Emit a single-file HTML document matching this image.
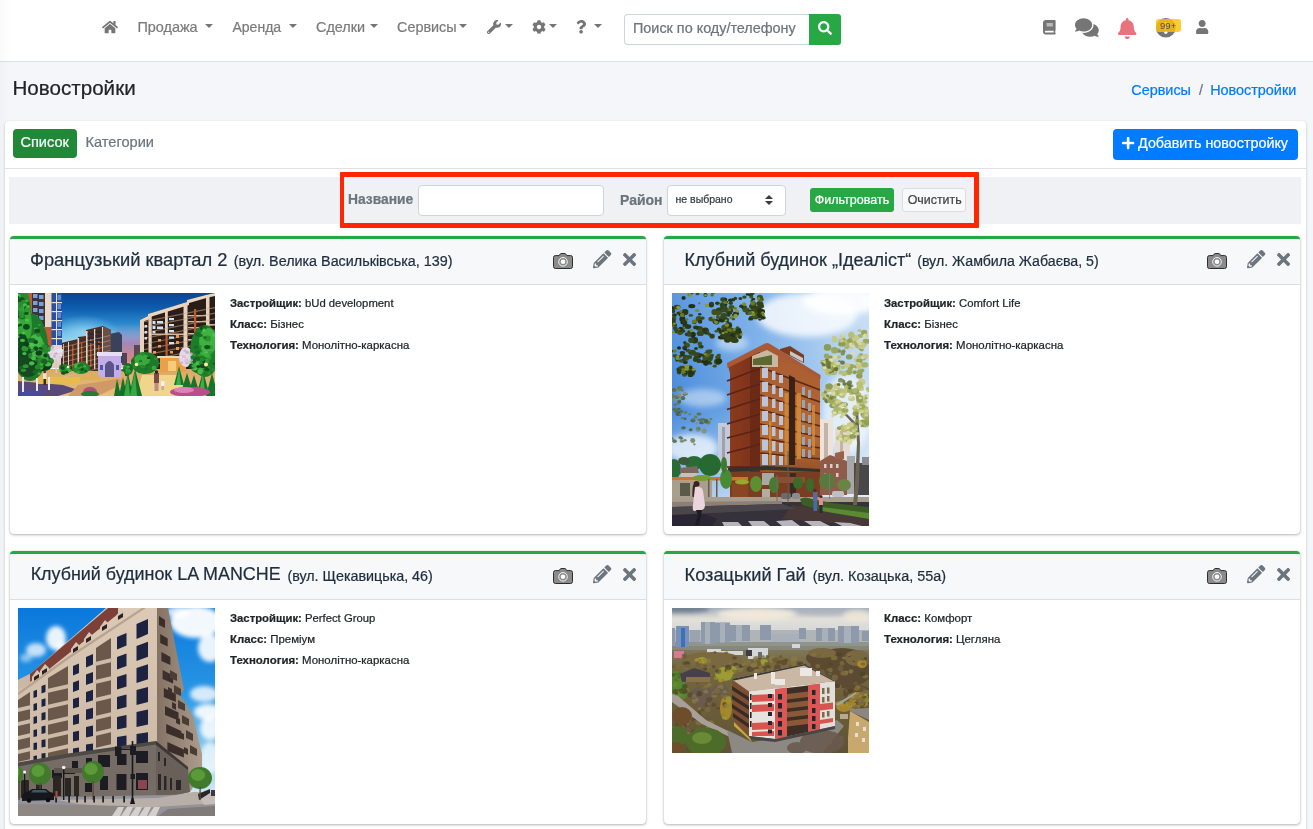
<!DOCTYPE html>
<html lang="ru">
<head>
<meta charset="utf-8">
<title>Новостройки</title>
<style>
*{box-sizing:border-box;margin:0;padding:0}
html,body{width:1313px;height:829px;overflow:hidden}
body{background:#f4f6f9;font-family:"Liberation Sans",Arial,Helvetica,sans-serif;font-size:14.4px;color:#212529;position:relative}
.abs{position:absolute}
.t{position:absolute;white-space:nowrap;line-height:1;-webkit-text-stroke:0.22px currentColor}
svg{display:block;position:absolute;overflow:visible}
/* navbar */
#nav{left:0;top:0;width:1313px;height:62px;background:#fff;border-bottom:1px solid #dee2e6}
.nl{color:#7b7b7b;font-size:14.4px}
.caret{position:absolute;width:0;height:0;border-left:4px solid transparent;border-right:4px solid transparent;border-top:4px solid #757575}
#search{left:624px;top:14px;width:186px;height:31px;border:1px solid #ced4da;border-right:0;border-radius:4px 0 0 4px;background:#fff}
#sbtn{left:809px;top:14px;width:32px;height:31px;background:#28a745;border-radius:0 3px 3px 0}
/* content */
#outer{left:5px;top:121px;width:1301px;height:720px;background:#fff;border-radius:4px;box-shadow:0 0 1px rgba(0,0,0,.125),0 1px 3px rgba(0,0,0,.2)}
#tabline{left:5px;top:168px;width:1301px;height:1px;background:#dfe1e4}
#fbar{left:9px;top:177px;width:1292px;height:47px;background:#eff1f4}
.card{position:absolute;background:#fff;border-radius:4px;border-top:3px solid #28a745;box-shadow:0 0 1px rgba(0,0,0,.25),0 1px 3px rgba(0,0,0,.28)}
.ch{position:absolute;left:0;top:0;width:100%;height:46px;background:#f7f8fa;border-bottom:1px solid #dcdee1;border-radius:2px 2px 0 0}
.ct{color:#1f2d3d;font-size:18.3px}
.ct small{font-size:14.35px}
.bt{font-size:11.3px;color:#212529}
.bt b{font-weight:bold}
.bt2{font-size:11.43px}
</style>
</head>
<body>
<div id="wrap" style="position:absolute;left:0;top:0;width:1313px;height:829px;overflow:hidden;will-change:transform;opacity:.9999">
<!-- NAVBAR -->
<div id="nav" class="abs"></div>
<div id="lsh" class="abs" style="left:0;top:0;width:13px;height:829px;background:linear-gradient(to right,rgba(0,0,0,.02),rgba(0,0,0,0))"></div>
<div class="t nl" style="left:137.5px;top:20px">Продажа</div><i class="caret" style="left:205px;top:24px"></i>
<div class="t nl" style="left:232.5px;top:20.3px;font-size:14px">Аренда</div><i class="caret" style="left:289px;top:24px"></i>
<div class="t nl" style="left:316px;top:20px">Сделки</div><i class="caret" style="left:370px;top:24px"></i>
<div class="t nl" style="left:397px;top:20px">Сервисы</div><i class="caret" style="left:459px;top:24px"></i>
<i class="caret" style="left:505px;top:24px"></i>
<i class="caret" style="left:549px;top:24px"></i>
<i class="caret" style="left:594px;top:24px"></i>
<div id="search" class="abs"></div>
<div class="t" style="left:633px;top:21px;font-size:14.4px;color:#6c757d">Поиск по коду/телефону</div>
<div id="sbtn" class="abs"></div>

<!-- HEADER -->
<div class="t" style="left:12.5px;top:78px;font-size:20.6px;color:#212529">Новостройки</div>
<div class="t" style="left:1131.3px;top:83px;font-size:14.4px;color:#007bff">Сервисы</div>
<div class="t" style="left:1199px;top:83px;font-size:14.4px;color:#6c757d">/</div>
<div class="t" style="left:1210.2px;top:83px;font-size:14.4px;color:#007bff">Новостройки</div>

<!-- OUTER CARD -->
<div id="outer" class="abs"></div>
<div class="abs" style="left:13px;top:129px;width:64px;height:29px;background:#218838;border-radius:4px"></div>
<div class="t" style="left:20.4px;top:135px;font-size:14.6px;color:#fff">Список</div>
<div class="t" style="left:85.5px;top:135px;font-size:14.6px;color:#6c757d">Категории</div>
<div class="abs" style="left:1113px;top:129px;width:185px;height:31px;background:#007bff;border-radius:4px"></div>
<div class="t" style="left:1138px;top:136px;font-size:14.35px;color:#fff">Добавить новостройку</div>
<div id="tabline" class="abs"></div>

<!-- FILTER BAR -->
<div id="fbar" class="abs"></div>
<div class="t" style="left:348px;top:193px;font-size:13.8px;font-weight:bold;color:#6c757d">Название</div>
<div class="abs" style="left:418px;top:185px;width:186px;height:31px;background:#fff;border:1px solid #ced4da;border-radius:4px"></div>
<div class="t" style="left:620px;top:192.5px;font-size:14px;font-weight:bold;color:#6c757d">Район</div>
<div class="abs" style="left:667px;top:185px;width:119px;height:31px;background:#fff;border:1px solid #ced4da;border-radius:4px"></div>
<div class="t" style="left:675.5px;top:194px;font-size:10.5px;color:#343a40">не выбрано</div>
<div class="abs" style="left:810px;top:188px;width:84px;height:24px;background:#28a745;border-radius:3px"></div>
<div class="t" style="left:814.8px;top:194px;font-size:12.5px;color:#fff">Фильтровать</div>
<div class="abs" style="left:902px;top:188px;width:64px;height:24px;background:#f8f9fa;border:1px solid #ddd;border-radius:3px"></div>
<div class="t" style="left:907.7px;top:194px;font-size:12.4px;color:#444">Очистить</div>
<div class="abs" style="left:340px;top:172px;width:639px;height:56.4px;border:5px solid #ff2600;border-left-width:4.6px;border-radius:1px"></div>

<!-- CARDS -->
<div class="card" style="left:10px;top:236px;width:636px;height:298px"><div class="ch"></div></div>
<div class="card" style="left:664px;top:236px;width:636px;height:298px"><div class="ch"></div></div>
<div class="card" style="left:10px;top:551px;width:636px;height:273px"><div class="ch"></div></div>
<div class="card" style="left:664px;top:551px;width:636px;height:273px"><div class="ch"></div></div>

<div class="t ct" style="left:30px;top:250.60px;font-size:18.32px">Французький квартал 2</div>
<div class="t ct" style="left:233.8px;top:253.96px;font-size:14.35px">(вул. Велика Васильківська, 139)</div>
<div class="t ct" style="left:684.6px;top:250.84px;font-size:18.03px">Клубний будинок „Ідеаліст“</div>
<div class="t ct" style="left:917.2px;top:254.10px;font-size:14.18px">(вул. Жамбила Жабаєва, 5)</div>
<div class="t ct" style="left:30.7px;top:565.94px;font-size:17.91px">Клубний будинок LA MANCHE</div>
<div class="t ct" style="left:287.4px;top:568.99px;font-size:14.31px">(вул. Щекавицька, 46)</div>
<div class="t ct" style="left:684.6px;top:565.73px;font-size:18.16px">Козацький Гай</div>
<div class="t ct" style="left:812.7px;top:568.93px;font-size:14.38px">(вул. Козацька, 55а)</div>

<div class="t bt" style="left:230px;top:297.5px"><b>Застройщик:</b> bUd development</div>
<div class="t bt bt2" style="left:230px;top:318.5px"><b>Класс:</b> Бізнес</div>
<div class="t bt bt2" style="left:230px;top:339.5px"><b>Технология:</b> Монолітно-каркасна</div>

<div class="t bt" style="left:884px;top:297.5px"><b>Застройщик:</b> Comfort Life</div>
<div class="t bt bt2" style="left:884px;top:318.5px"><b>Класс:</b> Бізнес</div>
<div class="t bt bt2" style="left:884px;top:339.5px"><b>Технология:</b> Монолітно-каркасна</div>

<div class="t bt" style="left:230px;top:612.5px"><b>Застройщик:</b> Perfect Group</div>
<div class="t bt bt2" style="left:230px;top:633.5px"><b>Класс:</b> Преміум</div>
<div class="t bt bt2" style="left:230px;top:654.5px"><b>Технология:</b> Монолітно-каркасна</div>

<div class="t bt bt2" style="left:884px;top:612.5px"><b>Класс:</b> Комфорт</div>
<div class="t bt bt2" style="left:884px;top:633.5px"><b>Технология:</b> Цегляна</div>

<!-- ICONS -->
<svg viewBox="0 0 576 512" style="left:102px;top:19.6px;width:16px;height:14.2px" preserveAspectRatio="none"><path d="M280.37 148.26L96 300.11V464a16 16 0 0 0 16 16l112.06-.29a16 16 0 0 0 15.92-16V368a16 16 0 0 1 16-16h64a16 16 0 0 1 16 16v95.64a16 16 0 0 0 16 16.05L464 480a16 16 0 0 0 16-16V300L295.67 148.26a12.19 12.19 0 0 0-15.3 0zM571.6 251.47L488 182.56V44.05a12 12 0 0 0-12-12h-56a12 12 0 0 0-12 12v72.61L318.47 43a48 48 0 0 0-61 0L4.34 251.47a12 12 0 0 0-1.6 16.9l25.5 31A12 12 0 0 0 45.15 301l235.22-193.74a12.19 12.19 0 0 1 15.3 0L530.9 301a12 12 0 0 0 16.9-1.6l25.5-31a12 12 0 0 0-1.7-16.93z" fill="#757575"/></svg>
<svg viewBox="0 0 512 512" style="left:487px;top:20px;width:14px;height:14px" preserveAspectRatio="none"><path d="M507.73 109.1c-2.24-9.03-13.54-12.09-20.12-5.51l-74.36 74.36-67.88-11.31-11.31-67.88 74.36-74.36c6.62-6.62 3.43-17.9-5.66-20.16-47.38-11.74-99.55.91-136.580 37.930-39.640 39.640-50.550 97.100-34.050 147.200L18.740 402.760c-24.990 24.990-24.990 65.510 0 90.500 24.990 24.990 65.510 24.990 90.500 0l213.210-213.210c50.120 16.710 107.470 5.680 147.370-34.220 37.070-37.070 49.700-89.320 37.910-136.730zM64 472c-13.250 0-24-10.750-24-24 0-13.260 10.750-24 24-24s24 10.740 24 24c0 13.250-10.750 24-24 24z" fill="#757575"/></svg>
<svg viewBox="0 0 512 512" style="left:531.5px;top:19.8px;width:14px;height:14px" preserveAspectRatio="none"><path d="M487.4 315.7l-42.6-24.6c4.3-23.2 4.3-47 0-70.200l42.600-24.600c4.900-2.800 7.100-8.600 5.500-14-11.100-35.600-30-67.800-54.700-94.600-3.800-4.100-10-5.100-14.800-2.300L380.800 110c-17.900-15.400-38.500-27.300-60.800-35.100V25.800c0-5.600-3.900-10.500-9.400-11.700-36.700-8.200-74.300-7.800-109.200 0-5.500 1.200-9.400 6.100-9.400 11.700V75c-22.200 7.900-42.800 19.800-60.800 35.100L88.700 85.500c-4.900-2.800-11-1.900-14.800 2.300-24.700 26.700-43.600 58.900-54.700 94.600-1.700 5.400.6 11.200 5.500 14L67.300 221c-4.300 23.200-4.300 47 0 70.200l-42.600 24.600c-4.900 2.800-7.100 8.600-5.500 14 11.100 35.600 30 67.800 54.700 94.600 3.800 4.100 10 5.100 14.800 2.300l42.600-24.600c17.900 15.400 38.500 27.300 60.800 35.100v49.200c0 5.600 3.900 10.500 9.400 11.700 36.700 8.200 74.300 7.800 109.200 0 5.500-1.200 9.400-6.100 9.400-11.700v-49.200c22.200-7.900 42.800-19.800 60.800-35.100l42.600 24.600c4.900 2.800 11 1.900 14.800-2.300 24.700-26.700 43.600-58.900 54.700-94.600 1.500-5.500-.7-11.300-5.600-14.100zM256 336c-44.100 0-80-35.900-80-80s35.900-80 80-80 80 35.900 80 80-35.900 80-80 80z" fill="#757575"/></svg>
<svg viewBox="0 0 384 512" style="left:576.4px;top:20px;width:10.2px;height:13.6px" preserveAspectRatio="none"><path d="M202.021 0C122.202 0 70.503 32.703 29.914 91.026c-7.363 10.58-5.093 25.086 5.178 32.874l43.138 32.709c10.373 7.865 25.132 6.026 33.253-4.148 25.049-31.381 43.63-49.449 82.757-49.449 30.764 0 68.816 19.799 68.816 49.631 0 22.552-18.617 34.134-48.993 51.164-35.423 19.86-82.299 44.576-82.299 106.405V320c0 13.255 10.745 24 24 24h72.471c13.255 0 24-10.745 24-24v-5.773c0-42.86 125.268-44.645 125.268-160.627C377.504 66.256 286.902 0 202.021 0zM192 373.459c-38.196 0-69.271 31.075-69.271 69.271 0 38.195 31.075 69.27 69.271 69.270s69.271-31.075 69.271-69.271-31.075-69.270-69.271-69.270z" fill="#757575"/></svg>
<svg viewBox="0 0 512 512" style="left:817.5px;top:21px;width:14px;height:14px" preserveAspectRatio="none"><path d="M505 442.7L405.3 343c-4.5-4.5-10.6-7-17-7H372c27.6-35.3 44-79.7 44-128C416 93.1 322.9 0 208 0S0 93.1 0 208s93.1 208 208 208c48.3 0 92.7-16.4 128-44v16.3c0 6.4 2.5 12.5 7 17l99.7 99.7c9.4 9.4 24.6 9.4 33.9 0l28.3-28.3c9.4-9.4 9.4-24.6.1-34zM208 336c-70.7 0-128-57.2-128-128 0-70.7 57.2-128 128-128 70.7 0 128 57.2 128 128 0 70.7-57.2 128-128 128z" fill="#fff"/></svg>
<svg viewBox="0 0 448 512" style="left:1043.3px;top:19.5px;width:12.6px;height:14.4px" preserveAspectRatio="none"><path d="M448 360V24c0-13.3-10.7-24-24-24H96C43 0 0 43 0 96v320c0 53 43 96 96 96h328c13.3 0 24-10.7 24-24v-16c0-7.5-3.5-14.3-8.9-18.7-4.2-15.4-4.2-59.3 0-74.7 5.4-4.3 8.9-11.1 8.9-18.6zM128 134c0-3.3 2.7-6 6-6h212c3.3 0 6 2.7 6 6v20c0 3.3-2.7 6-6 6H134c-3.3 0-6-2.7-6-6v-20zm0 64c0-3.3 2.7-6 6-6h212c3.3 0 6 2.7 6 6v20c0 3.3-2.7 6-6 6H134c-3.3 0-6-2.7-6-6v-20zm253.4 250H96c-17.7 0-32-14.3-32-32 0-17.6 14.4-32 32-32h285.4c-1.9 17.1-1.9 46.9 0 64z" fill="#757575"/></svg>
<svg viewBox="0 0 576 512" style="left:1075px;top:17.4px;width:23.8px;height:21.2px" preserveAspectRatio="none"><path d="M416 192c0-88.4-93.1-160-208-160S0 103.6 0 192c0 34.3 14.1 65.900 38 92-13.400 30.200-35.500 54.200-35.800 54.500-2.200 2.300-2.800 5.700-1.500 8.700S4.800 352 8 352c36.600 0 66.900-12.300 88.700-25 32.200 15.700 70.300 25 111.300 25 114.900 0 208-71.600 208-160zm122 220c23.900-26 38-57.700 38-92 0-66.900-53.500-124.200-129.300-148.100.9 6.600 1.300 13.300 1.300 20.100 0 105.900-107.700 192-240 192-10.800 0-21.300-.8-31.700-1.900C207.800 439.600 281.800 480 368 480c41 0 79.100-9.200 111.300-25 21.800 12.700 52.100 25 88.700 25 3.200 0 6.100-1.900 7.300-4.800 1.300-2.900.7-6.300-1.500-8.700-.3-.3-22.400-24.200-35.800-54.500z" fill="#757575"/></svg>
<svg viewBox="0 0 448 512" style="left:1118px;top:17.5px;width:18.4px;height:21px" preserveAspectRatio="none"><path d="M224 512c35.32 0 63.97-28.65 63.97-64H160.03c0 35.35 28.65 64 63.97 64zm215.39-149.71c-19.32-20.76-55.47-51.99-55.47-154.29 0-77.7-54.48-139.9-127.94-155.16V32c0-17.67-14.32-32-31.98-32s-31.98 14.33-31.98 32v20.84C118.56 68.1 64.08 130.3 64.08 208c0 102.3-36.15 133.53-55.47 154.29-6 6.45-8.66 14.16-8.61 21.71.11 16.4 12.98 32 32.1 32h383.8c19.12 0 32-15.6 32.1-32 .05-7.55-2.61-15.27-8.61-21.71z" fill="#e8737f"/></svg>
<svg viewBox="0 0 20 20" style="left:1156px;top:18px;width:19.6px;height:19.6px"><circle cx="10" cy="10" r="10" fill="#757575"/><rect x="8.6" y="4" width="2.8" height="7.5" rx="1" fill="#fff"/><circle cx="10" cy="14.6" r="1.7" fill="#fff"/></svg>
<div class="abs" style="left:1155.5px;top:19px;width:25.5px;height:13px;background:rgba(255,193,7,.82);border-radius:3px"></div>
<div class="t" style="left:1160px;top:21px;font-size:9.6px;-webkit-text-stroke:0;color:#55503a">99+</div>
<svg viewBox="0 0 448 512" style="left:1195.7px;top:19.7px;width:12.3px;height:14.1px" preserveAspectRatio="none"><path d="M224 256c70.7 0 128-57.3 128-128S294.7 0 224 0 96 57.3 96 128s57.3 128 128 128zm89.6 32h-16.7c-22.2 10.2-46.9 16-72.9 16s-50.6-5.8-72.9-16h-16.7C60.2 288 0 348.2 0 422.4V464c0 26.5 21.5 48 48 48h352c26.5 0 48-21.5 48-48v-41.6c0-74.2-60.2-134.4-134.4-134.4z" fill="#757575"/></svg>
<svg viewBox="0 0 448 512" style="left:1121.8px;top:136px;width:12.25px;height:14px" preserveAspectRatio="none"><path d="M416 208H272V64c0-17.67-14.33-32-32-32h-32c-17.67 0-32 14.33-32 32v144H32c-17.67 0-32 14.33-32 32v32c0 17.67 14.33 32 32 32h144v144c0 17.67 14.33 32 32 32h32c17.67 0 32-14.33 32-32V304h144c17.67 0 32-14.33 32-32v-32c0-17.67-14.33-32-32-32z" fill="#fff"/></svg>
<svg viewBox="0 0 4 5" style="left:764.7px;top:195px;width:8px;height:10px"><path d="M2 0L0 2h4zm0 5L0 3h4z" fill="#343a40"/></svg>
<svg viewBox="0 0 20 16" style="left:553px;top:253px;width:20px;height:16px"><path d="M6.2 2.6 L7.3 0.9 Q7.6 0.5 8.1 0.5 H11.9 Q12.4 0.5 12.7 0.9 L13.8 2.6 H17.6 Q19.5 2.6 19.5 4.5 V13.6 Q19.5 15.5 17.6 15.5 H2.4 Q0.5 15.5 0.5 13.6 V4.5 Q0.5 2.6 2.4 2.6 Z" fill="#8b8b8b" stroke="#2e2e2e" stroke-width="1"/><circle cx="10" cy="8.8" r="4.3" fill="#8b8b8b" stroke="#fff" stroke-width="0.9"/><circle cx="10" cy="8.8" r="2.3" fill="#fff"/></svg>
<svg viewBox="0 0 512 512" style="left:592.7px;top:249.9px;width:18.3px;height:18.3px" preserveAspectRatio="none"><path d="M497.9 142.1l-46.1 46.1c-4.7 4.7-12.3 4.7-17 0l-111-111c-4.7-4.7-4.7-12.3 0-17l46.1-46.1c18.7-18.7 49.1-18.7 67.900 0l60.100 60.100c18.800 18.700 18.800 49.100 0 67.900zM284.200 99.800L21.600 362.400.4 483.900c-2.900 16.400 11.400 30.600 27.800 27.800l121.500-21.300 262.600-262.600c4.700-4.700 4.700-12.300 0-17l-111-111c-4.800-4.700-12.400-4.700-17.100 0zM124.100 339.900c-5.500-5.500-5.500-14.300 0-19.800l154-154c5.500-5.500 14.300-5.500 19.800 0s5.500 14.300 0 19.800l-154 154c-5.500 5.500-14.300 5.500-19.800 0zM88 424h48v36.300l-64.500 11.300-31.100-31.100L51.700 376H88v48z" fill="#6c757d"/></svg>
<svg viewBox="0 0 352 512" style="left:623px;top:249.8px;width:13.1px;height:19px" preserveAspectRatio="none"><path d="M242.72 256l100.07-100.07c12.28-12.28 12.28-32.19 0-44.48l-22.24-22.24c-12.28-12.28-32.19-12.28-44.48 0L176 189.28 75.93 89.21c-12.28-12.28-32.19-12.28-44.48 0L9.21 111.45c-12.28 12.28-12.28 32.19 0 44.48L109.28 256 9.21 356.07c-12.28 12.28-12.28 32.19 0 44.48l22.24 22.24c12.28 12.28 32.2 12.28 44.48 0L176 322.72l100.07 100.07c12.28 12.28 32.2 12.28 44.48 0l22.24-22.24c12.28-12.28 12.28-32.19 0-44.48L242.72 256z" fill="#6c757d"/></svg>
<svg viewBox="0 0 20 16" style="left:1207px;top:253px;width:20px;height:16px"><path d="M6.2 2.6 L7.3 0.9 Q7.6 0.5 8.1 0.5 H11.9 Q12.4 0.5 12.7 0.9 L13.8 2.6 H17.6 Q19.5 2.6 19.5 4.5 V13.6 Q19.5 15.5 17.6 15.5 H2.4 Q0.5 15.5 0.5 13.6 V4.5 Q0.5 2.6 2.4 2.6 Z" fill="#8b8b8b" stroke="#2e2e2e" stroke-width="1"/><circle cx="10" cy="8.8" r="4.3" fill="#8b8b8b" stroke="#fff" stroke-width="0.9"/><circle cx="10" cy="8.8" r="2.3" fill="#fff"/></svg>
<svg viewBox="0 0 512 512" style="left:1246.7px;top:249.9px;width:18.3px;height:18.3px" preserveAspectRatio="none"><path d="M497.9 142.1l-46.1 46.1c-4.7 4.7-12.3 4.7-17 0l-111-111c-4.7-4.7-4.7-12.3 0-17l46.1-46.1c18.7-18.7 49.1-18.7 67.900 0l60.100 60.100c18.800 18.700 18.800 49.100 0 67.900zM284.200 99.800L21.600 362.400.4 483.900c-2.900 16.400 11.400 30.600 27.800 27.800l121.500-21.300 262.600-262.600c4.700-4.700 4.700-12.300 0-17l-111-111c-4.800-4.700-12.400-4.700-17.100 0zM124.100 339.900c-5.500-5.500-5.500-14.300 0-19.800l154-154c5.500-5.500 14.300-5.500 19.800 0s5.500 14.300 0 19.800l-154 154c-5.500 5.500-14.300 5.500-19.800 0zM88 424h48v36.300l-64.500 11.300-31.100-31.100L51.700 376H88v48z" fill="#6c757d"/></svg>
<svg viewBox="0 0 352 512" style="left:1277px;top:249.8px;width:13.1px;height:19px" preserveAspectRatio="none"><path d="M242.72 256l100.07-100.07c12.28-12.28 12.28-32.19 0-44.48l-22.24-22.24c-12.28-12.28-32.19-12.28-44.48 0L176 189.28 75.93 89.21c-12.28-12.28-32.19-12.28-44.48 0L9.21 111.45c-12.28 12.28-12.28 32.19 0 44.48L109.28 256 9.21 356.07c-12.28 12.28-12.28 32.19 0 44.48l22.24 22.24c12.28 12.28 32.2 12.28 44.48 0L176 322.72l100.07 100.07c12.28 12.28 32.2 12.28 44.48 0l22.24-22.24c12.28-12.28 12.28-32.19 0-44.48L242.72 256z" fill="#6c757d"/></svg>
<svg viewBox="0 0 20 16" style="left:553px;top:568px;width:20px;height:16px"><path d="M6.2 2.6 L7.3 0.9 Q7.6 0.5 8.1 0.5 H11.9 Q12.4 0.5 12.7 0.9 L13.8 2.6 H17.6 Q19.5 2.6 19.5 4.5 V13.6 Q19.5 15.5 17.6 15.5 H2.4 Q0.5 15.5 0.5 13.6 V4.5 Q0.5 2.6 2.4 2.6 Z" fill="#8b8b8b" stroke="#2e2e2e" stroke-width="1"/><circle cx="10" cy="8.8" r="4.3" fill="#8b8b8b" stroke="#fff" stroke-width="0.9"/><circle cx="10" cy="8.8" r="2.3" fill="#fff"/></svg>
<svg viewBox="0 0 512 512" style="left:592.7px;top:564.9px;width:18.3px;height:18.3px" preserveAspectRatio="none"><path d="M497.9 142.1l-46.1 46.1c-4.7 4.7-12.3 4.7-17 0l-111-111c-4.7-4.7-4.7-12.3 0-17l46.1-46.1c18.7-18.7 49.1-18.7 67.900 0l60.100 60.100c18.800 18.700 18.800 49.100 0 67.900zM284.200 99.800L21.600 362.400.4 483.900c-2.900 16.400 11.400 30.600 27.800 27.800l121.500-21.300 262.600-262.600c4.700-4.700 4.700-12.300 0-17l-111-111c-4.800-4.700-12.400-4.700-17.100 0zM124.100 339.900c-5.500-5.500-5.500-14.300 0-19.800l154-154c5.500-5.500 14.300-5.500 19.800 0s5.500 14.300 0 19.800l-154 154c-5.500 5.500-14.300 5.500-19.800 0zM88 424h48v36.300l-64.500 11.300-31.100-31.100L51.700 376H88v48z" fill="#6c757d"/></svg>
<svg viewBox="0 0 352 512" style="left:623px;top:564.8px;width:13.1px;height:19px" preserveAspectRatio="none"><path d="M242.72 256l100.07-100.07c12.28-12.28 12.28-32.19 0-44.48l-22.24-22.24c-12.28-12.28-32.19-12.28-44.48 0L176 189.28 75.93 89.21c-12.28-12.28-32.19-12.28-44.48 0L9.21 111.45c-12.28 12.28-12.28 32.19 0 44.48L109.28 256 9.21 356.07c-12.28 12.28-12.28 32.19 0 44.48l22.24 22.24c12.28 12.28 32.2 12.28 44.48 0L176 322.72l100.07 100.07c12.28 12.28 32.2 12.28 44.48 0l22.24-22.24c12.28-12.28 12.28-32.19 0-44.48L242.72 256z" fill="#6c757d"/></svg>
<svg viewBox="0 0 20 16" style="left:1207px;top:568px;width:20px;height:16px"><path d="M6.2 2.6 L7.3 0.9 Q7.6 0.5 8.1 0.5 H11.9 Q12.4 0.5 12.7 0.9 L13.8 2.6 H17.6 Q19.5 2.6 19.5 4.5 V13.6 Q19.5 15.5 17.6 15.5 H2.4 Q0.5 15.5 0.5 13.6 V4.5 Q0.5 2.6 2.4 2.6 Z" fill="#8b8b8b" stroke="#2e2e2e" stroke-width="1"/><circle cx="10" cy="8.8" r="4.3" fill="#8b8b8b" stroke="#fff" stroke-width="0.9"/><circle cx="10" cy="8.8" r="2.3" fill="#fff"/></svg>
<svg viewBox="0 0 512 512" style="left:1246.7px;top:564.9px;width:18.3px;height:18.3px" preserveAspectRatio="none"><path d="M497.9 142.1l-46.1 46.1c-4.7 4.7-12.3 4.7-17 0l-111-111c-4.7-4.7-4.7-12.3 0-17l46.1-46.1c18.7-18.7 49.1-18.7 67.900 0l60.100 60.100c18.800 18.700 18.800 49.100 0 67.900zM284.200 99.800L21.600 362.400.4 483.900c-2.900 16.400 11.400 30.600 27.800 27.800l121.500-21.300 262.600-262.600c4.700-4.700 4.700-12.300 0-17l-111-111c-4.800-4.700-12.400-4.700-17.100 0zM124.100 339.900c-5.500-5.500-5.500-14.300 0-19.800l154-154c5.500-5.500 14.300-5.500 19.800 0s5.500 14.300 0 19.800l-154 154c-5.500 5.500-14.300 5.500-19.800 0zM88 424h48v36.300l-64.500 11.300-31.100-31.100L51.700 376H88v48z" fill="#6c757d"/></svg>
<svg viewBox="0 0 352 512" style="left:1277px;top:564.8px;width:13.1px;height:19px" preserveAspectRatio="none"><path d="M242.72 256l100.07-100.07c12.28-12.28 12.28-32.19 0-44.48l-22.24-22.24c-12.28-12.28-32.19-12.28-44.48 0L176 189.28 75.93 89.21c-12.28-12.28-32.19-12.28-44.48 0L9.21 111.45c-12.28 12.28-12.28 32.19 0 44.48L109.28 256 9.21 356.07c-12.28 12.28-12.28 32.19 0 44.48l22.24 22.24c12.28 12.28 32.2 12.28 44.48 0L176 322.72l100.07 100.07c12.28 12.28 32.2 12.28 44.48 0l22.24-22.24c12.28-12.28 12.28-32.19 0-44.48L242.72 256z" fill="#6c757d"/></svg>
<!-- PHOTOS -->
<svg id="p1" viewBox="0 0 197 103" style="left:18px;top:293px;width:197px;height:103px;overflow:hidden">
<defs>
<linearGradient id="p1sky" x1="0" y1="0" x2="0" y2="1"><stop offset="0" stop-color="#0a4496"/><stop offset=".2" stop-color="#0e5cac"/><stop offset=".42" stop-color="#2a8cd0"/><stop offset=".58" stop-color="#74c0ea"/><stop offset=".7" stop-color="#cfe2ee"/><stop offset="1" stop-color="#e8c8b8"/></linearGradient><radialGradient id="p1glow" cx="0.5" cy="0.5" r="0.5"><stop offset="0" stop-color="#9ad8f4" stop-opacity=".85"/><stop offset="1" stop-color="#9ad8f4" stop-opacity="0"/></radialGradient>
<linearGradient id="p1sk2" x1="0" y1="0" x2="0" y2="1"><stop offset="0" stop-color="#7a86c0" stop-opacity="0"/><stop offset=".5" stop-color="#a088b8"/><stop offset="1" stop-color="#e8857a"/></linearGradient>
<linearGradient id="p1gr" x1="0" y1="0" x2="0" y2="1"><stop offset="0" stop-color="#d9a868"/><stop offset="1" stop-color="#e8c07a"/></linearGradient>
<filter id="p1b" x="-5%" y="-5%" width="110%" height="110%"><feGaussianBlur stdDeviation="0.55"/></filter>
<filter id="p1b2" x="-10%" y="-10%" width="120%" height="120%"><feGaussianBlur stdDeviation="1.2"/></filter>
<clipPath id="p1c"><rect width="197" height="103"/></clipPath>
</defs>
<g clip-path="url(#p1c)">
<rect width="197" height="75" fill="url(#p1sky)"/><ellipse cx="66" cy="40" rx="36" ry="18" fill="url(#p1glow)"/>
<rect x="98" y="30" width="30" height="40" fill="url(#p1sk2)" filter="url(#p1b2)"/>
<g filter="url(#p1b)">
<!-- ground -->
<rect x="0" y="76" width="197" height="27" fill="url(#p1gr)"/>
<!-- far dark buildings -->
<polygon points="91,41 101,39 104,42 104,70 91,70" fill="#39435a"/>
<rect x="104" y="60" width="5" height="12" fill="#4a4452"/>
<rect x="116" y="52" width="6" height="18" fill="#5a4650"/>
<!-- mid building -->
<polygon points="43,50 60,46 60,44 68,43 68,37 85,33 93,37 93,78 43,78" fill="#4a2e22"/>
<g fill="#e4d4c4"><rect x="59.500" y="45" width="1.600" height="30"/><rect x="50" y="49" width="1" height="27"/><rect x="68" y="38" width="1.600" height="38"/><rect x="76" y="36" width="1.300" height="40"/><rect x="84" y="34" width="1.500" height="42"/><rect x="45" y="51" width=".8" height="25"/></g>
<g fill="#b8562c"><rect x="54" y="52" width="1.500" height="22"/><rect x="72" y="44" width="1.500" height="30"/><rect x="80" y="48" width="1.500" height="26"/><rect x="63" y="50" width="1.300" height="24"/></g>
<polygon points="85,33 93,37 93,72 85,72" fill="#6a5048"/><polygon points="44,54.0 92,42.0 92,42.9 44,54.9" fill="#d8c4b0" opacity=".45"/><polygon points="44,59.0 92,47.0 92,47.9 44,59.9" fill="#d8c4b0" opacity=".45"/><polygon points="44,64.0 92,52.0 92,52.9 44,64.9" fill="#d8c4b0" opacity=".45"/><polygon points="44,69.0 92,57.0 92,57.9 44,69.9" fill="#d8c4b0" opacity=".45"/><polygon points="44,74.0 92,62.0 92,62.9 44,74.9" fill="#d8c4b0" opacity=".45"/><polygon points="44,79.0 92,67.0 92,67.9 44,79.9" fill="#d8c4b0" opacity=".45"/><polygon points="44,84.0 92,72.0 92,72.9 44,84.9" fill="#d8c4b0" opacity=".45"/>
<g fill="#2a2a3c"><rect x="69.800" y="40" width="5.800" height="2"/><rect x="69.800" y="44" width="5.800" height="2"/><rect x="69.800" y="48" width="5.800" height="2"/><rect x="77.500" y="38" width="6" height="2"/><rect x="77.500" y="42" width="6" height="2"/><rect x="77.500" y="46" width="6" height="2"/><rect x="77.500" y="50" width="6" height="2"/></g>
<!-- left tower -->
<rect x="8" y="0" width="36" height="56" fill="#d8cfc8"/>
<rect x="8" y="0" width="6" height="22" fill="#c65a30"/>
<rect x="14" y="0" width="13" height="34" fill="#3a3040"/>
<g fill="#7aa0d8"><rect x="15" y="1" width="4.500" height="4"/><rect x="21" y="2" width="4.500" height="4"/><rect x="15" y="8" width="4.500" height="4"/><rect x="21" y="9" width="4.500" height="4"/><rect x="15" y="15" width="4.500" height="4"/><rect x="21" y="16" width="4.500" height="4"/><rect x="15" y="22" width="4.500" height="4"/><rect x="21" y="23" width="4.500" height="4"/></g>
<rect x="27" y="0" width="6.500" height="34" fill="#ead8c6"/>
<rect x="27" y="34" width="7" height="20" fill="#c25a30"/>
<rect x="33.500" y="0" width="10.500" height="52" fill="#2c4f9c"/>
<g fill="#e8e0da"><rect x="33.500" y="9" width="10.500" height="1.200"/><rect x="33.500" y="18" width="10.500" height="1.200"/><rect x="33.500" y="27" width="10.500" height="1.200"/><rect x="33.500" y="36" width="10.500" height="1.200"/><rect x="33.500" y="45" width="10.500" height="1.200"/><rect x="38" y="0" width="1" height="52"/></g>
<g fill="#5a8ad8"><rect x="39.500" y="2" width="3.500" height="5"/><rect x="39.500" y="11" width="3.500" height="5"/><rect x="39.500" y="20" width="3.500" height="5"/><rect x="39.500" y="29" width="3.500" height="5"/><rect x="39.500" y="38" width="3.500" height="5"/></g>
<!-- right building -->
<polygon points="122,27 130,23 130,21 169,9 169,7 188,2 197,0 197,76 122,76" fill="#2c1c18"/>
<polygon points="122,27 130,23 130,21 169,9 169,7 188,2 197,0 197,3 190,4.500 171,10 171,12 132,24 132,26 124,29" fill="#ecd6c0"/>
<g fill="#e8d2bc"><rect x="122" y="27" width="4" height="36"/><rect x="130.500" y="23" width="3.200" height="40"/><rect x="147" y="17" width="2.800" height="24"/><rect x="165.500" y="10" width="4" height="50"/><rect x="188" y="3" width="3.500" height="32"/></g>
<g fill="#d8b89c"><rect x="133" y="40.500" width="33" height="1.600"/><rect x="170" y="22" width="18" height="1.300"/><rect x="170" y="28" width="18" height="1.300"/><rect x="170" y="34" width="20" height="1.300"/><rect x="170" y="40" width="14" height="1.300"/><rect x="170" y="46" width="10" height="1.300"/><rect x="191" y="31" width="6" height="1.500"/></g>
<polygon points="126,28.0 197,14.0 197,15.2 126,29.2" fill="#c8a88c" opacity=".55"/><polygon points="126,33.6 197,19.6 197,20.8 126,34.8" fill="#c8a88c" opacity=".55"/><polygon points="126,39.2 197,25.2 197,26.4 126,40.4" fill="#c8a88c" opacity=".55"/><polygon points="126,44.8 197,30.8 197,32.0 126,46.0" fill="#c8a88c" opacity=".55"/><polygon points="126,50.4 197,36.4 197,37.6 126,51.6" fill="#c8a88c" opacity=".55"/><polygon points="126,56.0 197,42.0 197,43.2 126,57.2" fill="#c8a88c" opacity=".55"/><polygon points="126,61.6 197,47.6 197,48.8 126,62.8" fill="#c8a88c" opacity=".55"/><polygon points="126,67.2 197,53.2 197,54.4 126,68.4" fill="#c8a88c" opacity=".55"/><polygon points="126,72.8 197,58.8 197,60.0 126,74.0" fill="#c8a88c" opacity=".55"/><g fill="#b85a30"><rect x="147.500" y="42" width="2.200" height="22"/><rect x="176" y="16" width="2.200" height="32"/></g>
<g fill="#cfe4f4"><rect x="134.500" y="28" width="3" height="3"/><rect x="139" y="28" width="6" height="2.500"/><rect x="134.500" y="33" width="3" height="3"/><rect x="139" y="33.500" width="6" height="2.500"/><rect x="134.500" y="38" width="3" height="2.400"/><rect x="151" y="25" width="5" height="2.200"/><rect x="151" y="31" width="5" height="2.200"/><rect x="151" y="37" width="5" height="2.200"/><rect x="151" y="43.500" width="5" height="2.200"/><rect x="151" y="49" width="5" height="2.200"/><rect x="126.500" y="32" width="2.500" height="2.500"/><rect x="126.500" y="38" width="2.500" height="2.500"/><rect x="126.500" y="44" width="2.500" height="2.500"/></g>
<g fill="#e89a50"><rect x="158" y="42" width="3" height="3"/><rect x="158" y="48" width="3" height="3"/><rect x="158" y="54" width="3" height="3"/><rect x="140" y="46" width="3" height="2.500"/><rect x="140" y="52" width="3" height="2.500"/><rect x="135" y="58" width="3" height="2.500"/><rect x="152" y="58" width="3" height="2.500"/></g>
<rect x="139" y="63" width="30" height="2" fill="#ecd6c0"/>
<rect x="142" y="65" width="26" height="14" fill="#e8a048"/>
<rect x="150" y="68" width="8" height="10" fill="#f6cc78"/>
<!-- arch -->
<rect x="80" y="60" width="23" height="24" fill="#c4aeea"/>
<rect x="79" y="59" width="25" height="4" fill="#e8def4"/>
<path d="M87 84 V72 Q91.500 64 96 72 V84 Z" fill="#5a5484"/>
<rect x="82" y="72" width="3" height="5" fill="#4a5aa8"/><rect x="98" y="72" width="3" height="5" fill="#4a5aa8"/>
<!-- bottom-left shadows -->
<polygon points="0,88 45,92 60,97 40,103 0,103" fill="#5a4a78"/>
<polygon points="0,96 30,98 20,103 0,103" fill="#4848a0"/>
<rect x="20" y="84" width="42" height="7" fill="#e6bc50"/>
<rect x="62" y="82" width="20" height="5" fill="#ddb058"/>
<polygon points="60,92 100,86 110,88 80,103 50,103" fill="#d09a68"/>
<!-- path right -->
<polygon points="124,82 160,82 170,103 118,103" fill="#f0d68a"/>
</g>
<!-- trees -->
<g filter="url(#p1b)">
<ellipse cx="12" cy="54" rx="18" ry="34" fill="#1f7a2a"/><ellipse cx="3" cy="20" rx="10" ry="26" fill="#248a2e"/>
<ellipse cx="6" cy="32" rx="8" ry="20" fill="#35a838"/>
<ellipse cx="24" cy="64" rx="12" ry="14" fill="#1c6a28"/>
<ellipse cx="10" cy="70" rx="12" ry="14" fill="#124a20"/>
<ellipse cx="18" cy="50" rx="7" ry="9" fill="#45b848"/><ellipse cx="4" cy="52" rx="6" ry="12" fill="#0f4a1c"/><ellipse cx="9" cy="14" rx="3" ry="7" fill="#176a26"/><ellipse cx="26" cy="72" rx="8" ry="6" fill="#0e3c18"/>
<ellipse cx="38" cy="60" rx="7" ry="8" fill="#e4d4e2"/>
<rect x="37.500" y="66" width="1.500" height="14" fill="#d8c8c0"/>
<ellipse cx="47" cy="76" rx="5" ry="5" fill="#1f7a2a"/>
<ellipse cx="63" cy="75" rx="9" ry="6" fill="#22802c"/>
<ellipse cx="60" cy="73" rx="4" ry="3" fill="#48b040"/>
<ellipse cx="127" cy="70" rx="14" ry="11" fill="#1e7a2a"/>
<ellipse cx="124" cy="67" rx="8" ry="6" fill="#3aa83c"/>
<ellipse cx="110" cy="76" rx="5" ry="6" fill="#1a6a28"/>
<ellipse cx="168" cy="64" rx="7" ry="10" fill="#e6d8e6"/>
<ellipse cx="187" cy="58" rx="15" ry="26" fill="#1f7e2a"/>
<ellipse cx="190" cy="48" rx="9" ry="13" fill="#3fb040"/>
<ellipse cx="180" cy="72" rx="8" ry="8" fill="#176426"/>
<g opacity=".9"><ellipse cx="6.9" cy="47.6" rx="3.3" ry="2.8" fill="#114c1c"/><ellipse cx="-0.8" cy="35.2" rx="2.4" ry="1.7" fill="#28902e"/><ellipse cx="14.1" cy="66.2" rx="2.5" ry="2.3" fill="#0e3e18"/><ellipse cx="1.5" cy="31.7" rx="2.5" ry="1.5" fill="#0e3e18"/><ellipse cx="21.0" cy="80.4" rx="1.6" ry="1.0" fill="#52c44e"/><ellipse cx="-4.5" cy="23.5" rx="3.3" ry="3.0" fill="#0e3e18"/><ellipse cx="-3.4" cy="33.2" rx="2.4" ry="2.3" fill="#3cb440"/><ellipse cx="23.7" cy="59.0" rx="2.0" ry="1.6" fill="#0e3e18"/><ellipse cx="28.4" cy="57.3" rx="3.2" ry="2.3" fill="#28902e"/><ellipse cx="19.6" cy="67.4" rx="2.2" ry="2.0" fill="#2fa036"/><ellipse cx="21.9" cy="59.4" rx="3.2" ry="3.1" fill="#28902e"/><ellipse cx="31.1" cy="70.4" rx="2.8" ry="2.0" fill="#28902e"/><ellipse cx="26.5" cy="65.5" rx="3.5" ry="2.6" fill="#2fa036"/><ellipse cx="6.4" cy="60.6" rx="2.1" ry="1.6" fill="#52c44e"/><ellipse cx="24.8" cy="60.9" rx="1.6" ry="1.3" fill="#0e3e18"/><ellipse cx="32.0" cy="55.2" rx="2.5" ry="1.8" fill="#2fa036"/><ellipse cx="21.7" cy="68.7" rx="3.4" ry="2.4" fill="#114c1c"/><ellipse cx="4.0" cy="24.1" rx="3.2" ry="2.4" fill="#1a6a26"/><ellipse cx="20.3" cy="42.1" rx="2.4" ry="1.8" fill="#28902e"/><ellipse cx="22.5" cy="60.2" rx="3.4" ry="2.8" fill="#52c44e"/><ellipse cx="-2.1" cy="4.8" rx="3.4" ry="3.3" fill="#114c1c"/><ellipse cx="21.9" cy="71.2" rx="3.1" ry="2.2" fill="#28902e"/><ellipse cx="-2.3" cy="7.3" rx="1.6" ry="1.2" fill="#0e3e18"/><ellipse cx="0.7" cy="7.1" rx="2.9" ry="2.3" fill="#0e3e18"/><ellipse cx="32.4" cy="68.0" rx="3.4" ry="2.9" fill="#1a6a26"/><ellipse cx="-1.3" cy="12.5" rx="2.2" ry="2.0" fill="#1a6a26"/><ellipse cx="23.1" cy="75.5" rx="1.7" ry="1.0" fill="#52c44e"/><ellipse cx="22.4" cy="59.7" rx="2.5" ry="2.3" fill="#0e3e18"/><ellipse cx="5.4" cy="77.3" rx="2.8" ry="1.8" fill="#2fa036"/><ellipse cx="10.0" cy="13.8" rx="1.9" ry="1.8" fill="#52c44e"/><ellipse cx="24.8" cy="67.3" rx="1.9" ry="1.5" fill="#28902e"/><ellipse cx="12.7" cy="48.3" rx="3.4" ry="3.2" fill="#1a6a26"/><ellipse cx="26.4" cy="70.3" rx="3.1" ry="2.0" fill="#0e3e18"/><ellipse cx="21.8" cy="67.9" rx="2.1" ry="2.0" fill="#52c44e"/><ellipse cx="-0.3" cy="32.7" rx="2.3" ry="1.4" fill="#114c1c"/><ellipse cx="3.3" cy="21.4" rx="3.4" ry="3.4" fill="#28902e"/><ellipse cx="-5.3" cy="11.4" rx="2.9" ry="2.6" fill="#2fa036"/><ellipse cx="23.9" cy="51.2" rx="2.6" ry="2.4" fill="#3cb440"/><ellipse cx="27.7" cy="63.2" rx="2.0" ry="1.9" fill="#2fa036"/><ellipse cx="19.1" cy="63.6" rx="3.3" ry="2.7" fill="#114c1c"/><ellipse cx="6.1" cy="55.3" rx="2.5" ry="2.2" fill="#3cb440"/><ellipse cx="21.5" cy="63.3" rx="3.3" ry="2.4" fill="#2fa036"/><ellipse cx="9.5" cy="16.9" rx="3.1" ry="2.3" fill="#2fa036"/><ellipse cx="23.5" cy="74.9" rx="1.7" ry="1.6" fill="#3cb440"/><ellipse cx="12.7" cy="51.5" rx="2.8" ry="2.1" fill="#52c44e"/><ellipse cx="3.1" cy="38.9" rx="2.5" ry="2.0" fill="#2fa036"/><ellipse cx="21.3" cy="32.0" rx="1.6" ry="1.0" fill="#2fa036"/><ellipse cx="15.0" cy="46.6" rx="2.5" ry="1.7" fill="#1a6a26"/><ellipse cx="3.9" cy="74.7" rx="2.7" ry="1.9" fill="#1a6a26"/><ellipse cx="0.1" cy="23.7" rx="1.5" ry="1.1" fill="#0e3e18"/><ellipse cx="8.8" cy="51.3" rx="2.4" ry="2.2" fill="#0e3e18"/><ellipse cx="1.8" cy="16.2" rx="3.3" ry="2.5" fill="#2fa036"/><ellipse cx="3.3" cy="6.6" rx="3.4" ry="2.7" fill="#114c1c"/><ellipse cx="13.7" cy="70.3" rx="2.7" ry="2.1" fill="#52c44e"/><ellipse cx="4.0" cy="22.9" rx="2.2" ry="2.0" fill="#28902e"/><ellipse cx="8.4" cy="33.8" rx="3.4" ry="2.9" fill="#0e3e18"/><ellipse cx="26.4" cy="53.8" rx="3.0" ry="2.4" fill="#28902e"/><ellipse cx="22.4" cy="55.3" rx="2.0" ry="1.2" fill="#114c1c"/><ellipse cx="-0.7" cy="43.8" rx="2.3" ry="1.4" fill="#52c44e"/><ellipse cx="17.7" cy="55.7" rx="2.5" ry="2.4" fill="#0e3e18"/><ellipse cx="23.0" cy="67.7" rx="3.5" ry="2.8" fill="#28902e"/><ellipse cx="24.6" cy="73.7" rx="1.7" ry="1.1" fill="#28902e"/><ellipse cx="5.6" cy="12.5" rx="1.7" ry="1.4" fill="#3cb440"/><ellipse cx="-2.8" cy="6.1" rx="2.3" ry="1.9" fill="#1a6a26"/><ellipse cx="-5.3" cy="11.8" rx="2.3" ry="2.2" fill="#3cb440"/><ellipse cx="7.9" cy="0.4" rx="2.3" ry="2.1" fill="#28902e"/><ellipse cx="32.1" cy="59.0" rx="1.8" ry="1.7" fill="#114c1c"/><ellipse cx="18.3" cy="73.3" rx="2.5" ry="2.0" fill="#0e3e18"/><ellipse cx="-4.1" cy="8.5" rx="1.8" ry="1.2" fill="#52c44e"/><ellipse cx="13.4" cy="62.8" rx="3.2" ry="3.1" fill="#28902e"/><ellipse cx="-0.9" cy="0.5" rx="2.7" ry="2.2" fill="#28902e"/><ellipse cx="6.8" cy="11.5" rx="2.0" ry="1.5" fill="#52c44e"/><ellipse cx="4.5" cy="47.4" rx="2.5" ry="1.6" fill="#52c44e"/><ellipse cx="15.6" cy="65.3" rx="2.4" ry="2.3" fill="#52c44e"/><ellipse cx="16.9" cy="60.8" rx="2.9" ry="2.9" fill="#52c44e"/><ellipse cx="25.7" cy="62.1" rx="3.3" ry="2.9" fill="#3cb440"/><ellipse cx="28.7" cy="66.6" rx="2.0" ry="1.8" fill="#3cb440"/><ellipse cx="17.5" cy="78.8" rx="3.2" ry="2.1" fill="#1a6a26"/><ellipse cx="7.7" cy="73.2" rx="3.0" ry="1.9" fill="#2fa036"/><ellipse cx="5.4" cy="8.8" rx="2.2" ry="2.0" fill="#28902e"/><ellipse cx="8.2" cy="20.6" rx="2.4" ry="1.5" fill="#114c1c"/><ellipse cx="14.7" cy="57.5" rx="2.3" ry="1.7" fill="#28902e"/><ellipse cx="8.3" cy="27.3" rx="2.4" ry="2.3" fill="#28902e"/><ellipse cx="-2.0" cy="49.4" rx="2.9" ry="2.6" fill="#1a6a26"/><ellipse cx="-0.8" cy="3.2" rx="3.4" ry="2.4" fill="#52c44e"/><ellipse cx="-0.1" cy="4.5" rx="1.7" ry="1.4" fill="#114c1c"/><ellipse cx="9.2" cy="28.2" rx="2.6" ry="2.3" fill="#3cb440"/><ellipse cx="20.8" cy="60.0" rx="3.3" ry="2.6" fill="#0e3e18"/><ellipse cx="17.8" cy="49.0" rx="2.2" ry="1.9" fill="#0e3e18"/><ellipse cx="-3.8" cy="13.5" rx="2.4" ry="2.2" fill="#1a6a26"/><ellipse cx="32.5" cy="68.6" rx="3.0" ry="2.5" fill="#28902e"/><ellipse cx="0.1" cy="29.6" rx="2.3" ry="1.5" fill="#52c44e"/><ellipse cx="-1.5" cy="19.6" rx="3.0" ry="2.9" fill="#1a6a26"/><ellipse cx="-4.7" cy="26.9" rx="1.6" ry="1.5" fill="#114c1c"/><ellipse cx="19.6" cy="74.0" rx="2.9" ry="2.6" fill="#28902e"/><ellipse cx="31.0" cy="71.0" rx="2.6" ry="2.4" fill="#0e3e18"/><ellipse cx="29.9" cy="71.3" rx="3.2" ry="2.2" fill="#52c44e"/><ellipse cx="26.2" cy="68.8" rx="3.2" ry="3.0" fill="#1a6a26"/><ellipse cx="18.2" cy="36.1" rx="2.3" ry="1.7" fill="#52c44e"/><ellipse cx="29.1" cy="60.0" rx="2.5" ry="2.2" fill="#28902e"/><ellipse cx="8.8" cy="8.0" rx="1.6" ry="1.4" fill="#3cb440"/><ellipse cx="23.5" cy="71.4" rx="2.0" ry="1.6" fill="#3cb440"/><ellipse cx="5.5" cy="40.1" rx="1.9" ry="1.5" fill="#52c44e"/><ellipse cx="27.5" cy="62.6" rx="2.1" ry="2.0" fill="#0e3e18"/><ellipse cx="7.0" cy="55.9" rx="3.3" ry="2.5" fill="#2fa036"/><ellipse cx="0.0" cy="53.2" rx="1.5" ry="1.1" fill="#1a6a26"/><ellipse cx="1.9" cy="11.7" rx="3.2" ry="2.9" fill="#28902e"/><ellipse cx="8.9" cy="27.1" rx="2.2" ry="1.5" fill="#52c44e"/><ellipse cx="19.2" cy="37.8" rx="3.0" ry="2.2" fill="#114c1c"/><ellipse cx="-1.1" cy="70.0" rx="2.9" ry="2.3" fill="#114c1c"/><ellipse cx="178.2" cy="54.2" rx="2.6" ry="1.6" fill="#1a6a26"/><ellipse cx="180.2" cy="66.9" rx="1.8" ry="1.6" fill="#2fa036"/><ellipse cx="183.1" cy="67.6" rx="2.1" ry="1.5" fill="#28902e"/><ellipse cx="189.4" cy="46.0" rx="2.1" ry="1.7" fill="#28902e"/><ellipse cx="188.5" cy="68.0" rx="2.2" ry="1.9" fill="#3cb440"/><ellipse cx="191.4" cy="64.5" rx="2.3" ry="2.2" fill="#2fa036"/><ellipse cx="175.2" cy="73.6" rx="2.7" ry="1.9" fill="#2fa036"/><ellipse cx="185.2" cy="60.5" rx="3.1" ry="2.2" fill="#3cb440"/><ellipse cx="176.8" cy="72.5" rx="2.6" ry="2.5" fill="#1a6a26"/><ellipse cx="189.7" cy="45.4" rx="3.2" ry="2.9" fill="#28902e"/><ellipse cx="174.0" cy="72.4" rx="1.6" ry="1.3" fill="#1a6a26"/><ellipse cx="179.2" cy="73.7" rx="2.2" ry="1.9" fill="#2fa036"/><ellipse cx="196.1" cy="70.6" rx="1.5" ry="0.9" fill="#114c1c"/><ellipse cx="190.7" cy="74.6" rx="2.1" ry="1.5" fill="#28902e"/><ellipse cx="186.7" cy="68.2" rx="1.6" ry="1.4" fill="#1a6a26"/><ellipse cx="183.7" cy="74.3" rx="2.9" ry="2.4" fill="#2fa036"/><ellipse cx="173.1" cy="70.4" rx="2.2" ry="2.1" fill="#52c44e"/><ellipse cx="183.1" cy="66.9" rx="3.1" ry="2.8" fill="#1a6a26"/><ellipse cx="180.9" cy="79.0" rx="2.3" ry="2.2" fill="#1a6a26"/><ellipse cx="181.6" cy="71.5" rx="1.8" ry="1.7" fill="#2fa036"/><ellipse cx="187.6" cy="37.5" rx="1.7" ry="1.4" fill="#3cb440"/><ellipse cx="196.4" cy="41.9" rx="2.3" ry="1.9" fill="#52c44e"/><ellipse cx="183.5" cy="72.0" rx="2.8" ry="2.1" fill="#2fa036"/><ellipse cx="181.8" cy="73.5" rx="2.6" ry="2.3" fill="#3cb440"/><ellipse cx="191.9" cy="54.3" rx="3.2" ry="2.2" fill="#2fa036"/><ellipse cx="189.0" cy="76.4" rx="2.2" ry="1.6" fill="#114c1c"/><ellipse cx="176.2" cy="62.0" rx="1.6" ry="1.3" fill="#2fa036"/><ellipse cx="191.1" cy="80.4" rx="1.6" ry="1.3" fill="#28902e"/><ellipse cx="179.3" cy="41.0" rx="3.0" ry="2.3" fill="#1a6a26"/><ellipse cx="180.8" cy="67.7" rx="3.1" ry="2.9" fill="#28902e"/><ellipse cx="187.9" cy="59.5" rx="2.0" ry="1.3" fill="#52c44e"/><ellipse cx="182.5" cy="78.5" rx="3.1" ry="2.7" fill="#52c44e"/><ellipse cx="180.4" cy="70.0" rx="2.4" ry="1.8" fill="#3cb440"/><ellipse cx="182.3" cy="72.1" rx="1.6" ry="1.2" fill="#3cb440"/><ellipse cx="185.1" cy="34.9" rx="3.2" ry="2.5" fill="#114c1c"/><ellipse cx="177.6" cy="74.6" rx="2.6" ry="2.0" fill="#28902e"/><ellipse cx="174.0" cy="73.2" rx="1.6" ry="1.1" fill="#2fa036"/><ellipse cx="192.3" cy="59.7" rx="2.4" ry="2.0" fill="#2fa036"/><ellipse cx="189.2" cy="68.7" rx="2.3" ry="1.7" fill="#2fa036"/><ellipse cx="186.8" cy="44.6" rx="1.7" ry="1.6" fill="#1a6a26"/><ellipse cx="182.8" cy="73.5" rx="2.8" ry="2.0" fill="#52c44e"/><ellipse cx="187.4" cy="71.0" rx="2.1" ry="1.6" fill="#3cb440"/><ellipse cx="172.1" cy="73.3" rx="1.9" ry="1.3" fill="#1a6a26"/><ellipse cx="176.6" cy="75.4" rx="2.9" ry="2.0" fill="#52c44e"/><ellipse cx="198.1" cy="59.8" rx="1.8" ry="1.2" fill="#2fa036"/><ellipse cx="200.9" cy="58.3" rx="2.8" ry="2.8" fill="#1a6a26"/><ellipse cx="181.5" cy="71.8" rx="1.8" ry="1.3" fill="#2fa036"/><ellipse cx="183.2" cy="66.7" rx="2.9" ry="2.1" fill="#28902e"/><ellipse cx="182.3" cy="42.4" rx="2.7" ry="1.7" fill="#1a6a26"/><ellipse cx="187.8" cy="73.9" rx="1.8" ry="1.2" fill="#114c1c"/><ellipse cx="186.5" cy="35.1" rx="2.2" ry="1.8" fill="#1a6a26"/><ellipse cx="181.7" cy="72.2" rx="2.3" ry="2.2" fill="#2fa036"/><ellipse cx="173.6" cy="73.3" rx="3.1" ry="2.5" fill="#114c1c"/><ellipse cx="176.7" cy="71.6" rx="1.8" ry="1.2" fill="#52c44e"/><ellipse cx="180.0" cy="66.1" rx="2.3" ry="1.8" fill="#1a6a26"/><ellipse cx="182.4" cy="53.6" rx="1.6" ry="1.5" fill="#28902e"/><ellipse cx="185.7" cy="69.4" rx="1.6" ry="1.3" fill="#114c1c"/><ellipse cx="179.6" cy="59.0" rx="2.7" ry="1.7" fill="#1a6a26"/><ellipse cx="180.1" cy="71.0" rx="3.0" ry="2.4" fill="#52c44e"/><ellipse cx="183.0" cy="70.4" rx="2.2" ry="1.6" fill="#28902e"/><ellipse cx="180.3" cy="73.5" rx="2.0" ry="1.5" fill="#114c1c"/><ellipse cx="185.0" cy="73.1" rx="2.2" ry="1.8" fill="#2fa036"/><ellipse cx="186.1" cy="37.2" rx="1.7" ry="1.6" fill="#52c44e"/><ellipse cx="199.9" cy="49.2" rx="2.7" ry="1.9" fill="#28902e"/><ellipse cx="175.8" cy="73.0" rx="2.5" ry="1.7" fill="#3cb440"/><ellipse cx="195.2" cy="76.7" rx="1.8" ry="1.6" fill="#28902e"/><ellipse cx="189.0" cy="62.6" rx="2.8" ry="2.0" fill="#3cb440"/><ellipse cx="189.2" cy="54.1" rx="3.1" ry="2.1" fill="#114c1c"/><ellipse cx="181.5" cy="62.3" rx="1.5" ry="1.0" fill="#2fa036"/><ellipse cx="184.6" cy="72.9" rx="3.1" ry="2.0" fill="#114c1c"/><ellipse cx="68.5" cy="75.1" rx="1.4" ry="1.0" fill="#28902e"/><ellipse cx="42.5" cy="74.7" rx="1.3" ry="1.1" fill="#1a6a26"/><ellipse cx="42.5" cy="75.1" rx="1.8" ry="1.4" fill="#28902e"/><ellipse cx="43.6" cy="77.3" rx="2.4" ry="2.1" fill="#3cb440"/><ellipse cx="51.2" cy="74.1" rx="1.5" ry="1.1" fill="#3cb440"/><ellipse cx="67.8" cy="77.8" rx="1.3" ry="1.2" fill="#114c1c"/><ellipse cx="122.4" cy="68.2" rx="1.4" ry="1.4" fill="#28902e"/><ellipse cx="42.7" cy="75.3" rx="1.3" ry="1.1" fill="#114c1c"/><ellipse cx="49.3" cy="79.1" rx="1.7" ry="1.4" fill="#114c1c"/><ellipse cx="43.5" cy="73.7" rx="2.3" ry="2.2" fill="#1a6a26"/><ellipse cx="45.9" cy="80.8" rx="1.6" ry="1.3" fill="#2fa036"/><ellipse cx="62.4" cy="72.1" rx="2.1" ry="1.6" fill="#1a6a26"/><ellipse cx="43.7" cy="77.0" rx="1.9" ry="1.9" fill="#3cb440"/><ellipse cx="111.1" cy="76.0" rx="1.8" ry="1.7" fill="#114c1c"/><ellipse cx="51.3" cy="77.7" rx="1.7" ry="1.3" fill="#2fa036"/><ellipse cx="68.9" cy="76.2" rx="1.4" ry="1.2" fill="#28902e"/><ellipse cx="50.0" cy="76.2" rx="1.7" ry="1.3" fill="#28902e"/><ellipse cx="122.7" cy="68.1" rx="1.5" ry="0.9" fill="#1a6a26"/><ellipse cx="129.4" cy="72.2" rx="1.6" ry="1.1" fill="#1a6a26"/><ellipse cx="114.9" cy="67.7" rx="1.9" ry="1.8" fill="#1a6a26"/><ellipse cx="56.1" cy="76.5" rx="1.4" ry="0.9" fill="#28902e"/><ellipse cx="66.7" cy="73.3" rx="1.5" ry="1.2" fill="#3cb440"/><ellipse cx="116.5" cy="73.8" rx="1.7" ry="1.6" fill="#28902e"/><ellipse cx="59.7" cy="75.3" rx="1.5" ry="1.2" fill="#28902e"/><ellipse cx="45.6" cy="76.6" rx="2.6" ry="1.6" fill="#2fa036"/><ellipse cx="47.4" cy="76.2" rx="1.9" ry="1.6" fill="#28902e"/><ellipse cx="130.5" cy="64.9" rx="1.8" ry="1.2" fill="#114c1c"/><ellipse cx="47.9" cy="79.0" rx="1.3" ry="0.8" fill="#114c1c"/><ellipse cx="60.7" cy="74.3" rx="1.5" ry="1.4" fill="#28902e"/><ellipse cx="108.9" cy="81.8" rx="2.1" ry="1.5" fill="#114c1c"/><ellipse cx="44.9" cy="79.2" rx="2.0" ry="1.7" fill="#1a6a26"/><ellipse cx="45.2" cy="80.3" rx="2.0" ry="1.4" fill="#114c1c"/><ellipse cx="124.8" cy="60.9" rx="2.1" ry="2.0" fill="#28902e"/><ellipse cx="64.2" cy="76.5" rx="1.8" ry="1.4" fill="#114c1c"/><ellipse cx="59.9" cy="79.0" rx="1.7" ry="1.2" fill="#3cb440"/><ellipse cx="127.7" cy="76.0" rx="1.5" ry="1.1" fill="#1a6a26"/><ellipse cx="51.6" cy="77.6" rx="2.2" ry="1.5" fill="#3cb440"/><ellipse cx="111.0" cy="78.2" rx="1.9" ry="1.3" fill="#3cb440"/><ellipse cx="45.4" cy="74.7" rx="2.3" ry="1.9" fill="#28902e"/><ellipse cx="106.8" cy="73.3" rx="1.8" ry="1.1" fill="#2fa036"/><ellipse cx="106.2" cy="76.3" rx="1.6" ry="1.4" fill="#28902e"/><ellipse cx="58.1" cy="77.3" rx="1.9" ry="1.9" fill="#28902e"/><ellipse cx="110.1" cy="74.0" rx="1.8" ry="1.5" fill="#3cb440"/><ellipse cx="124.1" cy="73.1" rx="1.6" ry="1.1" fill="#114c1c"/><ellipse cx="109.3" cy="76.9" rx="1.7" ry="1.4" fill="#3cb440"/><ellipse cx="43.4" cy="73.9" rx="1.6" ry="1.6" fill="#1a6a26"/><ellipse cx="49.9" cy="74.5" rx="2.0" ry="1.5" fill="#1a6a26"/><ellipse cx="44.7" cy="75.0" rx="2.2" ry="2.0" fill="#114c1c"/><ellipse cx="124.7" cy="73.6" rx="2.5" ry="1.7" fill="#28902e"/><ellipse cx="105.3" cy="77.2" rx="2.0" ry="1.3" fill="#1a6a26"/><ellipse cx="118.5" cy="64.8" rx="1.4" ry="0.9" fill="#3cb440"/><ellipse cx="137.7" cy="65.7" rx="1.9" ry="1.4" fill="#28902e"/><ellipse cx="109.5" cy="79.3" rx="2.5" ry="1.7" fill="#2fa036"/><ellipse cx="118.5" cy="71.0" rx="1.6" ry="1.1" fill="#3cb440"/><ellipse cx="60.8" cy="72.8" rx="1.6" ry="1.4" fill="#1a6a26"/><ellipse cx="135.9" cy="74.9" rx="2.3" ry="2.2" fill="#3cb440"/><ellipse cx="49.8" cy="75.5" rx="2.3" ry="1.4" fill="#3cb440"/><ellipse cx="109.6" cy="80.2" rx="1.7" ry="1.5" fill="#28902e"/><ellipse cx="113.2" cy="75.5" rx="1.6" ry="1.3" fill="#1a6a26"/><ellipse cx="110.5" cy="76.9" rx="1.8" ry="1.2" fill="#2fa036"/><ellipse cx="31.7" cy="59.8" rx="2.0" ry="1.4" fill="#e8d8e8"/><ellipse cx="168.8" cy="67.4" rx="2.2" ry="1.7" fill="#f0e4f0"/><ellipse cx="170.8" cy="69.4" rx="1.8" ry="1.3" fill="#d8c4d8"/><ellipse cx="33.7" cy="55.0" rx="1.2" ry="1.0" fill="#f0e4f0"/><ellipse cx="166.7" cy="57.5" rx="1.8" ry="1.3" fill="#c8b0c8"/><ellipse cx="42.9" cy="62.6" rx="1.5" ry="0.9" fill="#f0e4f0"/><ellipse cx="170.0" cy="59.3" rx="1.1" ry="0.8" fill="#d8c4d8"/><ellipse cx="173.1" cy="61.0" rx="1.8" ry="1.4" fill="#c8b0c8"/><ellipse cx="36.2" cy="63.0" rx="1.5" ry="1.1" fill="#f0e4f0"/><ellipse cx="33.2" cy="58.4" rx="1.3" ry="1.0" fill="#f0e4f0"/><ellipse cx="168.7" cy="70.0" rx="1.6" ry="1.4" fill="#c8b0c8"/><ellipse cx="33.8" cy="59.3" rx="1.4" ry="0.9" fill="#f0e4f0"/><ellipse cx="165.9" cy="64.0" rx="2.1" ry="1.6" fill="#d8c4d8"/><ellipse cx="36.3" cy="65.1" rx="1.3" ry="0.8" fill="#e8d8e8"/><ellipse cx="173.3" cy="67.3" rx="1.9" ry="1.1" fill="#c8b0c8"/><ellipse cx="37.6" cy="60.1" rx="1.9" ry="1.8" fill="#c8b0c8"/><ellipse cx="36.0" cy="63.4" rx="2.0" ry="1.4" fill="#c8b0c8"/><ellipse cx="169.2" cy="59.3" rx="1.7" ry="1.7" fill="#c8b0c8"/><ellipse cx="42.1" cy="64.1" rx="1.3" ry="1.2" fill="#d8c4d8"/><ellipse cx="36.7" cy="58.4" rx="1.8" ry="1.4" fill="#f0e4f0"/><ellipse cx="165.2" cy="56.3" rx="1.5" ry="1.2" fill="#e8d8e8"/><ellipse cx="164.5" cy="66.1" rx="2.1" ry="1.5" fill="#e8d8e8"/><ellipse cx="169.3" cy="56.4" rx="1.2" ry="1.1" fill="#f0e4f0"/><ellipse cx="172.3" cy="62.3" rx="1.2" ry="1.0" fill="#e8d8e8"/><ellipse cx="39.4" cy="60.0" rx="1.5" ry="1.0" fill="#c8b0c8"/><ellipse cx="34.5" cy="54.1" rx="1.5" ry="1.5" fill="#c8b0c8"/><ellipse cx="163.8" cy="69.7" rx="1.4" ry="1.1" fill="#c8b0c8"/><ellipse cx="167.6" cy="68.2" rx="1.3" ry="1.2" fill="#d8c4d8"/><ellipse cx="34.5" cy="55.0" rx="1.1" ry="0.9" fill="#c8b0c8"/><ellipse cx="163.1" cy="63.9" rx="1.7" ry="1.3" fill="#c8b0c8"/><ellipse cx="40.5" cy="58.3" rx="2.1" ry="2.1" fill="#f0e4f0"/><ellipse cx="34.3" cy="63.3" rx="1.1" ry="1.0" fill="#f0e4f0"/><ellipse cx="165.8" cy="63.0" rx="1.5" ry="1.0" fill="#d8c4d8"/><ellipse cx="162.9" cy="64.1" rx="1.6" ry="1.1" fill="#f0e4f0"/><ellipse cx="34.8" cy="57.6" rx="1.7" ry="1.6" fill="#d8c4d8"/><ellipse cx="168.9" cy="67.9" rx="1.5" ry="1.4" fill="#d8c4d8"/><ellipse cx="168.8" cy="72.5" rx="1.4" ry="1.3" fill="#e8d8e8"/><ellipse cx="34.2" cy="58.3" rx="1.6" ry="1.5" fill="#e8d8e8"/><ellipse cx="43.2" cy="57.4" rx="2.0" ry="1.8" fill="#f0e4f0"/><ellipse cx="168.7" cy="67.4" rx="2.2" ry="2.1" fill="#d8c4d8"/></g>
<!-- conifers -->
<g fill="#12702a"><polygon points="101,103 105,84 109,103"/><polygon points="105,103 110,80 115,103"/><polygon points="111,103 117,76 124,103"/><polygon points="96,103 99,86 103,103"/></g>
<g fill="#38a844"><polygon points="112,103 117,78 119,103"/><polygon points="106,103 110,82 112,103"/></g>
<g fill="#14752c"><polygon points="156,92 161,73 166,92"/><polygon points="164,96 169,80 174,96"/><polygon points="171,98 176,82 181,98"/><polygon points="179,100 185,78 191,100"/><polygon points="188,103 194,80 200,103"/></g>
<g fill="#3cae48"><polygon points="158,92 161,75 163,92"/><polygon points="181,100 185,80 187,100"/></g>
<!-- flowers -->
<ellipse cx="172" cy="99" rx="20" ry="5" fill="#b8508c"/>
<ellipse cx="166" cy="97" rx="10" ry="3" fill="#e080b8"/>
<ellipse cx="72" cy="99" rx="7" ry="5" fill="#a8507c"/>
<ellipse cx="72" cy="101" rx="9" ry="3" fill="#2a7a30"/>
<!-- fountains -->
<g fill="#e8ecfa"><rect x="4" y="84" width="2" height="15"/><rect x="18" y="85" width="2" height="13"/><rect x="30" y="84" width="2" height="13"/></g>
<!-- people -->
<rect x="25" y="80" width="3.500" height="6" fill="#f0e0d8"/><rect x="25.500" y="86" width="2.500" height="6" fill="#3a2a28"/><circle cx="26.700" cy="79" r="1.300" fill="#5a3020"/>
<rect x="136" y="80" width="5" height="10" fill="#7a4a48"/><rect x="136.500" y="90" width="4" height="8" fill="#c08a88"/><circle cx="138.500" cy="79" r="1.700" fill="#2a1a18"/>
<rect x="143" y="88" width="3.500" height="5" fill="#f4f0ec"/><rect x="143.500" y="93" width="2.500" height="4" fill="#c8a8a0"/><circle cx="144.700" cy="87" r="1.300" fill="#e8d0b0"/>
<circle cx="118.500" cy="71.500" r="1.800" fill="#fff0a0"/><circle cx="188" cy="71.500" r="2" fill="#fff0a0"/><circle cx="50" cy="74" r="1.300" fill="#fff0a0"/>
</g>
</g>
</svg>

<svg id="p2" viewBox="0 0 197 233" style="left:672px;top:293px;width:197px;height:233px;overflow:hidden">
<defs>
<linearGradient id="p2sky" x1="0" y1="0" x2="1" y2="0"><stop offset="0" stop-color="#4a8cdc"/><stop offset=".45" stop-color="#78aee8"/><stop offset="1" stop-color="#c4dcf4"/></linearGradient>
<linearGradient id="p2sk2" x1="0" y1="0" x2="0" y2="1"><stop offset="0" stop-color="#fff" stop-opacity=".1"/><stop offset=".55" stop-color="#fff" stop-opacity="0"/><stop offset="1" stop-color="#fff" stop-opacity=".55"/></linearGradient>
<linearGradient id="p2bl" x1="0" y1="0" x2="1" y2="0"><stop offset="0" stop-color="#8c3c20"/><stop offset="1" stop-color="#722e18"/></linearGradient>
<linearGradient id="p2br" x1="0" y1="0" x2="0" y2="1"><stop offset="0" stop-color="#a85a30"/><stop offset=".6" stop-color="#b46a32"/><stop offset="1" stop-color="#7c4224"/></linearGradient>
<filter id="p2b" x="-5%" y="-5%" width="110%" height="110%"><feGaussianBlur stdDeviation="0.6"/></filter>
<filter id="p2b2" x="-20%" y="-20%" width="140%" height="140%"><feGaussianBlur stdDeviation="3"/></filter>
<filter id="p2b3" x="-20%" y="-20%" width="140%" height="140%"><feGaussianBlur stdDeviation="1.4"/></filter>
<clipPath id="p2c"><rect width="197" height="233"/></clipPath>
</defs>
<g clip-path="url(#p2c)">
<rect width="197" height="210" fill="url(#p2sky)"/>
<rect width="197" height="210" fill="url(#p2sk2)"/>
<!-- clouds -->
<g filter="url(#p2b2)" fill="#fff">
<ellipse cx="135" cy="22" rx="50" ry="22" opacity=".8"/>
<ellipse cx="170" cy="8" rx="40" ry="14" opacity=".9"/>
<ellipse cx="60" cy="50" rx="16" ry="8" opacity=".45"/>
<ellipse cx="30" cy="105" rx="24" ry="9" opacity=".45"/>
<ellipse cx="20" cy="155" rx="26" ry="14" opacity=".7"/>
<ellipse cx="175" cy="120" rx="25" ry="40" opacity=".6"/>
</g>
<g filter="url(#p2b)">
<!-- white towers behind -->
<rect x="46" y="130" width="13" height="50" fill="#c4cad8"/>
<rect x="50" y="134" width="3" height="44" fill="#9aa2b4"/>
<rect x="147" y="126" width="14" height="44" fill="#ece4dc"/>
<rect x="163" y="135" width="15" height="36" fill="#e4dcd4"/>
<g fill="#c4b4a8"><rect x="152" y="130" width="4" height="38"/><rect x="168" y="138" width="3" height="30"/></g>
<!-- right brick houses -->
<polygon points="148,168 158,162 175,168 175,202 148,202" fill="#8e5a48"/>
<polygon points="163,160 172,158 172,166 163,166" fill="#9a6048"/>
<g fill="#d8d0c8"><rect x="152" y="171" width="2.500" height="4"/><rect x="158" y="171" width="2.500" height="4"/><rect x="164" y="171" width="2.500" height="4"/><rect x="152" y="180" width="2.500" height="4"/><rect x="164" y="180" width="2.500" height="4"/></g>
<rect x="175" y="163" width="8" height="38" fill="#a8a8ac"/>
<rect x="182" y="170" width="15" height="32" fill="#4a4648"/>
<rect x="190" y="164" width="7" height="8" fill="#8a8a90"/>
<!-- main building left face -->
<polygon points="55.500,71 95,50.500 95,206 58,206 58,80" fill="url(#p2bl)"/>
<!-- right face -->
<polygon points="88,56 95,50.500 148,83 148,206 88,206" fill="url(#p2br)"/>
<polygon points="78,64 88,58 88,206 78,206" fill="#6a2c18"/>
<!-- penthouse -->
<polygon points="108,56 118,53 132,62 132,70 108,58" fill="#7a3c24"/>
<polygon points="118,58 131,65 131,69 118,62" fill="#c8c8cc"/>
<!-- top terrace -->
<polygon points="80,63 95,57 106,63 106,74 80,74" fill="#c8b8a0"/>
<polygon points="81,66 100,62 100,72 81,72" fill="#5a6a30"/>
<!-- roof band -->
<path d="M55 70 L93 50.500 Q95.500 49.500 98 51 L148.500 82 V86 L96 55 L55.500 75 Z" fill="#a85a38"/>
<!-- floor bands (left face) -->
<g stroke="#5a2412" stroke-width="1.600" fill="none">
<path d="M55 88 L78 79 L88 76"/><path d="M55 102 L78 94 L88 91"/><path d="M55 116.500 L78 109 L88 106"/><path d="M55 131 L78 124 L88 121"/><path d="M55 145 L78 139 L88 136"/><path d="M55 160 L78 154 L88 151"/><path d="M55 174 L78 174"/>
</g>
<!-- floor bands right face -->
<g stroke="#5a2a18" stroke-width="1.500" fill="none">
<path d="M88 74 L148 97"/><path d="M88 88 L148 109"/><path d="M88 102 L148 121"/><path d="M88 116.500 L148 133"/><path d="M88 131 L148 144"/><path d="M88 145 L148 155"/><path d="M88 160 L148 166"/>
</g>
<!-- windows right face -->
<g fill="#bcc6d8">
<rect x="90" y="75" width="6" height="10"/><rect x="90" y="89" width="6" height="10"/><rect x="90" y="103.500" width="6" height="10"/><rect x="90" y="118" width="6" height="10"/><rect x="90" y="132" width="6" height="10"/><rect x="90" y="146.500" width="6" height="11"/><rect x="90" y="161" width="6" height="11"/>
<rect x="100" y="78" width="3.500" height="9"/><rect x="100" y="92" width="3.500" height="9"/><rect x="100" y="106" width="3.500" height="9"/><rect x="100" y="120" width="3.500" height="9"/><rect x="100" y="134" width="3.500" height="9"/><rect x="100" y="148" width="3.500" height="10"/><rect x="100" y="162" width="3.500" height="10"/>
<rect x="107" y="82" width="4" height="8"/><rect x="107" y="95" width="4" height="9"/><rect x="107" y="109" width="4" height="9"/><rect x="107" y="123" width="4" height="9"/><rect x="107" y="137" width="4" height="9"/><rect x="107" y="150" width="4" height="9"/><rect x="107" y="163" width="4" height="9"/>
</g>
<g fill="#9aa4b8">
<rect x="130" y="94" width="3" height="8"/><rect x="130" y="107" width="3" height="8"/><rect x="130" y="120" width="3" height="8"/><rect x="130" y="132" width="3" height="8"/><rect x="130" y="144" width="3" height="8"/><rect x="130" y="156" width="3" height="8"/>
<rect x="136" y="97" width="3" height="8"/><rect x="136" y="110" width="3" height="8"/><rect x="136" y="122" width="3" height="8"/><rect x="136" y="134" width="3" height="8"/><rect x="136" y="146" width="3" height="8"/><rect x="136" y="157" width="3" height="8"/>
</g>
<!-- dark recessed strip -->
<polygon points="117,82 123,85 123,172 117,172" fill="#3a2418"/>
<!-- lit panels -->
<g fill="#d48c38"><rect x="112.500" y="100" width="4" height="72" opacity=".8"/><rect x="124.500" y="100" width="4.500" height="66" opacity=".9"/><rect x="140" y="112" width="3" height="50" opacity=".8"/><rect x="97" y="128" width="2.500" height="44" opacity=".8"/></g>
<!-- canopy -->
<polygon points="56,175 95,173 148,176 148,179 95,177 56,179" fill="#33302e"/>
<!-- ground floor -->
<polygon points="58,179 148,179 148,206 58,206" fill="#7a3c20"/>
<rect x="60" y="190" width="16" height="16" fill="#8a4420"/>
<rect x="90" y="180" width="12" height="12" fill="#a8a8a4"/>
<rect x="90" y="196" width="8" height="10" fill="#b4aca0"/>
<rect x="118" y="180" width="6" height="24" fill="#3a2a24"/>
<rect x="103" y="184" width="30" height="6" fill="#8a5030"/>
<!-- left scenery -->
<ellipse cx="2" cy="176" rx="7" ry="10" fill="#2a6a34"/>
<ellipse cx="22" cy="170" rx="9" ry="7" fill="#2c6c38"/>
<ellipse cx="38" cy="172" rx="11" ry="11" fill="#286a30"/>
<ellipse cx="12" cy="168" rx="6" ry="4" fill="#3a5a38"/>
<polygon points="8,175 25,173 27,180 8,181" fill="#7a6860"/>
<rect x="9" y="180" width="16" height="8" fill="#c8c0b4"/>
<rect x="0" y="188" width="40" height="17" fill="#a8a08c"/>
<rect x="8" y="190" width="10" height="13" fill="#5a5a48"/>
<rect x="0" y="184" width="76" height="3.500" fill="#c8782c"/>
<ellipse cx="30" cy="185" rx="10" ry="3" fill="#7a9a30"/>
<ellipse cx="70" cy="189" rx="7" ry="2.500" fill="#9aa830"/>
<rect x="36" y="186" width="1.500" height="18" fill="#6a5a40"/><rect x="44" y="186" width="1.500" height="18" fill="#6a5a40"/>
<ellipse cx="54" cy="186" rx="6" ry="10" fill="#4a8a34"/>
<ellipse cx="52" cy="172" rx="3" ry="8" fill="#3a7a30"/>
<ellipse cx="84" cy="191" rx="6" ry="8" fill="#5a9030"/>
<ellipse cx="102" cy="192" rx="5" ry="8" fill="#4a7a30"/>
<ellipse cx="126" cy="190" rx="5" ry="6" fill="#3a6a2c"/>
<ellipse cx="138" cy="192" rx="4" ry="7" fill="#3a6a2c"/>
<ellipse cx="155" cy="188" rx="8" ry="8" fill="#5a7a3c"/>
<ellipse cx="172" cy="192" rx="7" ry="6" fill="#6a8444"/>
<!-- sidewalk & street -->
<rect x="0" y="204" width="197" height="6" fill="#a89c8c"/>
<polygon points="0,209 197,209 197,233 0,233" fill="#34303a"/>
<polygon points="0,209 110,208 110,211 0,214" fill="#8a8078"/>
<polygon points="0,217 20,216 45,226 40,233 0,233" fill="#2a2834"/>
<polygon points="120,212 197,220 197,233 110,226" fill="#4a3838"/>
<polygon points="0,214 110,211 125,216 0,222" fill="#4a444c"/>
<!-- crosswalk -->
<g fill="#b8b4bc"><polygon points="50,229 66,229 70,233 52,233"/><polygon points="76,228 92,228 98,233 80,233"/><polygon points="104,228 120,227 128,233 110,233"/><polygon points="132,228 148,228 158,233 140,233"/><polygon points="162,229 178,230 190,233 170,233"/></g>
<!-- cars -->
<rect x="109" y="200" width="10" height="6" rx="2" fill="#6a6a70"/><rect x="120" y="200" width="8" height="6" rx="2" fill="#8a8a90"/><rect x="160" y="198" width="12" height="6" rx="2" fill="#c0c0c4"/>
<!-- hedge -->
<path d="M128 206 Q133 203 140 206 L160 210 L197 214 V224 L160 220 L130 212 Z" fill="#3c5c28"/>
<polygon points="150,214 197,220 197,226 150,218" fill="#5a8a30"/>
<!-- lamp posts -->
<rect x="115.500" y="158" width="1" height="52" fill="#5a5a5a"/><rect x="104.500" y="182" width="1" height="26" fill="#6a6a6a"/><rect x="157" y="180" width="0.800" height="26" fill="#7a7a7a"/>
<!-- right tree trunk -->
<path d="M186 116 L188 150 L187 190 L185 212 L181 212 L183 190 L185 150 L183 116 Z" fill="#6a6450"/>
<path d="M184 130 L172 118 L170 119 L184 134 Z" fill="#6a6450"/>
<!-- people -->
<ellipse cx="24.500" cy="191" rx="3" ry="3" fill="#3a2428"/>
<path d="M21 192 Q20 200 20.500 204 L23 204 L24 193 Z" fill="#3a2428"/>
<path d="M23 194 Q30 193 31 198 L33 212 Q33 216 30 217 L22 218 Q20 217 21 212 Z" fill="#ecd4dc"/>
<path d="M24 217 L30 217 L27 232 L23 232 L26 222 Z" fill="#1c1a20"/>
<rect x="141" y="199" width="4.500" height="9" fill="#5a6a9a"/><rect x="141.500" y="208" width="3.500" height="10" fill="#4a6aa8"/><circle cx="143" cy="197.500" r="1.700" fill="#4a3028"/>
<rect x="147" y="205" width="4" height="7" fill="#e88a9a"/><rect x="147.500" y="212" width="3" height="8" fill="#2a2a30"/><circle cx="149" cy="203.500" r="1.500" fill="#3a2820"/>
</g>
<!-- dark tree top-left -->
<g filter="url(#p2b)">
<g opacity=".96"><ellipse cx="11.4" cy="26.8" rx="1.7" ry="1.1" fill="#1e2a0c"/><ellipse cx="61.3" cy="26.0" rx="1.7" ry="1.3" fill="#3e4e16"/><ellipse cx="25.9" cy="62.6" rx="3.3" ry="3.2" fill="#26340e"/><ellipse cx="62.1" cy="22.0" rx="2.4" ry="1.5" fill="#2e3c12"/><ellipse cx="37.4" cy="41.2" rx="1.8" ry="1.5" fill="#34451a"/><ellipse cx="56.9" cy="42.4" rx="2.0" ry="1.6" fill="#26340e"/><ellipse cx="52.6" cy="6.6" rx="2.6" ry="2.0" fill="#1e2a0c"/><ellipse cx="-2.4" cy="33.3" rx="2.3" ry="2.1" fill="#2e3c12"/><ellipse cx="24.6" cy="61.5" rx="2.6" ry="2.3" fill="#34451a"/><ellipse cx="33.3" cy="64.5" rx="2.6" ry="2.4" fill="#2e3c12"/><ellipse cx="56.6" cy="32.3" rx="3.5" ry="3.2" fill="#26340e"/><ellipse cx="55.1" cy="17.0" rx="2.3" ry="1.9" fill="#34451a"/><ellipse cx="53.1" cy="22.0" rx="1.8" ry="1.4" fill="#34451a"/><ellipse cx="88.7" cy="13.4" rx="2.9" ry="2.1" fill="#3e4e16"/><ellipse cx="88.0" cy="19.7" rx="3.5" ry="2.3" fill="#34451a"/><ellipse cx="58.8" cy="10.2" rx="2.2" ry="1.7" fill="#2e3c12"/><ellipse cx="19.3" cy="79.6" rx="2.7" ry="2.5" fill="#2e3c12"/><ellipse cx="58.9" cy="45.8" rx="2.3" ry="2.3" fill="#3e4e16"/><ellipse cx="49.4" cy="38.7" rx="2.9" ry="2.3" fill="#26340e"/><ellipse cx="55.1" cy="27.9" rx="1.9" ry="1.4" fill="#1e2a0c"/><ellipse cx="49.9" cy="26.6" rx="3.3" ry="2.9" fill="#1e2a0c"/><ellipse cx="-0.8" cy="15.8" rx="3.5" ry="2.7" fill="#1e2a0c"/><ellipse cx="79.1" cy="24.6" rx="2.4" ry="1.5" fill="#2e3c12"/><ellipse cx="10.4" cy="59.6" rx="2.8" ry="1.7" fill="#26340e"/><ellipse cx="13.4" cy="32.9" rx="2.8" ry="2.7" fill="#26340e"/><ellipse cx="44.1" cy="28.5" rx="3.5" ry="2.6" fill="#1e2a0c"/><ellipse cx="82.6" cy="15.1" rx="3.6" ry="2.8" fill="#3e4e16"/><ellipse cx="82.8" cy="17.5" rx="3.1" ry="2.9" fill="#3e4e16"/><ellipse cx="27.4" cy="35.4" rx="3.5" ry="2.3" fill="#34451a"/><ellipse cx="67.5" cy="39.3" rx="2.2" ry="1.9" fill="#26340e"/><ellipse cx="23.7" cy="65.0" rx="2.3" ry="1.9" fill="#2e3c12"/><ellipse cx="57.7" cy="44.5" rx="3.2" ry="3.0" fill="#2e3c12"/><ellipse cx="83.7" cy="19.1" rx="2.6" ry="2.4" fill="#34451a"/><ellipse cx="33.5" cy="2.0" rx="2.0" ry="2.0" fill="#1e2a0c"/><ellipse cx="16.8" cy="74.0" rx="2.3" ry="1.5" fill="#34451a"/><ellipse cx="71.5" cy="14.8" rx="2.0" ry="2.0" fill="#1e2a0c"/><ellipse cx="57.2" cy="19.3" rx="2.9" ry="2.7" fill="#26340e"/><ellipse cx="87.9" cy="4.8" rx="3.1" ry="3.0" fill="#3e4e16"/><ellipse cx="85.3" cy="18.6" rx="3.2" ry="2.5" fill="#3e4e16"/><ellipse cx="68.4" cy="5.5" rx="1.9" ry="1.6" fill="#2e3c12"/><ellipse cx="15.2" cy="76.2" rx="3.3" ry="2.8" fill="#3e4e16"/><ellipse cx="9.7" cy="39.8" rx="1.6" ry="1.3" fill="#26340e"/><ellipse cx="16.1" cy="41.3" rx="3.3" ry="2.0" fill="#2e3c12"/><ellipse cx="13.6" cy="64.1" rx="2.8" ry="2.3" fill="#34451a"/><ellipse cx="62.3" cy="40.5" rx="3.4" ry="3.1" fill="#1e2a0c"/><ellipse cx="51.6" cy="44.7" rx="2.6" ry="1.7" fill="#1e2a0c"/><ellipse cx="66.6" cy="42.5" rx="2.0" ry="1.8" fill="#26340e"/><ellipse cx="49.0" cy="44.5" rx="3.1" ry="1.9" fill="#1e2a0c"/><ellipse cx="53.2" cy="41.2" rx="3.2" ry="2.0" fill="#1e2a0c"/><ellipse cx="13.3" cy="69.3" rx="2.6" ry="1.6" fill="#1e2a0c"/><ellipse cx="52.4" cy="13.0" rx="2.6" ry="1.8" fill="#1e2a0c"/><ellipse cx="26.9" cy="67.9" rx="2.6" ry="2.2" fill="#2e3c12"/><ellipse cx="46.9" cy="62.0" rx="2.0" ry="1.3" fill="#3e4e16"/><ellipse cx="59.5" cy="13.9" rx="2.9" ry="1.9" fill="#3e4e16"/><ellipse cx="38.6" cy="57.7" rx="1.9" ry="1.3" fill="#34451a"/><ellipse cx="52.8" cy="34.7" rx="3.5" ry="3.3" fill="#3e4e16"/><ellipse cx="65.5" cy="35.2" rx="1.9" ry="1.9" fill="#3e4e16"/><ellipse cx="81.9" cy="24.2" rx="2.2" ry="1.4" fill="#34451a"/><ellipse cx="51.9" cy="43.3" rx="2.4" ry="2.0" fill="#1e2a0c"/><ellipse cx="63.3" cy="41.5" rx="3.4" ry="3.4" fill="#2e3c12"/><ellipse cx="80.8" cy="12.9" rx="3.4" ry="2.4" fill="#2e3c12"/><ellipse cx="51.0" cy="24.3" rx="3.0" ry="2.3" fill="#34451a"/><ellipse cx="66.6" cy="39.8" rx="3.0" ry="2.1" fill="#26340e"/><ellipse cx="33.3" cy="37.7" rx="3.5" ry="3.2" fill="#26340e"/><ellipse cx="61.2" cy="6.7" rx="2.1" ry="1.7" fill="#26340e"/><ellipse cx="11.8" cy="29.6" rx="3.4" ry="2.2" fill="#1e2a0c"/><ellipse cx="57.6" cy="36.4" rx="3.5" ry="2.2" fill="#34451a"/><ellipse cx="29.0" cy="53.7" rx="2.7" ry="1.9" fill="#2e3c12"/><ellipse cx="57.6" cy="39.2" rx="3.2" ry="2.0" fill="#34451a"/><ellipse cx="25.5" cy="0.9" rx="2.0" ry="1.4" fill="#3e4e16"/><ellipse cx="20.4" cy="80.8" rx="2.5" ry="2.0" fill="#3e4e16"/><ellipse cx="88.9" cy="21.4" rx="2.0" ry="1.5" fill="#2e3c12"/><ellipse cx="26.4" cy="40.7" rx="1.7" ry="1.0" fill="#2e3c12"/><ellipse cx="33.2" cy="66.9" rx="2.9" ry="2.8" fill="#3e4e16"/><ellipse cx="27.2" cy="61.6" rx="1.7" ry="1.1" fill="#2e3c12"/><ellipse cx="19.4" cy="78.1" rx="2.3" ry="1.6" fill="#1e2a0c"/><ellipse cx="45.4" cy="10.2" rx="2.3" ry="1.7" fill="#26340e"/><ellipse cx="53.2" cy="11.2" rx="2.0" ry="1.8" fill="#1e2a0c"/><ellipse cx="69.4" cy="13.3" rx="2.4" ry="1.8" fill="#26340e"/><ellipse cx="33.9" cy="70.1" rx="2.8" ry="2.6" fill="#1e2a0c"/><ellipse cx="27.0" cy="26.1" rx="3.4" ry="3.0" fill="#3e4e16"/><ellipse cx="18.5" cy="81.4" rx="2.9" ry="2.7" fill="#26340e"/><ellipse cx="54.0" cy="38.3" rx="3.2" ry="3.1" fill="#2e3c12"/><ellipse cx="51.8" cy="39.7" rx="1.6" ry="1.5" fill="#1e2a0c"/><ellipse cx="19.2" cy="59.4" rx="2.9" ry="2.2" fill="#26340e"/><ellipse cx="7.3" cy="76.6" rx="2.9" ry="2.3" fill="#2e3c12"/><ellipse cx="19.8" cy="13.1" rx="3.5" ry="2.2" fill="#1e2a0c"/><ellipse cx="67.9" cy="44.1" rx="2.1" ry="2.0" fill="#26340e"/><ellipse cx="14.9" cy="52.2" rx="3.1" ry="2.5" fill="#3e4e16"/><ellipse cx="91.6" cy="24.7" rx="2.2" ry="1.8" fill="#26340e"/><ellipse cx="22.1" cy="60.3" rx="2.1" ry="1.8" fill="#34451a"/><ellipse cx="46.9" cy="36.3" rx="2.1" ry="1.9" fill="#26340e"/><ellipse cx="12.4" cy="81.5" rx="2.5" ry="2.3" fill="#3e4e16"/><ellipse cx="63.1" cy="47.6" rx="3.5" ry="2.5" fill="#26340e"/><ellipse cx="80.0" cy="0.2" rx="2.5" ry="1.9" fill="#34451a"/><ellipse cx="20.8" cy="59.8" rx="3.1" ry="3.0" fill="#34451a"/><ellipse cx="22.3" cy="29.3" rx="2.2" ry="1.9" fill="#26340e"/><ellipse cx="-0.8" cy="58.2" rx="2.4" ry="1.4" fill="#2e3c12"/><ellipse cx="11.6" cy="75.1" rx="3.1" ry="2.3" fill="#3e4e16"/><ellipse cx="9.8" cy="36.3" rx="2.2" ry="2.1" fill="#34451a"/><ellipse cx="79.9" cy="8.2" rx="1.6" ry="1.1" fill="#34451a"/><ellipse cx="51.2" cy="16.9" rx="2.8" ry="2.7" fill="#34451a"/><ellipse cx="40.2" cy="62.2" rx="1.7" ry="1.5" fill="#34451a"/><ellipse cx="40.1" cy="43.2" rx="2.6" ry="2.4" fill="#2e3c12"/><ellipse cx="90.1" cy="18.4" rx="2.9" ry="2.3" fill="#1e2a0c"/><ellipse cx="89.6" cy="12.9" rx="2.5" ry="2.1" fill="#2e3c12"/><ellipse cx="23.6" cy="66.8" rx="2.7" ry="2.1" fill="#2e3c12"/><ellipse cx="5.1" cy="37.9" rx="3.1" ry="2.3" fill="#34451a"/><ellipse cx="11.8" cy="67.2" rx="2.4" ry="2.0" fill="#2e3c12"/><ellipse cx="76.0" cy="20.1" rx="2.6" ry="2.0" fill="#2e3c12"/><ellipse cx="12.0" cy="29.8" rx="1.9" ry="1.3" fill="#2e3c12"/><ellipse cx="35.4" cy="39.5" rx="2.1" ry="1.9" fill="#34451a"/><ellipse cx="27.8" cy="50.7" rx="2.4" ry="2.2" fill="#3e4e16"/><ellipse cx="8.5" cy="63.3" rx="1.7" ry="1.4" fill="#34451a"/><ellipse cx="10.5" cy="38.1" rx="2.9" ry="1.8" fill="#2e3c12"/><ellipse cx="5.2" cy="64.9" rx="2.5" ry="2.3" fill="#34451a"/><ellipse cx="42.5" cy="19.0" rx="3.1" ry="3.1" fill="#3e4e16"/><ellipse cx="19.6" cy="78.0" rx="3.5" ry="3.3" fill="#1e2a0c"/><ellipse cx="14.0" cy="79.7" rx="1.9" ry="1.9" fill="#1e2a0c"/><ellipse cx="89.0" cy="6.6" rx="2.9" ry="1.8" fill="#3e4e16"/><ellipse cx="39.3" cy="12.0" rx="2.7" ry="2.4" fill="#26340e"/><ellipse cx="46.0" cy="64.3" rx="2.7" ry="2.3" fill="#3e4e16"/><ellipse cx="80.7" cy="13.5" rx="3.5" ry="2.6" fill="#2e3c12"/><ellipse cx="16.2" cy="57.6" rx="2.7" ry="1.9" fill="#3e4e16"/><ellipse cx="0.8" cy="18.1" rx="2.6" ry="2.1" fill="#2e3c12"/><ellipse cx="54.0" cy="8.9" rx="2.2" ry="1.5" fill="#26340e"/><ellipse cx="87.8" cy="23.4" rx="2.4" ry="1.7" fill="#34451a"/><ellipse cx="18.9" cy="0.0" rx="2.3" ry="1.6" fill="#3e4e16"/><ellipse cx="35.4" cy="59.6" rx="2.0" ry="1.5" fill="#2e3c12"/><ellipse cx="17.0" cy="64.1" rx="3.1" ry="2.0" fill="#34451a"/><ellipse cx="45.9" cy="24.1" rx="2.0" ry="2.0" fill="#3e4e16"/><ellipse cx="39.6" cy="10.2" rx="2.4" ry="1.5" fill="#2e3c12"/><ellipse cx="54.0" cy="25.4" rx="1.7" ry="1.3" fill="#3e4e16"/><ellipse cx="5.0" cy="14.1" rx="3.5" ry="2.3" fill="#34451a"/><ellipse cx="60.0" cy="40.9" rx="2.9" ry="2.7" fill="#3e4e16"/><ellipse cx="3.2" cy="31.9" rx="1.8" ry="1.3" fill="#26340e"/><ellipse cx="50.6" cy="6.4" rx="2.4" ry="2.2" fill="#34451a"/><ellipse cx="90.4" cy="24.6" rx="2.0" ry="1.9" fill="#1e2a0c"/><ellipse cx="9.1" cy="68.0" rx="2.5" ry="1.8" fill="#3e4e16"/><ellipse cx="85.6" cy="22.3" rx="1.7" ry="1.2" fill="#26340e"/><ellipse cx="81.2" cy="6.2" rx="2.1" ry="1.3" fill="#1e2a0c"/><ellipse cx="10.4" cy="26.0" rx="3.0" ry="2.9" fill="#1e2a0c"/><ellipse cx="81.5" cy="10.8" rx="2.6" ry="2.5" fill="#3e4e16"/><ellipse cx="86.1" cy="16.4" rx="3.2" ry="3.1" fill="#2e3c12"/><ellipse cx="67.0" cy="36.7" rx="2.2" ry="1.9" fill="#2e3c12"/><ellipse cx="9.9" cy="21.7" rx="3.2" ry="2.0" fill="#1e2a0c"/><ellipse cx="10.4" cy="61.3" rx="2.4" ry="1.9" fill="#26340e"/><ellipse cx="55.5" cy="47.3" rx="3.4" ry="2.4" fill="#26340e"/><ellipse cx="74.0" cy="16.9" rx="3.6" ry="2.4" fill="#3e4e16"/><ellipse cx="20.9" cy="41.5" rx="2.9" ry="2.8" fill="#1e2a0c"/><ellipse cx="72.4" cy="4.1" rx="2.2" ry="1.6" fill="#34451a"/><ellipse cx="38.0" cy="70.3" rx="2.1" ry="1.5" fill="#2e3c12"/><ellipse cx="53.3" cy="25.9" rx="2.1" ry="1.7" fill="#2e3c12"/><ellipse cx="12.6" cy="54.7" rx="2.5" ry="1.6" fill="#26340e"/><ellipse cx="17.2" cy="76.4" rx="2.5" ry="1.5" fill="#34451a"/><ellipse cx="36.3" cy="68.0" rx="2.8" ry="1.9" fill="#1e2a0c"/><ellipse cx="54.5" cy="17.4" rx="2.5" ry="2.3" fill="#34451a"/><ellipse cx="47.4" cy="19.1" rx="2.8" ry="1.7" fill="#2e3c12"/><ellipse cx="8.6" cy="35.6" rx="2.1" ry="1.9" fill="#1e2a0c"/><ellipse cx="22.4" cy="47.2" rx="2.4" ry="1.6" fill="#34451a"/><ellipse cx="38.0" cy="66.8" rx="2.6" ry="1.6" fill="#3e4e16"/><ellipse cx="75.6" cy="1.4" rx="1.9" ry="1.2" fill="#1e2a0c"/><ellipse cx="28.3" cy="40.4" rx="3.6" ry="2.7" fill="#34451a"/><ellipse cx="18.8" cy="22.4" rx="2.3" ry="1.4" fill="#3e4e16"/><ellipse cx="2.5" cy="22.1" rx="2.4" ry="1.9" fill="#26340e"/><ellipse cx="17.5" cy="41.8" rx="2.4" ry="1.9" fill="#34451a"/><ellipse cx="44.4" cy="38.3" rx="1.9" ry="1.2" fill="#3e4e16"/><ellipse cx="62.8" cy="21.0" rx="1.9" ry="1.4" fill="#34451a"/><ellipse cx="61.2" cy="43.4" rx="2.4" ry="1.7" fill="#2e3c12"/><ellipse cx="50.0" cy="10.4" rx="1.7" ry="1.1" fill="#3e4e16"/><ellipse cx="47.0" cy="17.0" rx="2.9" ry="2.4" fill="#2e3c12"/><ellipse cx="59.3" cy="18.0" rx="2.0" ry="1.2" fill="#2e3c12"/><ellipse cx="63.3" cy="45.0" rx="1.9" ry="1.2" fill="#2e3c12"/><ellipse cx="64.5" cy="37.9" rx="2.9" ry="1.9" fill="#34451a"/><ellipse cx="39.6" cy="26.0" rx="3.2" ry="2.3" fill="#3e4e16"/><ellipse cx="3.0" cy="62.7" rx="2.5" ry="1.7" fill="#3e4e16"/><ellipse cx="11.6" cy="4.9" rx="2.1" ry="1.9" fill="#1e2a0c"/><ellipse cx="18.2" cy="74.1" rx="2.4" ry="1.6" fill="#26340e"/><ellipse cx="78.7" cy="26.0" rx="2.6" ry="1.6" fill="#26340e"/><ellipse cx="60.8" cy="41.9" rx="3.2" ry="2.0" fill="#1e2a0c"/><ellipse cx="66.4" cy="39.0" rx="3.2" ry="3.0" fill="#26340e"/><ellipse cx="50.6" cy="16.8" rx="2.0" ry="1.4" fill="#3e4e16"/><ellipse cx="30.7" cy="25.1" rx="2.0" ry="1.7" fill="#34451a"/><ellipse cx="42.7" cy="73.2" rx="2.1" ry="1.4" fill="#3e4e16"/><ellipse cx="66.8" cy="41.1" rx="2.8" ry="2.2" fill="#1e2a0c"/><ellipse cx="3.2" cy="35.1" rx="2.4" ry="2.1" fill="#34451a"/><ellipse cx="87.9" cy="26.6" rx="1.8" ry="1.1" fill="#1e2a0c"/><ellipse cx="11.9" cy="27.7" rx="2.6" ry="1.9" fill="#26340e"/><ellipse cx="55.7" cy="39.3" rx="3.2" ry="2.4" fill="#34451a"/><ellipse cx="1.2" cy="25.5" rx="3.1" ry="2.2" fill="#3e4e16"/><ellipse cx="51.9" cy="22.2" rx="3.2" ry="2.3" fill="#34451a"/><ellipse cx="63.9" cy="20.7" rx="3.1" ry="2.1" fill="#26340e"/><ellipse cx="29.6" cy="62.1" rx="2.6" ry="1.7" fill="#26340e"/><ellipse cx="13.1" cy="56.2" rx="1.7" ry="1.3" fill="#1e2a0c"/><ellipse cx="52.6" cy="8.8" rx="2.4" ry="2.0" fill="#34451a"/><ellipse cx="5.1" cy="66.8" rx="1.9" ry="1.9" fill="#26340e"/><ellipse cx="12.8" cy="49.6" rx="1.7" ry="1.6" fill="#2e3c12"/><ellipse cx="30.5" cy="68.7" rx="1.6" ry="1.6" fill="#1e2a0c"/><ellipse cx="46.3" cy="19.8" rx="3.5" ry="2.4" fill="#3e4e16"/><ellipse cx="50.4" cy="15.0" rx="2.4" ry="1.6" fill="#2e3c12"/><ellipse cx="87.8" cy="10.6" rx="3.5" ry="2.7" fill="#2e3c12"/><ellipse cx="54.5" cy="39.3" rx="2.9" ry="1.9" fill="#1e2a0c"/><ellipse cx="45.5" cy="68.8" rx="3.6" ry="3.2" fill="#3e4e16"/><ellipse cx="13.0" cy="19.0" rx="3.4" ry="3.1" fill="#26340e"/><ellipse cx="18.1" cy="82.5" rx="2.1" ry="1.4" fill="#26340e"/><ellipse cx="34.4" cy="61.5" rx="2.7" ry="2.4" fill="#3e4e16"/><ellipse cx="65.4" cy="41.4" rx="3.5" ry="2.2" fill="#2e3c12"/><ellipse cx="65.1" cy="42.3" rx="2.1" ry="2.0" fill="#2e3c12"/><ellipse cx="8.0" cy="39.3" rx="2.8" ry="2.7" fill="#3e4e16"/><ellipse cx="51.0" cy="43.0" rx="3.0" ry="2.3" fill="#26340e"/><ellipse cx="7.0" cy="54.9" rx="2.0" ry="1.7" fill="#1e2a0c"/><ellipse cx="56.5" cy="22.4" rx="1.7" ry="1.4" fill="#26340e"/><ellipse cx="34.1" cy="40.4" rx="1.7" ry="1.1" fill="#26340e"/><ellipse cx="19.0" cy="-0.2" rx="1.7" ry="1.6" fill="#1e2a0c"/><ellipse cx="22.7" cy="47.3" rx="3.4" ry="3.2" fill="#26340e"/><ellipse cx="87.2" cy="23.7" rx="1.8" ry="1.8" fill="#26340e"/><ellipse cx="78.7" cy="2.2" rx="2.2" ry="1.4" fill="#26340e"/><ellipse cx="13.1" cy="65.2" rx="2.1" ry="1.5" fill="#34451a"/><ellipse cx="46.8" cy="68.3" rx="3.4" ry="2.7" fill="#1e2a0c"/><ellipse cx="34.3" cy="64.9" rx="2.4" ry="2.0" fill="#3e4e16"/><ellipse cx="58.5" cy="17.6" rx="2.7" ry="2.4" fill="#2e3c12"/><ellipse cx="58.5" cy="7.3" rx="2.5" ry="1.7" fill="#1e2a0c"/><ellipse cx="50.4" cy="12.3" rx="2.6" ry="2.5" fill="#2e3c12"/><ellipse cx="44.7" cy="30.0" rx="2.1" ry="1.5" fill="#2e3c12"/><ellipse cx="24.0" cy="55.6" rx="1.9" ry="1.5" fill="#26340e"/><ellipse cx="61.8" cy="37.4" rx="2.3" ry="2.2" fill="#3e4e16"/><ellipse cx="53.0" cy="14.2" rx="2.3" ry="1.7" fill="#34451a"/><ellipse cx="53.8" cy="42.0" rx="3.4" ry="3.3" fill="#2e3c12"/><ellipse cx="16.2" cy="33.6" rx="3.1" ry="2.3" fill="#26340e"/><ellipse cx="-2.3" cy="28.0" rx="2.5" ry="2.2" fill="#1e2a0c"/><ellipse cx="17.4" cy="38.7" rx="2.1" ry="1.4" fill="#2e3c12"/><ellipse cx="9.3" cy="74.7" rx="2.6" ry="1.9" fill="#34451a"/><ellipse cx="55.1" cy="26.6" rx="2.1" ry="1.8" fill="#34451a"/><ellipse cx="8.7" cy="37.8" rx="2.0" ry="1.3" fill="#26340e"/><ellipse cx="73.1" cy="14.0" rx="1.9" ry="1.7" fill="#34451a"/><ellipse cx="83.6" cy="24.0" rx="3.4" ry="2.3" fill="#34451a"/><ellipse cx="83.0" cy="22.2" rx="3.3" ry="2.9" fill="#3e4e16"/><ellipse cx="65.4" cy="41.6" rx="1.6" ry="1.4" fill="#34451a"/><ellipse cx="88.4" cy="22.1" rx="3.3" ry="2.8" fill="#1e2a0c"/><ellipse cx="88.2" cy="18.0" rx="2.9" ry="2.7" fill="#1e2a0c"/><ellipse cx="28.1" cy="28.7" rx="2.2" ry="2.1" fill="#26340e"/><ellipse cx="19.1" cy="47.2" rx="2.9" ry="2.7" fill="#34451a"/><ellipse cx="7.2" cy="79.1" rx="2.4" ry="2.3" fill="#2e3c12"/><ellipse cx="7.0" cy="20.2" rx="2.6" ry="1.6" fill="#26340e"/><ellipse cx="61.7" cy="47.0" rx="3.5" ry="2.8" fill="#2e3c12"/><ellipse cx="79.3" cy="3.9" rx="2.0" ry="1.6" fill="#3e4e16"/><ellipse cx="0.3" cy="28.6" rx="3.5" ry="3.5" fill="#2e3c12"/><ellipse cx="20.9" cy="43.6" rx="1.8" ry="1.4" fill="#1e2a0c"/><ellipse cx="27.7" cy="21.3" rx="1.7" ry="1.3" fill="#26340e"/><ellipse cx="78.9" cy="18.4" rx="2.8" ry="1.9" fill="#26340e"/><ellipse cx="90.1" cy="20.4" rx="2.0" ry="1.6" fill="#3e4e16"/><ellipse cx="57.0" cy="45.0" rx="3.2" ry="2.5" fill="#2e3c12"/><ellipse cx="58.3" cy="36.7" rx="1.9" ry="1.5" fill="#3e4e16"/><ellipse cx="36.7" cy="58.8" rx="3.2" ry="2.3" fill="#3e4e16"/><ellipse cx="14.8" cy="65.9" rx="2.1" ry="1.8" fill="#3e4e16"/><ellipse cx="21.6" cy="78.1" rx="2.2" ry="1.9" fill="#2e3c12"/><ellipse cx="0.2" cy="31.3" rx="2.9" ry="1.9" fill="#34451a"/><ellipse cx="37.9" cy="64.3" rx="3.3" ry="3.0" fill="#34451a"/><ellipse cx="23.9" cy="34.4" rx="2.8" ry="1.9" fill="#26340e"/><ellipse cx="63.3" cy="5.4" rx="1.8" ry="1.7" fill="#2e3c12"/></g>
<ellipse cx="42.7" cy="27.9" rx="1.4" ry="1.3" fill="#5a6c20"/><ellipse cx="22.1" cy="28.6" rx="2.4" ry="2.1" fill="#6a7c24"/><ellipse cx="62.2" cy="36.7" rx="1.4" ry="1.2" fill="#7c8c2c"/><ellipse cx="12.5" cy="76.5" rx="1.3" ry="0.9" fill="#5a6c20"/><ellipse cx="19.4" cy="37.7" rx="1.8" ry="1.6" fill="#7c8c2c"/><ellipse cx="2.8" cy="58.1" rx="2.2" ry="1.5" fill="#6a7c24"/><ellipse cx="-0.6" cy="32.4" rx="2.0" ry="1.5" fill="#5a6c20"/><ellipse cx="91.4" cy="22.0" rx="1.4" ry="1.2" fill="#8a9a3a"/><ellipse cx="34.8" cy="12.4" rx="2.1" ry="1.9" fill="#8a9a3a"/><ellipse cx="53.3" cy="9.5" rx="2.3" ry="1.6" fill="#6a7c24"/><ellipse cx="80.3" cy="19.5" rx="2.2" ry="1.6" fill="#8a9a3a"/><ellipse cx="51.0" cy="40.1" rx="1.5" ry="1.2" fill="#8a9a3a"/><ellipse cx="65.1" cy="43.0" rx="1.6" ry="1.2" fill="#5a6c20"/><ellipse cx="69.3" cy="41.4" rx="1.6" ry="1.4" fill="#7c8c2c"/><ellipse cx="63.4" cy="15.4" rx="1.6" ry="1.4" fill="#6a7c24"/><ellipse cx="8.8" cy="18.6" rx="1.7" ry="1.3" fill="#6a7c24"/><ellipse cx="80.5" cy="10.2" rx="2.3" ry="2.1" fill="#6a7c24"/><ellipse cx="54.0" cy="39.0" rx="2.0" ry="1.3" fill="#6a7c24"/><ellipse cx="11.4" cy="76.5" rx="2.0" ry="1.5" fill="#6a7c24"/><ellipse cx="86.7" cy="5.4" rx="1.6" ry="1.5" fill="#7c8c2c"/><ellipse cx="57.7" cy="36.6" rx="1.4" ry="1.0" fill="#6a7c24"/><ellipse cx="77.7" cy="20.2" rx="2.3" ry="1.9" fill="#5a6c20"/><ellipse cx="40.7" cy="0.2" rx="1.7" ry="1.3" fill="#5a6c20"/><ellipse cx="17.5" cy="1.5" rx="2.4" ry="1.9" fill="#7c8c2c"/><ellipse cx="81.5" cy="21.5" rx="1.8" ry="1.5" fill="#7c8c2c"/><ellipse cx="91.4" cy="22.1" rx="1.3" ry="0.9" fill="#6a7c24"/><ellipse cx="72.2" cy="11.1" rx="2.1" ry="1.6" fill="#7c8c2c"/><ellipse cx="55.0" cy="32.1" rx="2.1" ry="1.9" fill="#7c8c2c"/><ellipse cx="65.2" cy="17.9" rx="1.8" ry="1.7" fill="#8a9a3a"/><ellipse cx="27.3" cy="10.4" rx="1.2" ry="0.9" fill="#6a7c24"/><ellipse cx="35.3" cy="62.4" rx="2.2" ry="1.9" fill="#5a6c20"/><ellipse cx="1.4" cy="39.0" rx="1.7" ry="1.1" fill="#7c8c2c"/><ellipse cx="57.4" cy="16.7" rx="2.0" ry="1.5" fill="#5a6c20"/><ellipse cx="21.5" cy="76.5" rx="1.9" ry="1.3" fill="#8a9a3a"/><ellipse cx="63.6" cy="22.9" rx="2.2" ry="2.1" fill="#8a9a3a"/><ellipse cx="40.1" cy="1.9" rx="1.6" ry="1.6" fill="#5a6c20"/><ellipse cx="5.4" cy="65.5" rx="1.9" ry="1.8" fill="#7c8c2c"/><ellipse cx="33.2" cy="61.3" rx="1.5" ry="1.3" fill="#7c8c2c"/><ellipse cx="25.1" cy="17.5" rx="2.3" ry="1.6" fill="#7c8c2c"/><ellipse cx="56.2" cy="36.7" rx="1.6" ry="1.3" fill="#6a7c24"/><ellipse cx="15.2" cy="75.9" rx="2.1" ry="1.5" fill="#7c8c2c"/><ellipse cx="18.4" cy="2.8" rx="1.4" ry="1.2" fill="#8a9a3a"/><ellipse cx="33.6" cy="2.2" rx="1.3" ry="1.2" fill="#8a9a3a"/><ellipse cx="5.6" cy="63.6" rx="1.5" ry="1.2" fill="#8a9a3a"/><ellipse cx="53.9" cy="27.5" rx="1.3" ry="1.0" fill="#8a9a3a"/><ellipse cx="44.2" cy="29.5" rx="2.2" ry="1.4" fill="#7c8c2c"/><ellipse cx="11.9" cy="79.2" rx="2.0" ry="1.3" fill="#6a7c24"/><ellipse cx="59.3" cy="24.8" rx="1.9" ry="1.2" fill="#6a7c24"/><ellipse cx="41.5" cy="24.5" rx="1.5" ry="1.2" fill="#8a9a3a"/><ellipse cx="14.9" cy="73.5" rx="2.4" ry="2.2" fill="#8a9a3a"/><ellipse cx="7.2" cy="36.5" rx="1.3" ry="0.8" fill="#6a7c24"/><ellipse cx="10.2" cy="22.1" rx="2.3" ry="2.2" fill="#6a7c24"/><ellipse cx="90.7" cy="19.6" rx="1.3" ry="1.1" fill="#8a9a3a"/><ellipse cx="88.9" cy="7.6" rx="1.7" ry="1.6" fill="#5a6c20"/><ellipse cx="14.8" cy="26.6" rx="1.5" ry="1.4" fill="#6a7c24"/><ellipse cx="12.2" cy="34.3" rx="1.2" ry="0.9" fill="#6a7c24"/><ellipse cx="58.0" cy="37.3" rx="2.4" ry="1.5" fill="#6a7c24"/><ellipse cx="6.3" cy="14.5" rx="2.0" ry="1.7" fill="#8a9a3a"/><ellipse cx="14.1" cy="76.4" rx="1.6" ry="1.2" fill="#8a9a3a"/><ellipse cx="2.3" cy="30.8" rx="1.5" ry="1.4" fill="#7c8c2c"/>
<g opacity=".8"><ellipse cx="-1.5" cy="101.7" rx="2.3" ry="2.3" fill="#6a7844"/><ellipse cx="23.7" cy="124.2" rx="1.7" ry="1.6" fill="#6a7844"/><ellipse cx="10.4" cy="97.5" rx="1.2" ry="1.0" fill="#5a6a3c"/><ellipse cx="18.6" cy="137.2" rx="1.4" ry="0.9" fill="#4a5a30"/><ellipse cx="13.5" cy="119.5" rx="1.8" ry="1.4" fill="#6a7844"/><ellipse cx="13.1" cy="125.8" rx="1.4" ry="1.2" fill="#4a5a30"/><ellipse cx="18.7" cy="136.8" rx="1.9" ry="1.5" fill="#4a5a30"/><ellipse cx="22.4" cy="151.3" rx="1.3" ry="1.1" fill="#6a7844"/><ellipse cx="32.2" cy="138.0" rx="2.6" ry="2.5" fill="#8a9060"/><ellipse cx="17.9" cy="121.2" rx="1.6" ry="1.0" fill="#6a7844"/><ellipse cx="33.8" cy="127.8" rx="2.1" ry="1.9" fill="#8a9060"/><ellipse cx="11.4" cy="134.8" rx="2.3" ry="1.6" fill="#4a5a30"/><ellipse cx="20.7" cy="148.8" rx="1.6" ry="1.0" fill="#6a7844"/><ellipse cx="7.3" cy="121.6" rx="1.4" ry="1.3" fill="#5a6a3c"/><ellipse cx="4.5" cy="103.3" rx="1.4" ry="1.2" fill="#6a7844"/><ellipse cx="27.0" cy="126.7" rx="1.6" ry="1.0" fill="#5a6a3c"/><ellipse cx="20.9" cy="127.6" rx="2.5" ry="1.8" fill="#4a5a30"/><ellipse cx="34.6" cy="125.9" rx="1.2" ry="0.8" fill="#8a9060"/><ellipse cx="29.6" cy="129.7" rx="2.4" ry="1.5" fill="#4a5a30"/><ellipse cx="24.7" cy="130.2" rx="1.2" ry="1.2" fill="#8a9060"/><ellipse cx="10.9" cy="105.2" rx="2.3" ry="2.1" fill="#4a5a30"/><ellipse cx="0.2" cy="145.8" rx="1.6" ry="1.6" fill="#5a6a3c"/><ellipse cx="9.9" cy="148.3" rx="2.3" ry="1.4" fill="#6a7844"/><ellipse cx="6.6" cy="103.8" rx="1.3" ry="1.1" fill="#4a5a30"/><ellipse cx="13.6" cy="101.1" rx="2.2" ry="1.4" fill="#4a5a30"/><ellipse cx="2.8" cy="106.8" rx="1.5" ry="1.0" fill="#8a9060"/><ellipse cx="5.7" cy="98.1" rx="1.4" ry="1.1" fill="#8a9060"/><ellipse cx="26.3" cy="136.1" rx="2.4" ry="2.3" fill="#6a7844"/><ellipse cx="9.4" cy="118.4" rx="1.8" ry="1.7" fill="#5a6a3c"/><ellipse cx="8.3" cy="144.4" rx="2.0" ry="1.5" fill="#5a6a3c"/><ellipse cx="6.8" cy="94.8" rx="1.5" ry="1.4" fill="#4a5a30"/><ellipse cx="6.6" cy="103.0" rx="2.3" ry="1.7" fill="#5a6a3c"/><ellipse cx="27.1" cy="120.5" rx="1.5" ry="1.3" fill="#8a9060"/><ellipse cx="2.2" cy="104.9" rx="1.3" ry="0.9" fill="#8a9060"/><ellipse cx="33.7" cy="128.2" rx="2.6" ry="2.2" fill="#8a9060"/><ellipse cx="12.3" cy="101.5" rx="1.6" ry="1.3" fill="#4a5a30"/><ellipse cx="3.1" cy="96.9" rx="1.9" ry="1.3" fill="#8a9060"/><ellipse cx="5.0" cy="104.8" rx="2.1" ry="1.3" fill="#5a6a3c"/><ellipse cx="6.2" cy="110.3" rx="2.0" ry="1.6" fill="#6a7844"/><ellipse cx="6.8" cy="116.0" rx="1.8" ry="1.3" fill="#4a5a30"/><ellipse cx="36.3" cy="129.6" rx="2.4" ry="2.0" fill="#6a7844"/><ellipse cx="5.9" cy="120.9" rx="2.4" ry="2.1" fill="#4a5a30"/><ellipse cx="13.0" cy="147.2" rx="1.7" ry="1.3" fill="#6a7844"/><ellipse cx="20.7" cy="147.4" rx="2.5" ry="2.4" fill="#6a7844"/><ellipse cx="10.4" cy="125.1" rx="1.6" ry="1.1" fill="#6a7844"/><ellipse cx="7.1" cy="102.0" rx="2.4" ry="2.1" fill="#8a9060"/><ellipse cx="2.5" cy="116.3" rx="2.2" ry="1.8" fill="#5a6a3c"/><ellipse cx="29.7" cy="126.4" rx="1.7" ry="1.1" fill="#4a5a30"/><ellipse cx="4.4" cy="118.3" rx="2.3" ry="2.1" fill="#5a6a3c"/><ellipse cx="38.8" cy="126.1" rx="1.6" ry="1.2" fill="#6a7844"/><ellipse cx="13.0" cy="100.2" rx="2.0" ry="1.5" fill="#8a9060"/><ellipse cx="7.7" cy="119.4" rx="1.6" ry="1.2" fill="#5a6a3c"/><ellipse cx="9.4" cy="145.5" rx="1.7" ry="1.3" fill="#4a5a30"/><ellipse cx="1.7" cy="107.5" rx="1.2" ry="0.9" fill="#8a9060"/><ellipse cx="25.5" cy="137.5" rx="1.4" ry="1.2" fill="#8a9060"/><ellipse cx="8.0" cy="95.3" rx="2.6" ry="2.5" fill="#6a7844"/><ellipse cx="27.0" cy="121.0" rx="2.5" ry="1.6" fill="#5a6a3c"/><ellipse cx="7.2" cy="108.7" rx="2.0" ry="1.6" fill="#4a5a30"/><ellipse cx="2.0" cy="147.6" rx="2.2" ry="1.7" fill="#8a9060"/><ellipse cx="2.1" cy="97.0" rx="2.5" ry="2.0" fill="#5a6a3c"/><ellipse cx="1.2" cy="103.4" rx="2.1" ry="2.0" fill="#6a7844"/><ellipse cx="2.7" cy="148.3" rx="2.1" ry="1.8" fill="#4a5a30"/><ellipse cx="31.7" cy="126.5" rx="1.6" ry="1.5" fill="#5a6a3c"/><ellipse cx="6.8" cy="119.2" rx="1.6" ry="1.5" fill="#4a5a30"/><ellipse cx="7.5" cy="107.8" rx="1.4" ry="1.3" fill="#4a5a30"/><ellipse cx="7.9" cy="121.9" rx="1.5" ry="1.1" fill="#5a6a3c"/><ellipse cx="28.7" cy="127.4" rx="1.8" ry="1.3" fill="#5a6a3c"/><ellipse cx="20.9" cy="126.7" rx="1.8" ry="1.5" fill="#5a6a3c"/><ellipse cx="34.1" cy="128.3" rx="2.3" ry="2.2" fill="#4a5a30"/><ellipse cx="3.1" cy="111.7" rx="1.5" ry="1.0" fill="#5a6a3c"/></g>
<g opacity=".92"><ellipse cx="189.8" cy="89.1" rx="3.7" ry="3.4" fill="#c8c884"/><ellipse cx="176.9" cy="137.7" rx="1.8" ry="1.3" fill="#8a9848"/><ellipse cx="178.3" cy="48.9" rx="2.3" ry="2.2" fill="#a8b060"/><ellipse cx="180.5" cy="100.0" rx="2.6" ry="1.8" fill="#a8b060"/><ellipse cx="167.5" cy="135.1" rx="2.7" ry="1.9" fill="#8a9848"/><ellipse cx="195.9" cy="48.4" rx="3.5" ry="2.1" fill="#98a450"/><ellipse cx="155.9" cy="77.9" rx="3.7" ry="3.7" fill="#c8c884"/><ellipse cx="186.4" cy="101.7" rx="3.2" ry="2.5" fill="#b8bc6c"/><ellipse cx="180.9" cy="135.1" rx="3.4" ry="2.1" fill="#b8bc6c"/><ellipse cx="159.3" cy="104.0" rx="3.7" ry="2.8" fill="#98a450"/><ellipse cx="194.4" cy="126.8" rx="2.6" ry="2.2" fill="#c8c884"/><ellipse cx="174.2" cy="97.9" rx="2.9" ry="2.0" fill="#c8c884"/><ellipse cx="162.7" cy="120.9" rx="2.4" ry="1.7" fill="#a8b060"/><ellipse cx="162.2" cy="104.3" rx="2.2" ry="2.0" fill="#8a9848"/><ellipse cx="155.6" cy="97.2" rx="3.4" ry="2.2" fill="#b8bc6c"/><ellipse cx="191.1" cy="128.7" rx="3.1" ry="2.1" fill="#8a9848"/><ellipse cx="154.2" cy="71.9" rx="2.7" ry="2.6" fill="#b8bc6c"/><ellipse cx="161.1" cy="112.6" rx="3.8" ry="2.6" fill="#8a9848"/><ellipse cx="191.2" cy="51.5" rx="3.2" ry="2.6" fill="#a8b060"/><ellipse cx="165.3" cy="108.2" rx="1.9" ry="1.2" fill="#8a9848"/><ellipse cx="167.0" cy="64.1" rx="2.2" ry="1.6" fill="#b8bc6c"/><ellipse cx="198.2" cy="96.7" rx="3.4" ry="2.3" fill="#98a450"/><ellipse cx="170.1" cy="118.5" rx="3.4" ry="2.4" fill="#c8c884"/><ellipse cx="179.8" cy="134.3" rx="3.1" ry="3.0" fill="#b8bc6c"/><ellipse cx="170.1" cy="101.8" rx="3.1" ry="3.0" fill="#98a450"/><ellipse cx="162.1" cy="44.5" rx="2.3" ry="1.7" fill="#c8c884"/><ellipse cx="188.0" cy="94.8" rx="3.6" ry="3.2" fill="#b8bc6c"/><ellipse cx="157.8" cy="69.7" rx="2.7" ry="1.8" fill="#98a450"/><ellipse cx="155.5" cy="54.4" rx="3.7" ry="3.4" fill="#8a9848"/><ellipse cx="157.2" cy="68.1" rx="2.7" ry="2.0" fill="#8a9848"/><ellipse cx="186.7" cy="72.4" rx="3.1" ry="3.0" fill="#a8b060"/><ellipse cx="189.9" cy="57.1" rx="1.9" ry="1.3" fill="#98a450"/><ellipse cx="190.0" cy="115.9" rx="3.2" ry="3.2" fill="#c8c884"/><ellipse cx="181.1" cy="48.6" rx="3.7" ry="2.9" fill="#c8c884"/><ellipse cx="187.5" cy="108.8" rx="3.5" ry="2.8" fill="#c8c884"/><ellipse cx="172.3" cy="48.8" rx="3.7" ry="2.9" fill="#b8bc6c"/><ellipse cx="194.1" cy="48.0" rx="3.4" ry="2.3" fill="#98a450"/><ellipse cx="169.8" cy="98.2" rx="2.9" ry="2.8" fill="#b8bc6c"/><ellipse cx="158.0" cy="106.0" rx="2.2" ry="1.4" fill="#98a450"/><ellipse cx="156.1" cy="68.6" rx="2.3" ry="2.0" fill="#8a9848"/><ellipse cx="167.5" cy="97.2" rx="2.4" ry="2.0" fill="#b8bc6c"/><ellipse cx="175.2" cy="53.0" rx="2.9" ry="2.5" fill="#b8bc6c"/><ellipse cx="156.5" cy="95.3" rx="3.3" ry="2.2" fill="#b8bc6c"/><ellipse cx="172.3" cy="116.5" rx="1.9" ry="1.4" fill="#98a450"/><ellipse cx="183.2" cy="73.9" rx="2.0" ry="1.6" fill="#98a450"/><ellipse cx="188.5" cy="130.1" rx="1.9" ry="1.9" fill="#c8c884"/><ellipse cx="163.9" cy="75.4" rx="3.8" ry="2.7" fill="#8a9848"/><ellipse cx="163.4" cy="70.5" rx="3.4" ry="2.0" fill="#98a450"/><ellipse cx="179.2" cy="74.3" rx="3.7" ry="3.2" fill="#98a450"/><ellipse cx="187.5" cy="90.8" rx="3.3" ry="2.4" fill="#b8bc6c"/><ellipse cx="169.0" cy="97.9" rx="3.6" ry="2.3" fill="#b8bc6c"/><ellipse cx="165.8" cy="110.9" rx="2.2" ry="1.6" fill="#98a450"/><ellipse cx="195.0" cy="130.1" rx="3.5" ry="2.4" fill="#98a450"/><ellipse cx="187.4" cy="72.3" rx="3.6" ry="3.5" fill="#c8c884"/><ellipse cx="171.4" cy="46.2" rx="2.1" ry="1.8" fill="#98a450"/><ellipse cx="190.2" cy="96.2" rx="2.1" ry="1.3" fill="#c8c884"/><ellipse cx="181.0" cy="47.7" rx="2.2" ry="1.3" fill="#98a450"/><ellipse cx="177.7" cy="142.1" rx="1.9" ry="1.8" fill="#c8c884"/><ellipse cx="175.4" cy="94.7" rx="3.5" ry="2.6" fill="#b8bc6c"/><ellipse cx="156.5" cy="65.8" rx="2.5" ry="2.0" fill="#b8bc6c"/><ellipse cx="184.8" cy="119.0" rx="2.9" ry="2.8" fill="#b8bc6c"/><ellipse cx="187.3" cy="83.0" rx="3.2" ry="2.7" fill="#8a9848"/><ellipse cx="182.6" cy="138.0" rx="3.1" ry="2.9" fill="#98a450"/><ellipse cx="178.0" cy="51.5" rx="3.3" ry="2.2" fill="#a8b060"/><ellipse cx="182.7" cy="115.4" rx="2.5" ry="2.1" fill="#b8bc6c"/><ellipse cx="175.7" cy="144.8" rx="3.7" ry="3.1" fill="#b8bc6c"/><ellipse cx="188.3" cy="107.8" rx="3.1" ry="2.5" fill="#b8bc6c"/><ellipse cx="164.9" cy="111.9" rx="2.7" ry="2.3" fill="#8a9848"/><ellipse cx="184.8" cy="67.1" rx="2.9" ry="2.6" fill="#c8c884"/><ellipse cx="161.8" cy="76.2" rx="2.8" ry="2.4" fill="#a8b060"/><ellipse cx="174.8" cy="92.5" rx="2.9" ry="2.4" fill="#b8bc6c"/><ellipse cx="194.1" cy="102.7" rx="1.9" ry="1.2" fill="#b8bc6c"/><ellipse cx="188.9" cy="61.6" rx="2.2" ry="1.4" fill="#98a450"/><ellipse cx="153.6" cy="105.1" rx="3.0" ry="2.5" fill="#b8bc6c"/><ellipse cx="193.4" cy="130.5" rx="2.5" ry="2.3" fill="#a8b060"/><ellipse cx="186.7" cy="103.7" rx="2.8" ry="2.5" fill="#98a450"/><ellipse cx="177.3" cy="48.0" rx="2.5" ry="2.3" fill="#98a450"/><ellipse cx="199.1" cy="92.5" rx="2.3" ry="1.5" fill="#98a450"/><ellipse cx="165.9" cy="73.1" rx="2.7" ry="2.1" fill="#a8b060"/><ellipse cx="187.9" cy="79.0" rx="2.9" ry="2.8" fill="#98a450"/><ellipse cx="180.0" cy="133.4" rx="2.3" ry="2.3" fill="#98a450"/><ellipse cx="193.7" cy="63.4" rx="2.8" ry="2.6" fill="#c8c884"/><ellipse cx="187.5" cy="67.8" rx="3.1" ry="2.3" fill="#8a9848"/><ellipse cx="164.5" cy="70.7" rx="2.7" ry="2.6" fill="#b8bc6c"/><ellipse cx="179.5" cy="100.3" rx="2.4" ry="2.0" fill="#b8bc6c"/><ellipse cx="176.8" cy="79.3" rx="3.3" ry="2.7" fill="#98a450"/><ellipse cx="181.2" cy="137.9" rx="2.5" ry="1.8" fill="#c8c884"/><ellipse cx="172.2" cy="80.6" rx="3.0" ry="2.7" fill="#b8bc6c"/><ellipse cx="161.3" cy="106.2" rx="2.8" ry="2.1" fill="#98a450"/><ellipse cx="163.8" cy="99.9" rx="2.9" ry="2.8" fill="#a8b060"/><ellipse cx="170.7" cy="134.1" rx="2.5" ry="2.3" fill="#98a450"/><ellipse cx="192.1" cy="39.8" rx="3.2" ry="3.1" fill="#98a450"/><ellipse cx="189.6" cy="110.0" rx="3.1" ry="2.9" fill="#98a450"/><ellipse cx="171.8" cy="147.2" rx="3.1" ry="2.5" fill="#c8c884"/><ellipse cx="187.4" cy="37.6" rx="2.1" ry="1.3" fill="#b8bc6c"/><ellipse cx="153.8" cy="74.8" rx="3.3" ry="2.8" fill="#b8bc6c"/><ellipse cx="160.2" cy="106.3" rx="3.3" ry="2.8" fill="#8a9848"/><ellipse cx="193.1" cy="122.7" rx="3.6" ry="2.5" fill="#8a9848"/><ellipse cx="194.8" cy="119.3" rx="3.3" ry="3.0" fill="#c8c884"/><ellipse cx="190.2" cy="77.4" rx="2.2" ry="1.8" fill="#98a450"/><ellipse cx="158.6" cy="95.8" rx="1.8" ry="1.4" fill="#a8b060"/><ellipse cx="188.2" cy="43.0" rx="2.8" ry="1.9" fill="#a8b060"/><ellipse cx="188.6" cy="56.1" rx="2.0" ry="1.4" fill="#8a9848"/><ellipse cx="167.2" cy="100.2" rx="3.1" ry="2.6" fill="#a8b060"/><ellipse cx="175.0" cy="72.2" rx="3.3" ry="2.5" fill="#c8c884"/><ellipse cx="193.4" cy="131.6" rx="3.4" ry="2.9" fill="#a8b060"/><ellipse cx="191.3" cy="106.3" rx="2.6" ry="2.5" fill="#c8c884"/><ellipse cx="186.7" cy="52.5" rx="3.8" ry="2.9" fill="#a8b060"/><ellipse cx="190.6" cy="121.6" rx="2.2" ry="2.0" fill="#8a9848"/><ellipse cx="180.7" cy="98.3" rx="2.5" ry="2.4" fill="#8a9848"/><ellipse cx="157.7" cy="92.2" rx="2.5" ry="1.7" fill="#8a9848"/><ellipse cx="158.6" cy="65.0" rx="2.4" ry="2.4" fill="#8a9848"/><ellipse cx="153.5" cy="70.2" rx="2.9" ry="1.9" fill="#98a450"/><ellipse cx="165.5" cy="57.5" rx="3.4" ry="2.3" fill="#98a450"/><ellipse cx="169.9" cy="51.2" rx="3.7" ry="2.4" fill="#8a9848"/><ellipse cx="162.4" cy="57.3" rx="3.4" ry="3.3" fill="#98a450"/><ellipse cx="189.4" cy="106.7" rx="3.5" ry="2.9" fill="#b8bc6c"/><ellipse cx="190.7" cy="113.2" rx="3.8" ry="2.6" fill="#c8c884"/><ellipse cx="194.1" cy="114.9" rx="2.2" ry="1.4" fill="#a8b060"/><ellipse cx="188.2" cy="67.1" rx="2.6" ry="1.6" fill="#98a450"/><ellipse cx="167.9" cy="145.1" rx="3.7" ry="2.3" fill="#b8bc6c"/><ellipse cx="170.9" cy="74.4" rx="2.3" ry="1.7" fill="#b8bc6c"/><ellipse cx="172.6" cy="135.7" rx="3.8" ry="3.8" fill="#b8bc6c"/><ellipse cx="152.4" cy="101.6" rx="3.3" ry="3.1" fill="#b8bc6c"/><ellipse cx="166.5" cy="116.3" rx="3.5" ry="2.4" fill="#b8bc6c"/><ellipse cx="158.4" cy="73.8" rx="3.4" ry="2.1" fill="#98a450"/><ellipse cx="161.1" cy="78.8" rx="3.8" ry="3.3" fill="#98a450"/><ellipse cx="193.7" cy="105.2" rx="2.1" ry="1.4" fill="#98a450"/><ellipse cx="192.7" cy="123.3" rx="3.2" ry="2.4" fill="#a8b060"/><ellipse cx="183.3" cy="133.3" rx="1.9" ry="1.3" fill="#b8bc6c"/><ellipse cx="187.2" cy="63.7" rx="2.3" ry="2.0" fill="#c8c884"/><ellipse cx="191.9" cy="66.2" rx="1.9" ry="1.3" fill="#a8b060"/><ellipse cx="163.7" cy="70.9" rx="1.8" ry="1.6" fill="#b8bc6c"/><ellipse cx="157.1" cy="93.4" rx="3.8" ry="2.8" fill="#8a9848"/><ellipse cx="160.1" cy="71.4" rx="3.7" ry="3.3" fill="#b8bc6c"/><ellipse cx="165.7" cy="114.9" rx="2.3" ry="1.6" fill="#a8b060"/><ellipse cx="158.2" cy="69.0" rx="2.5" ry="1.8" fill="#a8b060"/><ellipse cx="162.7" cy="46.7" rx="2.9" ry="2.9" fill="#c8c884"/><ellipse cx="161.9" cy="119.0" rx="2.6" ry="2.0" fill="#b8bc6c"/><ellipse cx="182.6" cy="133.9" rx="3.6" ry="2.5" fill="#a8b060"/><ellipse cx="163.3" cy="108.8" rx="3.8" ry="3.3" fill="#b8bc6c"/><ellipse cx="192.8" cy="71.8" rx="3.6" ry="2.8" fill="#a8b060"/><ellipse cx="187.9" cy="111.5" rx="3.1" ry="3.1" fill="#c8c884"/><ellipse cx="154.5" cy="62.9" rx="2.7" ry="2.3" fill="#98a450"/><ellipse cx="176.8" cy="147.9" rx="3.3" ry="2.4" fill="#c8c884"/><ellipse cx="178.0" cy="97.9" rx="3.0" ry="1.9" fill="#98a450"/><ellipse cx="193.7" cy="42.4" rx="2.3" ry="2.2" fill="#c8c884"/><ellipse cx="184.5" cy="118.7" rx="2.2" ry="1.4" fill="#b8bc6c"/><ellipse cx="184.3" cy="118.5" rx="3.4" ry="3.0" fill="#b8bc6c"/><ellipse cx="165.0" cy="92.7" rx="3.1" ry="2.2" fill="#a8b060"/><ellipse cx="193.6" cy="109.0" rx="2.0" ry="1.8" fill="#b8bc6c"/><ellipse cx="180.8" cy="143.6" rx="3.4" ry="2.5" fill="#8a9848"/><ellipse cx="184.8" cy="99.7" rx="2.7" ry="2.1" fill="#a8b060"/><ellipse cx="157.6" cy="68.7" rx="2.8" ry="2.5" fill="#a8b060"/><ellipse cx="183.5" cy="120.8" rx="3.0" ry="2.2" fill="#8a9848"/><ellipse cx="175.9" cy="147.5" rx="1.8" ry="1.1" fill="#98a450"/><ellipse cx="159.4" cy="108.3" rx="3.6" ry="2.5" fill="#98a450"/><ellipse cx="163.4" cy="75.5" rx="3.5" ry="2.3" fill="#b8bc6c"/><ellipse cx="162.0" cy="112.3" rx="1.9" ry="1.4" fill="#c8c884"/><ellipse cx="169.2" cy="48.4" rx="2.6" ry="2.4" fill="#8a9848"/><ellipse cx="190.5" cy="132.9" rx="2.1" ry="1.4" fill="#8a9848"/><ellipse cx="193.3" cy="122.4" rx="3.5" ry="3.2" fill="#a8b060"/><ellipse cx="171.0" cy="144.0" rx="3.7" ry="2.4" fill="#a8b060"/><ellipse cx="164.1" cy="69.3" rx="2.7" ry="1.8" fill="#c8c884"/><ellipse cx="176.9" cy="93.7" rx="2.8" ry="2.5" fill="#a8b060"/><ellipse cx="179.5" cy="47.1" rx="3.2" ry="2.3" fill="#8a9848"/><ellipse cx="176.4" cy="136.6" rx="2.2" ry="1.9" fill="#a8b060"/><ellipse cx="177.2" cy="63.9" rx="3.3" ry="2.6" fill="#8a9848"/><ellipse cx="179.5" cy="39.9" rx="1.9" ry="1.8" fill="#c8c884"/><ellipse cx="171.0" cy="99.9" rx="3.5" ry="2.6" fill="#b8bc6c"/><ellipse cx="180.8" cy="45.9" rx="3.8" ry="3.1" fill="#98a450"/><ellipse cx="183.3" cy="98.2" rx="3.5" ry="2.7" fill="#8a9848"/><ellipse cx="173.7" cy="135.0" rx="2.3" ry="2.1" fill="#c8c884"/><ellipse cx="164.9" cy="119.1" rx="2.2" ry="2.2" fill="#98a450"/><ellipse cx="157.2" cy="69.1" rx="3.7" ry="2.5" fill="#98a450"/><ellipse cx="171.7" cy="58.0" rx="1.9" ry="1.8" fill="#8a9848"/><ellipse cx="169.1" cy="79.4" rx="2.4" ry="2.2" fill="#b8bc6c"/><ellipse cx="152.3" cy="75.8" rx="2.2" ry="1.4" fill="#b8bc6c"/><ellipse cx="178.2" cy="137.3" rx="2.1" ry="1.9" fill="#a8b060"/><ellipse cx="161.3" cy="79.0" rx="2.9" ry="2.3" fill="#b8bc6c"/><ellipse cx="168.1" cy="109.8" rx="2.1" ry="1.7" fill="#b8bc6c"/><ellipse cx="163.9" cy="76.0" rx="3.7" ry="2.6" fill="#c8c884"/><ellipse cx="164.4" cy="110.2" rx="2.6" ry="2.6" fill="#a8b060"/><ellipse cx="170.8" cy="102.8" rx="2.4" ry="2.3" fill="#b8bc6c"/><ellipse cx="188.2" cy="108.6" rx="2.4" ry="1.8" fill="#98a450"/><ellipse cx="189.8" cy="52.6" rx="3.8" ry="3.7" fill="#c8c884"/><ellipse cx="185.3" cy="127.7" rx="2.2" ry="2.0" fill="#8a9848"/><ellipse cx="169.5" cy="47.7" rx="2.7" ry="1.7" fill="#c8c884"/><ellipse cx="195.5" cy="129.3" rx="3.8" ry="3.1" fill="#8a9848"/><ellipse cx="164.8" cy="116.1" rx="3.4" ry="2.3" fill="#a8b060"/><ellipse cx="170.6" cy="110.8" rx="2.9" ry="2.0" fill="#a8b060"/><ellipse cx="157.0" cy="79.5" rx="3.5" ry="2.9" fill="#b8bc6c"/><ellipse cx="172.8" cy="117.4" rx="3.7" ry="2.5" fill="#98a450"/><ellipse cx="160.8" cy="97.8" rx="2.5" ry="2.0" fill="#c8c884"/><ellipse cx="189.8" cy="114.1" rx="3.4" ry="3.1" fill="#98a450"/><ellipse cx="162.9" cy="75.4" rx="3.4" ry="2.6" fill="#8a9848"/><ellipse cx="187.4" cy="63.3" rx="2.0" ry="1.5" fill="#b8bc6c"/><ellipse cx="196.1" cy="125.5" rx="3.3" ry="2.2" fill="#98a450"/><ellipse cx="179.7" cy="105.6" rx="3.5" ry="2.6" fill="#c8c884"/><ellipse cx="173.0" cy="120.7" rx="2.0" ry="1.4" fill="#c8c884"/><ellipse cx="182.9" cy="97.7" rx="2.9" ry="2.4" fill="#a8b060"/><ellipse cx="194.0" cy="117.7" rx="2.9" ry="2.8" fill="#b8bc6c"/><ellipse cx="183.4" cy="45.3" rx="3.7" ry="3.4" fill="#c8c884"/><ellipse cx="179.3" cy="42.0" rx="3.3" ry="3.1" fill="#b8bc6c"/><ellipse cx="156.6" cy="68.0" rx="2.0" ry="1.9" fill="#8a9848"/><ellipse cx="182.6" cy="79.2" rx="2.3" ry="2.0" fill="#8a9848"/><ellipse cx="174.6" cy="54.6" rx="2.5" ry="1.5" fill="#a8b060"/><ellipse cx="164.3" cy="93.6" rx="3.4" ry="2.9" fill="#c8c884"/><ellipse cx="171.7" cy="100.8" rx="2.6" ry="1.6" fill="#c8c884"/><ellipse cx="188.4" cy="51.2" rx="2.1" ry="1.9" fill="#98a450"/><ellipse cx="184.2" cy="50.0" rx="2.5" ry="2.5" fill="#a8b060"/><ellipse cx="163.6" cy="73.4" rx="2.5" ry="2.2" fill="#a8b060"/><ellipse cx="189.5" cy="104.5" rx="3.5" ry="2.2" fill="#c8c884"/><ellipse cx="183.8" cy="113.8" rx="2.8" ry="1.8" fill="#c8c884"/><ellipse cx="172.4" cy="111.6" rx="3.5" ry="2.3" fill="#8a9848"/><ellipse cx="180.0" cy="132.1" rx="3.5" ry="3.2" fill="#98a450"/><ellipse cx="197.3" cy="96.1" rx="3.4" ry="2.4" fill="#b8bc6c"/><ellipse cx="151.1" cy="69.2" rx="3.0" ry="2.2" fill="#a8b060"/><ellipse cx="178.2" cy="132.0" rx="3.7" ry="2.8" fill="#c8c884"/><ellipse cx="187.6" cy="105.9" rx="3.4" ry="3.3" fill="#8a9848"/></g>
<ellipse cx="176.2" cy="139.4" rx="1.9" ry="1.8" fill="#d8d8a0"/><ellipse cx="152.6" cy="75.0" rx="1.8" ry="1.5" fill="#e0dca8"/><ellipse cx="178.2" cy="104.1" rx="2.1" ry="1.5" fill="#e0dca8"/><ellipse cx="169.3" cy="123.8" rx="1.8" ry="1.6" fill="#ccd090"/><ellipse cx="188.3" cy="105.0" rx="1.7" ry="1.3" fill="#d8d8a0"/><ellipse cx="194.6" cy="117.8" rx="1.5" ry="1.4" fill="#ccd090"/><ellipse cx="174.0" cy="145.3" rx="2.4" ry="1.6" fill="#ccd090"/><ellipse cx="161.3" cy="100.7" rx="2.4" ry="2.3" fill="#d8d8a0"/><ellipse cx="152.1" cy="69.4" rx="2.2" ry="1.4" fill="#ccd090"/><ellipse cx="181.7" cy="146.5" rx="1.6" ry="1.0" fill="#e0dca8"/><ellipse cx="182.6" cy="124.7" rx="1.7" ry="1.5" fill="#ccd090"/><ellipse cx="184.3" cy="136.6" rx="1.3" ry="1.0" fill="#ccd090"/><ellipse cx="189.6" cy="118.2" rx="2.4" ry="1.6" fill="#ccd090"/><ellipse cx="167.8" cy="142.8" rx="2.4" ry="2.1" fill="#ccd090"/><ellipse cx="162.5" cy="73.0" rx="1.4" ry="0.9" fill="#e0dca8"/><ellipse cx="181.2" cy="59.9" rx="2.0" ry="1.7" fill="#e0dca8"/><ellipse cx="179.2" cy="52.4" rx="1.8" ry="1.5" fill="#e0dca8"/><ellipse cx="166.1" cy="140.4" rx="1.7" ry="1.2" fill="#e0dca8"/><ellipse cx="161.3" cy="65.7" rx="1.7" ry="1.1" fill="#d8d8a0"/><ellipse cx="181.9" cy="76.1" rx="1.4" ry="1.4" fill="#e0dca8"/><ellipse cx="173.8" cy="114.6" rx="1.7" ry="1.2" fill="#ccd090"/><ellipse cx="170.8" cy="112.1" rx="2.1" ry="1.6" fill="#e0dca8"/><ellipse cx="162.7" cy="119.9" rx="2.3" ry="1.6" fill="#e0dca8"/><ellipse cx="192.6" cy="42.8" rx="1.9" ry="1.6" fill="#e0dca8"/><ellipse cx="194.1" cy="122.0" rx="1.9" ry="1.6" fill="#ccd090"/><ellipse cx="176.1" cy="134.8" rx="1.7" ry="1.4" fill="#e0dca8"/><ellipse cx="167.9" cy="113.5" rx="1.8" ry="1.1" fill="#d8d8a0"/><ellipse cx="160.7" cy="122.9" rx="1.6" ry="1.5" fill="#d8d8a0"/><ellipse cx="186.3" cy="69.9" rx="1.8" ry="1.1" fill="#ccd090"/><ellipse cx="167.9" cy="119.3" rx="2.2" ry="1.9" fill="#ccd090"/><ellipse cx="168.4" cy="146.0" rx="2.2" ry="1.7" fill="#e0dca8"/><ellipse cx="159.6" cy="67.6" rx="1.5" ry="1.2" fill="#d8d8a0"/><ellipse cx="171.4" cy="131.7" rx="1.4" ry="1.2" fill="#e0dca8"/><ellipse cx="176.5" cy="140.2" rx="2.0" ry="1.7" fill="#d8d8a0"/><ellipse cx="177.9" cy="148.3" rx="2.3" ry="2.1" fill="#ccd090"/><ellipse cx="166.8" cy="108.0" rx="2.3" ry="1.5" fill="#ccd090"/><ellipse cx="172.2" cy="111.4" rx="2.3" ry="1.8" fill="#ccd090"/><ellipse cx="171.1" cy="121.5" rx="2.2" ry="2.1" fill="#ccd090"/><ellipse cx="187.5" cy="71.0" rx="1.9" ry="1.3" fill="#ccd090"/><ellipse cx="178.7" cy="51.0" rx="2.0" ry="1.5" fill="#d8d8a0"/><ellipse cx="195.9" cy="102.9" rx="1.5" ry="1.3" fill="#e0dca8"/><ellipse cx="155.3" cy="102.8" rx="2.6" ry="2.1" fill="#ccd090"/><ellipse cx="191.4" cy="64.9" rx="1.4" ry="1.0" fill="#d8d8a0"/><ellipse cx="195.7" cy="117.8" rx="1.5" ry="1.4" fill="#ccd090"/><ellipse cx="179.1" cy="54.7" rx="2.0" ry="1.2" fill="#ccd090"/><ellipse cx="169.0" cy="101.5" rx="1.8" ry="1.8" fill="#d8d8a0"/><ellipse cx="164.9" cy="109.2" rx="1.8" ry="1.7" fill="#ccd090"/><ellipse cx="177.4" cy="149.2" rx="2.6" ry="2.6" fill="#e0dca8"/><ellipse cx="187.8" cy="114.1" rx="2.1" ry="1.4" fill="#ccd090"/><ellipse cx="165.4" cy="70.6" rx="2.1" ry="1.5" fill="#d8d8a0"/><ellipse cx="186.7" cy="48.4" rx="2.3" ry="2.0" fill="#d8d8a0"/><ellipse cx="162.9" cy="63.7" rx="2.2" ry="2.0" fill="#d8d8a0"/><ellipse cx="170.3" cy="43.2" rx="2.6" ry="2.3" fill="#ccd090"/><ellipse cx="188.4" cy="51.0" rx="2.2" ry="1.6" fill="#d8d8a0"/><ellipse cx="185.3" cy="140.8" rx="2.2" ry="1.8" fill="#ccd090"/><ellipse cx="185.8" cy="112.4" rx="1.6" ry="1.2" fill="#e0dca8"/><ellipse cx="170.8" cy="41.7" rx="1.8" ry="1.6" fill="#d8d8a0"/><ellipse cx="158.7" cy="67.4" rx="2.4" ry="2.2" fill="#e0dca8"/><ellipse cx="155.7" cy="72.2" rx="1.7" ry="1.3" fill="#e0dca8"/><ellipse cx="166.3" cy="92.9" rx="1.6" ry="1.1" fill="#e0dca8"/>
<g opacity=".85"><ellipse cx="153.3" cy="99.2" rx="1.5" ry="1.4" fill="#7a8840"/><ellipse cx="171.6" cy="59.9" rx="1.4" ry="0.9" fill="#7a8840"/><ellipse cx="163.2" cy="76.4" rx="1.9" ry="1.2" fill="#6a7838"/><ellipse cx="156.4" cy="72.4" rx="2.4" ry="2.4" fill="#5c6a30"/><ellipse cx="154.0" cy="107.8" rx="1.8" ry="1.8" fill="#5c6a30"/><ellipse cx="158.3" cy="79.6" rx="1.7" ry="1.1" fill="#6a7838"/><ellipse cx="177.0" cy="90.6" rx="2.0" ry="1.7" fill="#5c6a30"/><ellipse cx="170.7" cy="61.0" rx="2.2" ry="1.5" fill="#7a8840"/><ellipse cx="170.9" cy="88.0" rx="2.4" ry="1.6" fill="#5c6a30"/><ellipse cx="167.6" cy="68.2" rx="1.5" ry="0.9" fill="#6a7838"/><ellipse cx="167.4" cy="88.1" rx="1.3" ry="1.2" fill="#6a7838"/><ellipse cx="172.5" cy="90.9" rx="1.3" ry="1.2" fill="#6a7838"/><ellipse cx="172.3" cy="90.8" rx="2.0" ry="1.9" fill="#5c6a30"/><ellipse cx="159.3" cy="105.1" rx="1.9" ry="1.7" fill="#6a7838"/><ellipse cx="160.8" cy="78.6" rx="1.4" ry="1.0" fill="#5c6a30"/><ellipse cx="170.5" cy="69.7" rx="2.4" ry="2.1" fill="#5c6a30"/><ellipse cx="151.7" cy="71.9" rx="2.0" ry="1.3" fill="#5c6a30"/><ellipse cx="154.7" cy="66.7" rx="1.8" ry="1.1" fill="#5c6a30"/><ellipse cx="179.2" cy="92.8" rx="2.3" ry="1.6" fill="#7a8840"/><ellipse cx="168.3" cy="86.8" rx="2.1" ry="1.7" fill="#6a7838"/><ellipse cx="155.3" cy="102.4" rx="1.5" ry="1.0" fill="#6a7838"/><ellipse cx="154.6" cy="109.0" rx="1.4" ry="1.2" fill="#5c6a30"/><ellipse cx="156.0" cy="103.5" rx="1.3" ry="1.1" fill="#6a7838"/><ellipse cx="166.6" cy="91.5" rx="1.8" ry="1.5" fill="#5c6a30"/><ellipse cx="177.9" cy="89.4" rx="2.3" ry="2.2" fill="#6a7838"/><ellipse cx="156.6" cy="69.4" rx="2.5" ry="1.7" fill="#6a7838"/><ellipse cx="152.1" cy="105.8" rx="1.6" ry="1.5" fill="#7a8840"/><ellipse cx="156.9" cy="74.2" rx="1.8" ry="1.6" fill="#5c6a30"/><ellipse cx="170.8" cy="59.1" rx="2.6" ry="1.8" fill="#7a8840"/><ellipse cx="177.8" cy="92.4" rx="1.7" ry="1.6" fill="#5c6a30"/><ellipse cx="160.4" cy="104.1" rx="1.5" ry="1.4" fill="#7a8840"/><ellipse cx="177.7" cy="95.3" rx="1.6" ry="1.2" fill="#5c6a30"/><ellipse cx="150.4" cy="70.2" rx="1.4" ry="0.9" fill="#5c6a30"/><ellipse cx="176.7" cy="90.5" rx="2.5" ry="2.3" fill="#5c6a30"/><ellipse cx="155.8" cy="69.0" rx="2.3" ry="2.0" fill="#6a7838"/><ellipse cx="167.5" cy="58.3" rx="1.4" ry="1.2" fill="#7a8840"/><ellipse cx="169.5" cy="87.2" rx="2.3" ry="1.7" fill="#6a7838"/><ellipse cx="164.2" cy="76.1" rx="2.1" ry="2.1" fill="#5c6a30"/><ellipse cx="168.6" cy="88.1" rx="2.2" ry="1.4" fill="#7a8840"/><ellipse cx="155.9" cy="71.5" rx="1.3" ry="0.8" fill="#5c6a30"/></g>
</g>
</g>
</g>
</svg>

<svg id="p3" viewBox="0 0 197 208" style="left:18px;top:608px;width:197px;height:208px;overflow:hidden">
<defs>
<linearGradient id="p3sky" x1="0" y1="0" x2="0" y2="1"><stop offset="0" stop-color="#0a78dc"/><stop offset=".45" stop-color="#2a96e4"/><stop offset=".8" stop-color="#9ad0ee"/><stop offset="1" stop-color="#d8ecf6"/></linearGradient>
<linearGradient id="p3f" x1="0" y1="0" x2="0" y2="1"><stop offset="0" stop-color="#dccab6"/><stop offset="1" stop-color="#c8b4a0"/></linearGradient>
<linearGradient id="p3r" x1="0" y1="0" x2="1" y2="0"><stop offset="0" stop-color="#847264"/><stop offset="1" stop-color="#ac9c8c"/></linearGradient>
<filter id="p3b" x="-5%" y="-5%" width="110%" height="110%"><feGaussianBlur stdDeviation="0.55"/></filter>
<filter id="p3b2" x="-20%" y="-20%" width="140%" height="140%"><feGaussianBlur stdDeviation="2.2"/></filter>
<clipPath id="p3c"><rect width="197" height="208"/></clipPath>
</defs>
<g clip-path="url(#p3c)">
<rect width="197" height="190" fill="url(#p3sky)"/>
<g filter="url(#p3b2)" fill="#fff">
<ellipse cx="38" cy="30" rx="10" ry="12" opacity=".9"/><ellipse cx="44" cy="40" rx="6" ry="6" opacity=".8"/><ellipse cx="18" cy="42" rx="10" ry="7" opacity=".75"/><ellipse cx="8" cy="50" rx="6" ry="4" opacity=".5"/>
<ellipse cx="178" cy="14" rx="26" ry="16" opacity=".95"/><ellipse cx="192" cy="40" rx="12" ry="14" opacity=".9"/><ellipse cx="160" cy="4" rx="12" ry="6" opacity=".8"/>
<ellipse cx="186" cy="86" rx="14" ry="8" opacity=".8"/><ellipse cx="190" cy="104" rx="14" ry="8" opacity=".9"/><ellipse cx="192" cy="120" rx="10" ry="12" opacity=".85"/><ellipse cx="192" cy="150" rx="10" ry="16" opacity=".7"/>
</g>
<g filter="url(#p3b)">
<polygon points="0,72 12,66 88,0 140,0 140,192 0,192" fill="url(#p3f)"/>
<polygon points="12,66 90,0 100,0 100,6 30,62 12,74" fill="#7c4038"/>
<polygon points="0,72 12,66 12,76 0,82" fill="#cbb8a4"/>
<polygon points="14,69 19,62 23,66 23,72 14,75" fill="#d8c6b2"/>
<polygon points="16,69 21,66 21,70 16,73" fill="#2c2420"/>
<polygon points="22,63 27,56 31,60 31,66 22,69" fill="#d8c6b2"/>
<polygon points="24,63 29,60 29,64 24,67" fill="#2c2420"/>
<polygon points="53,41 58,34 62,38 62,44 53,47" fill="#d8c6b2"/>
<polygon points="55,41 60,38 60,42 55,45" fill="#2c2420"/>
<polygon points="66,31 71,24 75,28 75,34 66,37" fill="#d8c6b2"/>
<polygon points="68,31 73,28 73,32 68,35" fill="#2c2420"/>
<polygon points="82,19 87,12 91,16 91,22 82,25" fill="#d8c6b2"/>
<polygon points="84,19 89,16 89,20 84,23" fill="#2c2420"/>
<polygon points="98,8 103,1 107,5 107,11 98,14" fill="#d8c6b2"/>
<polygon points="100,8 105,5 105,9 100,12" fill="#2c2420"/>
<polygon points="0,82 140,-28 140,-22 0,88" fill="#bca892" opacity=".0"/>
<path d="M0 86 L50 50 L138 -8" stroke="#b8a48e" stroke-width="2.200" fill="none"/>
<polygon points="139,0 150,0 166,82 162,86 175,108 184,146 184,166 172,184 139,192" fill="url(#p3r)"/>
<polygon points="78,40 93,30 93,139 78,142" fill="#6a584c"/>
<polygon points="30,70 50,58 50,148 30,152" fill="#6a584c"/>
<polygon points="0,92 12,84 12,155 0,158" fill="#6a584c"/>
<polygon points="77,54 94,50 94,54 77,58" fill="#cdbba8"/>
<polygon points="77,72 94,68 94,72 77,76" fill="#cdbba8"/>
<polygon points="77,90 94,86 94,90 77,94" fill="#cdbba8"/>
<polygon points="77,108 94,104 94,108 77,112" fill="#cdbba8"/>
<polygon points="77,124 94,120 94,124 77,128" fill="#cdbba8"/>
<polygon points="77,140 94,136 94,140 77,144" fill="#cdbba8"/>
<polygon points="29,81 51,76 51,80 29,85" fill="#cdbba8"/>
<polygon points="29,97 51,92 51,96 29,101" fill="#cdbba8"/>
<polygon points="29,113 51,108 51,112 29,117" fill="#cdbba8"/>
<polygon points="29,127 51,122 51,126 29,131" fill="#cdbba8"/>
<polygon points="29,141 51,136 51,140 29,145" fill="#cdbba8"/>
<polygon points="0,100 13,97 13,101 0,104" fill="#cdbba8"/>
<polygon points="0,114 13,111 13,115 0,118" fill="#cdbba8"/>
<polygon points="0,128 13,125 13,129 0,132" fill="#cdbba8"/>
<polygon points="0,142 13,139 13,143 0,146" fill="#cdbba8"/>
<polygon points="0,154 13,151 13,155 0,158" fill="#cdbba8"/>
<polygon points="118.5,16 130.0,11.0 130.0,26.0 118.5,31" fill="#1a2440"/>
<polygon points="118.5,38 130.0,33.625 130.0,48.625 118.5,53" fill="#1a2440"/>
<polygon points="118.5,60 130.0,56.25 130.0,71.25 118.5,75" fill="#1a2440"/>
<polygon points="118.5,82 130.0,78.875 130.0,93.875 118.5,97" fill="#1a2440"/>
<polygon points="118.5,104 130.0,101.5 130.0,116.5 118.5,119" fill="#1a2440"/>
<polygon points="118.5,126 130.0,124.125 130.0,139.125 118.5,141" fill="#1a2440"/>
<polygon points="99,29 108.5,25.0 108.5,37.5 99,41.5" fill="#1a2440"/>
<polygon points="99,49 108.5,45.5 108.5,58.0 99,61.5" fill="#1a2440"/>
<polygon points="99,69 108.5,66.0 108.5,78.5 99,81.5" fill="#1a2440"/>
<polygon points="99,89 108.5,86.5 108.5,99.0 99,101.5" fill="#1a2440"/>
<polygon points="99,109 108.5,107.0 108.5,119.5 99,121.5" fill="#1a2440"/>
<polygon points="99,129 108.5,127.5 108.5,140.0 99,141.5" fill="#1a2440"/>
<polygon points="68,49.0 75,46.0 75,56.5 68,59.5" fill="#1a2440"/>
<polygon points="68,66.5 75,63.875 75,74.375 68,77.0" fill="#1a2440"/>
<polygon points="68,84.0 75,81.75 75,92.25 68,94.5" fill="#1a2440"/>
<polygon points="68,101.5 75,99.625 75,110.125 68,112.0" fill="#1a2440"/>
<polygon points="68,119.0 75,117.5 75,128.0 68,129.5" fill="#1a2440"/>
<polygon points="68,136.5 75,135.375 75,145.875 68,147.0" fill="#1a2440"/>
<polygon points="55,58.0 61,55.5 61,65.0 55,67.5" fill="#1a2440"/>
<polygon points="55,74.5 61,72.3125 61,81.8125 55,84.0" fill="#1a2440"/>
<polygon points="55,91.0 61,89.125 61,98.625 55,100.5" fill="#1a2440"/>
<polygon points="55,107.5 61,105.9375 61,115.4375 55,117.0" fill="#1a2440"/>
<polygon points="55,124.0 61,122.75 61,132.25 55,133.5" fill="#1a2440"/>
<polygon points="55,140.5 61,139.5625 61,149.0625 55,150.0" fill="#1a2440"/>
<polygon points="23.5,78.0 27.5,76.5 27.5,84.0 23.5,85.5" fill="#1a2440"/>
<polygon points="23.5,91.5 27.5,90.1875 27.5,97.6875 23.5,99.0" fill="#1a2440"/>
<polygon points="23.5,105.0 27.5,103.875 27.5,111.375 23.5,112.5" fill="#1a2440"/>
<polygon points="23.5,118.5 27.5,117.5625 27.5,125.0625 23.5,126.0" fill="#1a2440"/>
<polygon points="23.5,132.0 27.5,131.25 27.5,138.75 23.5,139.5" fill="#1a2440"/>
<polygon points="23.5,145.5 27.5,144.9375 27.5,152.4375 23.5,153.0" fill="#1a2440"/>
<polygon points="15.5,83 19.0,81.8 19.0,88.8 15.5,90" fill="#1a2440"/>
<polygon points="15.5,96 19.0,94.95 19.0,101.95 15.5,103" fill="#1a2440"/>
<polygon points="15.5,109 19.0,108.1 19.0,115.1 15.5,116" fill="#1a2440"/>
<polygon points="15.5,122 19.0,121.25 19.0,128.25 15.5,129" fill="#1a2440"/>
<polygon points="15.5,135 19.0,134.4 19.0,141.4 15.5,142" fill="#1a2440"/>
<polygon points="15.5,148 19.0,147.55 19.0,154.55 15.5,155" fill="#1a2440"/>
<polygon points="141.0,8 147.0,12.0 147.0,20.0 141.0,17" fill="#3a2e2a"/>
<polygon points="142.2,26 149.7,30.5 149.7,38.5 142.2,35" fill="#3a2e2a"/>
<polygon points="143.4,44 152.4,49.0 152.4,57.0 143.4,53" fill="#3a2e2a"/>
<polygon points="144.6,62 155.1,67.5 155.1,75.5 144.6,71" fill="#3a2e2a"/>
<polygon points="145.8,80 157.8,86.0 157.8,94.0 145.8,89" fill="#3a2e2a"/>
<polygon points="147.0,98 160.5,104.5 160.5,112.5 147.0,107" fill="#3a2e2a"/>
<polygon points="148.2,116 163.2,123.0 163.2,131.0 148.2,125" fill="#3a2e2a"/>
<polygon points="149.4,134 165.9,141.5 165.9,149.5 149.4,143" fill="#3a2e2a"/>
<polygon points="152,62 159,66 159,73 152,70" fill="#4a3c34"/>
<polygon points="146,64 150,66 150,72 146,70" fill="#3e322c"/>
<polygon points="156,77 163,81 163,88 156,85" fill="#4a3c34"/>
<polygon points="150,79 154,81 154,87 150,85" fill="#3e322c"/>
<polygon points="160,92 167,96 167,103 160,100" fill="#4a3c34"/>
<polygon points="154,94 158,96 158,102 154,100" fill="#3e322c"/>
<polygon points="164,107 171,111 171,118 164,115" fill="#4a3c34"/>
<polygon points="158,109 162,111 162,117 158,115" fill="#3e322c"/>
<polygon points="168,122 175,126 175,133 168,130" fill="#4a3c34"/>
<polygon points="162,124 166,126 166,132 162,130" fill="#3e322c"/>
<polygon points="172,137 179,141 179,148 172,145" fill="#4a3c34"/>
<polygon points="166,139 170,141 170,147 166,145" fill="#3e322c"/>
<polygon points="0,157 50,148 138,135.500 138,193 0,192" fill="#766c66"/>
<polygon points="0,154.500 50,145.500 138,133 138,136.500 50,149.500 0,158.500" fill="#4e4844"/>
<polygon points="138,133 170,160 172,184 138,193" fill="#6a605a"/>
<polygon points="138,133 170,159 170,162 138,137" fill="#3e3834"/>
<rect x="118" y="143" width="12" height="12" fill="#1e1c22"/>
<rect x="99" y="146" width="9.5" height="11" fill="#1e1c22"/>
<rect x="118" y="165" width="12" height="17" fill="#1e1c22"/>
<rect x="98.5" y="166" width="10" height="16" fill="#1e1c22"/>
<rect x="82" y="168" width="8" height="14" fill="#1e1c22"/>
<rect x="67" y="175" width="7" height="9" fill="#1e1c22"/>
<rect x="54" y="153" width="6" height="8" fill="#1e1c22"/>
<rect x="68" y="150" width="6" height="8" fill="#1e1c22"/>
<rect x="80" y="147" width="12" height="12" fill="#1e1c22"/>
<rect x="45" y="160" width="12" height="6" fill="#1e1c22"/>
<rect x="34" y="162" width="10" height="8" fill="#1e1c22"/>
<rect x="120" y="172" width="9" height="9" fill="#8a4450"/>
<rect x="36" y="160" width="28" height="5" fill="#5c544e"/>
<rect x="35" y="168" width="8" height="20" fill="#2a2624"/>
<rect x="47" y="170" width="6" height="18" fill="#2a2624"/>
<rect x="56" y="168" width="5" height="20" fill="#2a2624"/>
<rect x="18" y="172" width="6" height="16" fill="#2a2624"/>
<rect x="3" y="172" width="8" height="18" fill="#2a2624"/>
<rect x="140" y="144" width="2" height="9" fill="#2c2826"/>
<rect x="146" y="150" width="2" height="8" fill="#2c2826"/>
<rect x="140" y="166" width="3" height="16" fill="#2c2826"/>
<rect x="146" y="168" width="2.5" height="14" fill="#2c2826"/>
<rect x="152" y="170" width="2" height="12" fill="#2c2826"/>
<rect x="158" y="172" width="5" height="10" fill="#2c2826"/>
<polygon points="0,190 197,186 197,208 0,208" fill="#94929a"/>
<polygon points="40,192 140,190 175,184 192,184 186,196 120,200 60,196" fill="#b8b0a8"/>
<polygon points="0,196 110,198 100,208 0,208" fill="#8e8884"/>
<polygon points="100,199 106,199 102,208 94,208" fill="#d4d0cc"/>
<polygon points="109,199 115,199 111,208 103,208" fill="#d4d0cc"/>
<polygon points="118,199 124,199 120,208 112,208" fill="#d4d0cc"/>
<polygon points="127,199 133,199 129,208 121,208" fill="#d4d0cc"/>
<polygon points="136,199 142,199 138,208 130,208" fill="#d4d0cc"/>
<polygon points="150,201 197,198 197,208 140,208" fill="#807a78"/>
<polygon points="182,190 194,183 197,183 197,196 186,197" fill="#c4beb6"/>
<polygon points="180,186 192,181 192,185 181,192" fill="#26262a"/>
<rect x="193" y="182" width="4" height="6" fill="#3a3a40"/>
<ellipse cx="22" cy="166" rx="11" ry="11" fill="#3f7a2c"/>
<ellipse cx="20" cy="163" rx="6.6" ry="6.050000000000001" fill="#5a9a38"/>
<rect x="21.5" y="175" width="1.200" height="17" fill="#5a4630"/>
<ellipse cx="75" cy="164" rx="11" ry="11" fill="#3f7a2c"/>
<ellipse cx="73" cy="161" rx="6.6" ry="6.050000000000001" fill="#5a9a38"/>
<rect x="74.5" y="173" width="1.200" height="19" fill="#5a4630"/>
<ellipse cx="182" cy="170" rx="12" ry="11" fill="#3f7a2c"/>
<ellipse cx="180" cy="167" rx="7.199999999999999" ry="6.050000000000001" fill="#5a9a38"/>
<rect x="181.5" y="179" width="1.200" height="13" fill="#5a4630"/>
<ellipse cx="1" cy="167" rx="4" ry="8" fill="#3f7a2c"/>
<ellipse cx="-1" cy="164" rx="2.4" ry="4.4" fill="#5a9a38"/>
<rect x="0.5" y="173" width="1.200" height="19" fill="#5a4630"/>
<rect x="113.700" y="133" width="1.600" height="60" fill="#18181c"/><polygon points="112,196 117,196 115.500,190 113.500,190" fill="#18181c"/>
<rect x="97" y="138.500" width="6.500" height="9.500" fill="#1c1c20"/><rect x="112" y="138" width="6" height="9" fill="#1c1c20"/><rect x="100" y="141" width="14" height="1" fill="#1c1c20"/><rect x="112.500" y="166" width="4.500" height="5" fill="#1c1c20"/>
<rect x="45" y="161" width="1.400" height="31" fill="#18181c"/><circle cx="45.700" cy="159.500" r="1.800" fill="#f4f0e8"/>
<rect x="6" y="166" width="1.200" height="26" fill="#18181c"/><circle cx="6.600" cy="164" r="1.600" fill="#f4f0e8"/>
<rect x="37.3" y="188" width="1.600" height="6.500" fill="#141418"/>
<rect x="50.3" y="188" width="1.600" height="6.500" fill="#141418"/>
<rect x="58.3" y="188" width="1.600" height="6.500" fill="#141418"/>
<rect x="66.3" y="188" width="1.600" height="6.500" fill="#141418"/>
<rect x="75.3" y="188" width="1.600" height="6.500" fill="#141418"/>
<rect x="84.3" y="188" width="1.600" height="6.500" fill="#141418"/>
<rect x="94.3" y="188" width="1.600" height="6.500" fill="#141418"/>
<rect x="105.3" y="188" width="1.600" height="6.500" fill="#141418"/>
<path d="M4 188 Q5 184 10 183.500 L14 181 L28 181 L32 184 L36 185 L36 192 L4 193 Z" fill="#16181e"/>
<polygon points="15,182 27,182 30,184.500 13,184.500" fill="#3a5668"/>
<circle cx="11" cy="192.500" r="2.300" fill="#0c0c10"/><circle cx="30" cy="192" r="2.300" fill="#0c0c10"/>
<rect x="37.500" y="183" width="2" height="7" fill="#a85040"/>
</g></g></svg>
<svg id="p4" viewBox="0 0 197 145" style="left:672px;top:608px;width:197px;height:145px;overflow:hidden">
<defs>
<linearGradient id="p4sky" x1="0" y1="0" x2="0" y2="1"><stop offset="0" stop-color="#a4aebb"/><stop offset=".45" stop-color="#e2dfd8"/><stop offset="1" stop-color="#d4d8da"/></linearGradient>
<linearGradient id="p4fo" x1="0" y1="0" x2="0" y2="1"><stop offset="0" stop-color="#8a8878"/><stop offset=".3" stop-color="#75683f"/><stop offset="1" stop-color="#5e5234"/></linearGradient>
<filter id="p4b" x="-5%" y="-5%" width="110%" height="110%"><feGaussianBlur stdDeviation="0.5"/></filter>
<filter id="p4b2" x="-20%" y="-20%" width="140%" height="140%"><feGaussianBlur stdDeviation="2"/></filter>
<clipPath id="p4c"><rect width="197" height="145"/></clipPath>
</defs>
<g clip-path="url(#p4c)">
<rect width="197" height="24" fill="url(#p4sky)"/>
<g filter="url(#p4b2)"><ellipse cx="85" cy="6" rx="40" ry="6" fill="#f4ecdc" opacity=".9"/><ellipse cx="12" cy="1" rx="26" ry="4" fill="#5c6c80" opacity=".75"/><ellipse cx="150" cy="3" rx="30" ry="4" fill="#a8b0bc" opacity=".7"/><ellipse cx="185" cy="8" rx="14" ry="6" fill="#f0e8d8" opacity=".8"/></g>
<rect y="22" width="197" height="123" fill="url(#p4fo)"/>
<g filter="url(#p4b)">
<!-- haze band -->
<rect x="0" y="22" width="197" height="16" fill="#b0b4b6"/>
<rect x="0" y="34" width="197" height="8" fill="#8a8c80" opacity=".8"/>
<!-- towers -->
<g fill="#8e9aaa"><rect x="29" y="14" width="14" height="22"/><rect x="43" y="14.500" width="15" height="20"/><rect x="58" y="17" width="20" height="16"/><rect x="88" y="17" width="11" height="15"/><rect x="127" y="20" width="7" height="11"/><rect x="144" y="20" width="19" height="13"/><rect x="166" y="18" width="21" height="17"/><rect x="190" y="23" width="7" height="10"/><rect x="0" y="20" width="3" height="18"/></g>
<g fill="#a8b0ba"><rect x="33" y="14" width="5" height="22"/><rect x="48" y="14.500" width="5" height="20"/><rect x="64" y="17" width="6" height="16"/><rect x="150" y="20" width="6" height="13"/><rect x="172" y="18" width="7" height="17"/><rect x="99" y="26" width="28" height="8"/></g>
<rect x="4" y="18" width="13" height="21" fill="#7a90b4"/><rect x="9" y="20" width="4" height="19" fill="#3a72c0"/>
<rect x="18" y="22" width="10" height="12" fill="#9aa4b0"/>
<rect x="2" y="43" width="10" height="7" fill="#d87a94"/>
<!-- white low buildings -->
<g fill="#d4d6d8"><rect x="35" y="41" width="14" height="4"/><rect x="49" y="43" width="22" height="4"/><rect x="76" y="40" width="20" height="11"/><rect x="120" y="36" width="8" height="4"/></g>
<rect x="74" y="42" width="6" height="6" fill="#3c3c44"/><rect x="86" y="44" width="4" height="6" fill="#6a6a70"/>
<!-- forest blobs -->
<g fill="#5c4c30"><ellipse cx="170" cy="60" rx="32" ry="20"/><ellipse cx="150" cy="50" rx="16" ry="8"/><ellipse cx="185" cy="85" rx="14" ry="8"/></g>
<g fill="#7a6840"><ellipse cx="40" cy="52" rx="30" ry="8"/><ellipse cx="100" cy="55" rx="26" ry="6"/><ellipse cx="150" cy="45" rx="14" ry="5"/><ellipse cx="185" cy="50" rx="12" ry="8"/></g>
<g fill="#6a5a50"><ellipse cx="30" cy="88" rx="12" ry="10"/><ellipse cx="48" cy="82" rx="8" ry="6"/></g>
<g fill="#9a9c34"><ellipse cx="52" cy="66" rx="9" ry="7"/><ellipse cx="60" cy="62" rx="5" ry="4"/><ellipse cx="30" cy="52" rx="5" ry="3"/><ellipse cx="92" cy="54" rx="4" ry="3"/></g>
<g fill="#5a8430"><ellipse cx="4" cy="75" rx="9" ry="12"/><ellipse cx="8" cy="84" rx="8" ry="8"/><ellipse cx="32" cy="69" rx="4" ry="4"/></g>
<g fill="#a8862c"><ellipse cx="186" cy="92" rx="12" ry="8"/><ellipse cx="172" cy="98" rx="8" ry="6"/><ellipse cx="54" cy="100" rx="6" ry="12"/><ellipse cx="190" cy="56" rx="5" ry="4"/></g>
<g opacity=".8"><ellipse cx="48.5" cy="78.9" rx="3.1" ry="2.5" fill="#8a7a48"/><ellipse cx="189.6" cy="100.0" rx="2.5" ry="2.2" fill="#4e442c"/><ellipse cx="25.8" cy="57.5" rx="2.6" ry="2.2" fill="#6e6240"/><ellipse cx="198.7" cy="88.7" rx="2.8" ry="2.4" fill="#4e442c"/><ellipse cx="195.1" cy="90.8" rx="1.6" ry="1.5" fill="#7c6c40"/><ellipse cx="194.4" cy="91.5" rx="2.4" ry="1.6" fill="#86733a"/><ellipse cx="86.5" cy="51.6" rx="2.8" ry="2.4" fill="#8a7a48"/><ellipse cx="59.9" cy="89.8" rx="3.2" ry="2.2" fill="#6e6240"/><ellipse cx="94.8" cy="55.9" rx="2.6" ry="2.0" fill="#6a5a34"/><ellipse cx="139.8" cy="76.1" rx="3.2" ry="2.2" fill="#6a5a34"/><ellipse cx="1.1" cy="58.2" rx="2.3" ry="1.9" fill="#6a5a34"/><ellipse cx="102.8" cy="51.9" rx="1.7" ry="1.0" fill="#5a4a2c"/><ellipse cx="30.5" cy="84.5" rx="2.0" ry="1.2" fill="#6a5a34"/><ellipse cx="33.7" cy="83.5" rx="2.6" ry="2.1" fill="#8a7a48"/><ellipse cx="21.7" cy="107.3" rx="2.3" ry="1.7" fill="#8a7a48"/><ellipse cx="127.9" cy="56.0" rx="3.4" ry="2.5" fill="#4e442c"/><ellipse cx="46.1" cy="63.3" rx="3.2" ry="2.7" fill="#6e6240"/><ellipse cx="58.4" cy="55.6" rx="2.0" ry="1.7" fill="#86733a"/><ellipse cx="158.0" cy="65.9" rx="1.9" ry="1.3" fill="#6e6240"/><ellipse cx="177.5" cy="97.0" rx="1.8" ry="1.4" fill="#4e442c"/><ellipse cx="190.7" cy="95.6" rx="2.8" ry="2.7" fill="#5a4a2c"/><ellipse cx="185.0" cy="95.2" rx="3.0" ry="2.0" fill="#4e442c"/><ellipse cx="47.2" cy="81.6" rx="2.3" ry="1.5" fill="#6a5a34"/><ellipse cx="191.6" cy="88.6" rx="2.9" ry="2.2" fill="#5a4a2c"/><ellipse cx="174.9" cy="90.5" rx="3.4" ry="2.2" fill="#6a5a34"/><ellipse cx="4.2" cy="84.6" rx="2.7" ry="1.9" fill="#5a4a2c"/><ellipse cx="99.9" cy="53.9" rx="2.3" ry="1.4" fill="#7c6c40"/><ellipse cx="95.6" cy="61.7" rx="3.4" ry="2.6" fill="#6a5a34"/><ellipse cx="54.1" cy="88.4" rx="2.9" ry="2.8" fill="#4e442c"/><ellipse cx="186.8" cy="90.4" rx="3.3" ry="2.4" fill="#6e6240"/><ellipse cx="71.6" cy="57.3" rx="2.5" ry="1.8" fill="#6e6240"/><ellipse cx="108.2" cy="56.0" rx="2.6" ry="1.6" fill="#6e6240"/><ellipse cx="19.4" cy="110.7" rx="3.4" ry="2.5" fill="#5a4a2c"/><ellipse cx="14.0" cy="115.6" rx="3.2" ry="2.0" fill="#86733a"/><ellipse cx="8.7" cy="84.4" rx="2.3" ry="1.4" fill="#4e442c"/><ellipse cx="68.0" cy="60.6" rx="3.5" ry="3.1" fill="#8a7a48"/><ellipse cx="52.9" cy="84.6" rx="2.4" ry="2.3" fill="#8a7a48"/><ellipse cx="11.5" cy="55.0" rx="2.1" ry="1.7" fill="#6a5a34"/><ellipse cx="109.7" cy="55.3" rx="3.1" ry="3.0" fill="#6e6240"/><ellipse cx="181.4" cy="53.9" rx="1.8" ry="1.2" fill="#4e442c"/><ellipse cx="100.4" cy="51.3" rx="3.4" ry="3.2" fill="#8a7a48"/><ellipse cx="150.9" cy="68.2" rx="2.8" ry="2.6" fill="#86733a"/><ellipse cx="113.6" cy="52.6" rx="2.7" ry="1.8" fill="#5a4a2c"/><ellipse cx="72.6" cy="56.2" rx="3.2" ry="2.0" fill="#6e6240"/><ellipse cx="170.0" cy="55.4" rx="2.4" ry="2.3" fill="#7c6c40"/><ellipse cx="15.2" cy="82.0" rx="2.1" ry="2.0" fill="#86733a"/><ellipse cx="181.3" cy="91.0" rx="1.6" ry="1.3" fill="#86733a"/><ellipse cx="15.7" cy="106.2" rx="2.1" ry="1.7" fill="#86733a"/><ellipse cx="29.8" cy="121.1" rx="1.5" ry="1.1" fill="#86733a"/><ellipse cx="108.6" cy="48.4" rx="1.7" ry="1.5" fill="#6a5a34"/><ellipse cx="11.5" cy="109.4" rx="1.7" ry="1.1" fill="#7c6c40"/><ellipse cx="29.0" cy="103.5" rx="3.0" ry="2.7" fill="#4e442c"/><ellipse cx="103.9" cy="63.0" rx="2.6" ry="2.1" fill="#4e442c"/><ellipse cx="79.1" cy="60.4" rx="3.3" ry="2.5" fill="#6a5a34"/><ellipse cx="8.7" cy="120.2" rx="1.9" ry="1.4" fill="#6a5a34"/><ellipse cx="179.3" cy="83.0" rx="3.1" ry="2.5" fill="#5a4a2c"/><ellipse cx="26.9" cy="114.6" rx="3.2" ry="2.8" fill="#86733a"/><ellipse cx="27.7" cy="119.1" rx="2.3" ry="2.3" fill="#6a5a34"/><ellipse cx="198.4" cy="88.3" rx="2.0" ry="1.9" fill="#6e6240"/><ellipse cx="158.5" cy="61.9" rx="2.2" ry="2.0" fill="#8a7a48"/><ellipse cx="42.3" cy="86.4" rx="3.2" ry="3.0" fill="#8a7a48"/><ellipse cx="75.7" cy="54.6" rx="3.3" ry="2.2" fill="#8a7a48"/><ellipse cx="193.2" cy="84.9" rx="2.9" ry="2.8" fill="#8a7a48"/><ellipse cx="8.1" cy="83.7" rx="3.0" ry="2.4" fill="#8a7a48"/><ellipse cx="177.4" cy="47.6" rx="1.8" ry="1.7" fill="#4e442c"/><ellipse cx="184.5" cy="99.8" rx="3.4" ry="3.3" fill="#86733a"/><ellipse cx="96.2" cy="58.8" rx="2.6" ry="2.1" fill="#5a4a2c"/><ellipse cx="91.4" cy="57.4" rx="1.5" ry="0.9" fill="#8a7a48"/><ellipse cx="14.8" cy="55.2" rx="3.1" ry="2.0" fill="#4e442c"/><ellipse cx="36.3" cy="53.1" rx="2.6" ry="2.5" fill="#8a7a48"/><ellipse cx="27.5" cy="100.9" rx="1.8" ry="1.7" fill="#8a7a48"/><ellipse cx="20.2" cy="89.2" rx="2.3" ry="2.3" fill="#6a5a34"/><ellipse cx="91.2" cy="48.4" rx="1.6" ry="1.1" fill="#7c6c40"/><ellipse cx="16.0" cy="125.0" rx="2.0" ry="1.3" fill="#8a7a48"/><ellipse cx="2.3" cy="109.5" rx="2.7" ry="1.9" fill="#6e6240"/><ellipse cx="186.5" cy="88.7" rx="2.8" ry="2.2" fill="#86733a"/><ellipse cx="72.9" cy="54.2" rx="2.6" ry="2.1" fill="#7c6c40"/><ellipse cx="175.1" cy="82.8" rx="2.0" ry="1.7" fill="#6e6240"/><ellipse cx="180.6" cy="54.9" rx="2.1" ry="1.5" fill="#7c6c40"/><ellipse cx="108.4" cy="54.1" rx="2.0" ry="1.3" fill="#6e6240"/><ellipse cx="52.4" cy="98.4" rx="2.3" ry="2.1" fill="#86733a"/><ellipse cx="79.7" cy="59.8" rx="1.5" ry="1.3" fill="#7c6c40"/><ellipse cx="193.4" cy="50.6" rx="1.7" ry="1.5" fill="#4e442c"/><ellipse cx="136.9" cy="61.7" rx="1.9" ry="1.5" fill="#6a5a34"/><ellipse cx="68.9" cy="58.1" rx="2.5" ry="2.0" fill="#4e442c"/><ellipse cx="105.4" cy="59.3" rx="3.2" ry="3.1" fill="#5a4a2c"/><ellipse cx="27.1" cy="53.9" rx="2.9" ry="2.6" fill="#6a5a34"/><ellipse cx="147.8" cy="71.1" rx="2.2" ry="1.9" fill="#7c6c40"/><ellipse cx="34.6" cy="54.2" rx="1.9" ry="1.5" fill="#8a7a48"/><ellipse cx="5.5" cy="123.4" rx="2.7" ry="2.2" fill="#6a5a34"/><ellipse cx="34.8" cy="59.1" rx="3.2" ry="3.1" fill="#86733a"/><ellipse cx="18.1" cy="87.0" rx="2.7" ry="2.5" fill="#5a4a2c"/><ellipse cx="162.9" cy="69.4" rx="3.0" ry="2.8" fill="#7c6c40"/><ellipse cx="41.5" cy="96.8" rx="2.6" ry="2.3" fill="#5a4a2c"/><ellipse cx="78.8" cy="59.8" rx="1.6" ry="1.2" fill="#5a4a2c"/><ellipse cx="63.8" cy="56.5" rx="2.8" ry="1.7" fill="#4e442c"/><ellipse cx="191.1" cy="55.9" rx="2.2" ry="1.7" fill="#6e6240"/><ellipse cx="81.7" cy="55.0" rx="3.5" ry="2.4" fill="#6e6240"/><ellipse cx="42.9" cy="44.2" rx="1.5" ry="1.0" fill="#4e442c"/><ellipse cx="99.2" cy="61.1" rx="1.6" ry="1.4" fill="#7c6c40"/><ellipse cx="56.3" cy="59.5" rx="3.3" ry="2.7" fill="#4e442c"/><ellipse cx="52.1" cy="87.5" rx="3.5" ry="2.7" fill="#6e6240"/><ellipse cx="35.1" cy="119.3" rx="3.0" ry="2.3" fill="#6a5a34"/><ellipse cx="77.7" cy="61.2" rx="3.2" ry="2.7" fill="#4e442c"/><ellipse cx="14.6" cy="59.6" rx="2.1" ry="1.7" fill="#8a7a48"/><ellipse cx="141.8" cy="59.1" rx="2.0" ry="1.8" fill="#5a4a2c"/><ellipse cx="19.3" cy="116.4" rx="2.0" ry="1.7" fill="#6a5a34"/><ellipse cx="30.5" cy="80.0" rx="3.3" ry="2.5" fill="#6e6240"/><ellipse cx="198.6" cy="89.2" rx="1.6" ry="1.3" fill="#7c6c40"/><ellipse cx="29.8" cy="103.9" rx="1.6" ry="1.6" fill="#6a5a34"/><ellipse cx="27.0" cy="112.5" rx="3.4" ry="2.9" fill="#7c6c40"/><ellipse cx="64.6" cy="58.4" rx="1.7" ry="1.1" fill="#86733a"/><ellipse cx="189.8" cy="96.0" rx="1.8" ry="1.4" fill="#8a7a48"/><ellipse cx="147.0" cy="48.0" rx="2.2" ry="1.8" fill="#6e6240"/><ellipse cx="124.6" cy="54.0" rx="2.0" ry="1.6" fill="#6a5a34"/><ellipse cx="170.7" cy="45.0" rx="2.2" ry="1.9" fill="#5a4a2c"/><ellipse cx="4.5" cy="111.3" rx="2.8" ry="1.9" fill="#86733a"/><ellipse cx="75.8" cy="55.9" rx="1.9" ry="1.2" fill="#6e6240"/><ellipse cx="60.3" cy="56.4" rx="1.6" ry="1.0" fill="#6a5a34"/><ellipse cx="182.8" cy="100.3" rx="3.3" ry="2.7" fill="#7c6c40"/><ellipse cx="35.2" cy="114.0" rx="2.2" ry="1.6" fill="#5a4a2c"/><ellipse cx="33.7" cy="123.3" rx="3.1" ry="2.9" fill="#8a7a48"/><ellipse cx="191.4" cy="81.0" rx="2.4" ry="1.7" fill="#6e6240"/><ellipse cx="83.5" cy="60.7" rx="3.5" ry="2.5" fill="#5a4a2c"/><ellipse cx="24.3" cy="110.4" rx="2.8" ry="1.8" fill="#4e442c"/><ellipse cx="173.6" cy="65.0" rx="2.6" ry="2.4" fill="#8a7a48"/><ellipse cx="22.0" cy="103.4" rx="1.7" ry="1.6" fill="#7c6c40"/><ellipse cx="191.7" cy="93.2" rx="2.9" ry="2.2" fill="#6e6240"/><ellipse cx="104.7" cy="62.4" rx="2.2" ry="1.6" fill="#6a5a34"/><ellipse cx="3.9" cy="83.5" rx="3.4" ry="2.6" fill="#5a4a2c"/><ellipse cx="149.6" cy="64.7" rx="3.4" ry="3.3" fill="#6e6240"/><ellipse cx="123.6" cy="59.7" rx="1.5" ry="1.2" fill="#6e6240"/><ellipse cx="37.4" cy="76.8" rx="2.2" ry="1.8" fill="#8a7a48"/><ellipse cx="179.6" cy="88.1" rx="3.0" ry="2.2" fill="#86733a"/><ellipse cx="41.7" cy="58.8" rx="1.8" ry="1.8" fill="#5a4a2c"/><ellipse cx="27.8" cy="108.5" rx="2.7" ry="2.4" fill="#5a4a2c"/><ellipse cx="29.4" cy="61.4" rx="1.7" ry="1.1" fill="#5a4a2c"/><ellipse cx="16.1" cy="111.9" rx="3.1" ry="2.2" fill="#8a7a48"/><ellipse cx="71.5" cy="56.5" rx="2.2" ry="1.6" fill="#8a7a48"/><ellipse cx="171.9" cy="50.1" rx="1.8" ry="1.4" fill="#8a7a48"/><ellipse cx="35.5" cy="119.1" rx="1.6" ry="1.5" fill="#86733a"/><ellipse cx="19.2" cy="115.6" rx="2.3" ry="2.2" fill="#6a5a34"/><ellipse cx="178.6" cy="83.3" rx="2.9" ry="1.9" fill="#86733a"/><ellipse cx="42.8" cy="86.0" rx="1.8" ry="1.4" fill="#6e6240"/><ellipse cx="91.9" cy="60.5" rx="2.6" ry="2.5" fill="#5a4a2c"/><ellipse cx="6.4" cy="57.8" rx="2.1" ry="1.9" fill="#7c6c40"/><ellipse cx="122.2" cy="52.4" rx="1.5" ry="1.5" fill="#8a7a48"/><ellipse cx="33.2" cy="60.9" rx="2.2" ry="1.5" fill="#4e442c"/><ellipse cx="4.6" cy="116.5" rx="2.4" ry="1.8" fill="#5a4a2c"/><ellipse cx="141.9" cy="46.7" rx="2.6" ry="1.8" fill="#86733a"/><ellipse cx="45.1" cy="85.2" rx="2.6" ry="2.1" fill="#6a5a34"/><ellipse cx="88.7" cy="58.2" rx="1.8" ry="1.3" fill="#86733a"/><ellipse cx="188.4" cy="79.9" rx="3.1" ry="2.7" fill="#6a5a34"/><ellipse cx="121.9" cy="51.3" rx="3.3" ry="3.0" fill="#8a7a48"/><ellipse cx="1.9" cy="120.3" rx="2.3" ry="1.7" fill="#86733a"/><ellipse cx="190.6" cy="51.2" rx="1.8" ry="1.8" fill="#6e6240"/><ellipse cx="157.2" cy="61.5" rx="2.6" ry="1.6" fill="#7c6c40"/><ellipse cx="103.8" cy="53.9" rx="2.0" ry="1.7" fill="#6e6240"/><ellipse cx="27.0" cy="85.7" rx="3.0" ry="2.8" fill="#4e442c"/><ellipse cx="179.6" cy="63.1" rx="1.9" ry="1.2" fill="#6e6240"/><ellipse cx="35.7" cy="101.4" rx="2.6" ry="2.5" fill="#7c6c40"/><ellipse cx="156.3" cy="74.8" rx="2.6" ry="2.3" fill="#8a7a48"/><ellipse cx="18.9" cy="63.7" rx="1.7" ry="1.5" fill="#8a7a48"/><ellipse cx="39.6" cy="112.7" rx="2.8" ry="2.7" fill="#6a5a34"/><ellipse cx="17.3" cy="109.3" rx="2.6" ry="2.4" fill="#8a7a48"/><ellipse cx="24.6" cy="124.1" rx="2.1" ry="2.0" fill="#8a7a48"/><ellipse cx="16.2" cy="121.7" rx="2.3" ry="1.5" fill="#6e6240"/><ellipse cx="107.9" cy="62.5" rx="2.2" ry="1.8" fill="#5a4a2c"/><ellipse cx="10.6" cy="108.8" rx="2.3" ry="1.5" fill="#6a5a34"/><ellipse cx="61.5" cy="63.0" rx="1.9" ry="1.4" fill="#7c6c40"/><ellipse cx="22.5" cy="87.4" rx="2.0" ry="1.9" fill="#7c6c40"/><ellipse cx="23.3" cy="92.4" rx="3.3" ry="3.2" fill="#8a7a48"/><ellipse cx="84.2" cy="50.4" rx="3.1" ry="2.5" fill="#8a7a48"/><ellipse cx="11.7" cy="80.5" rx="2.7" ry="2.7" fill="#5a4a2c"/><ellipse cx="87.5" cy="50.7" rx="1.5" ry="1.0" fill="#5a4a2c"/><ellipse cx="158.5" cy="56.2" rx="2.3" ry="1.7" fill="#4e442c"/><ellipse cx="177.1" cy="46.7" rx="1.8" ry="1.5" fill="#86733a"/><ellipse cx="145.7" cy="58.1" rx="2.5" ry="2.1" fill="#7c6c40"/><ellipse cx="121.5" cy="55.5" rx="2.9" ry="2.9" fill="#86733a"/><ellipse cx="195.4" cy="86.8" rx="1.9" ry="1.2" fill="#6a5a34"/><ellipse cx="7.8" cy="83.8" rx="2.2" ry="1.6" fill="#86733a"/><ellipse cx="45.0" cy="82.8" rx="3.0" ry="2.8" fill="#7c6c40"/><ellipse cx="181.6" cy="89.1" rx="3.3" ry="3.2" fill="#7c6c40"/><ellipse cx="155.4" cy="57.4" rx="3.1" ry="2.8" fill="#5a4a2c"/><ellipse cx="166.5" cy="78.6" rx="3.2" ry="2.7" fill="#7c6c40"/><ellipse cx="15.6" cy="58.2" rx="3.1" ry="2.0" fill="#6e6240"/><ellipse cx="32.0" cy="105.6" rx="2.7" ry="2.5" fill="#6e6240"/><ellipse cx="54.0" cy="62.5" rx="1.6" ry="1.2" fill="#4e442c"/><ellipse cx="178.3" cy="93.9" rx="1.8" ry="1.5" fill="#7c6c40"/><ellipse cx="193.4" cy="68.4" rx="2.9" ry="1.9" fill="#86733a"/><ellipse cx="13.4" cy="83.5" rx="2.3" ry="2.2" fill="#4e442c"/><ellipse cx="185.6" cy="79.6" rx="2.5" ry="2.3" fill="#8a7a48"/><ellipse cx="7.8" cy="119.3" rx="2.6" ry="1.9" fill="#4e442c"/><ellipse cx="172.9" cy="94.7" rx="2.1" ry="1.5" fill="#6a5a34"/><ellipse cx="194.7" cy="84.0" rx="2.7" ry="2.5" fill="#86733a"/><ellipse cx="190.0" cy="85.9" rx="3.2" ry="2.6" fill="#7c6c40"/><ellipse cx="50.4" cy="88.1" rx="1.7" ry="1.4" fill="#7c6c40"/><ellipse cx="11.5" cy="118.6" rx="1.6" ry="1.6" fill="#6e6240"/><ellipse cx="9.0" cy="121.5" rx="2.6" ry="1.8" fill="#7c6c40"/><ellipse cx="13.2" cy="117.0" rx="1.6" ry="1.5" fill="#4e442c"/><ellipse cx="62.4" cy="49.9" rx="2.4" ry="1.7" fill="#5a4a2c"/><ellipse cx="178.9" cy="63.4" rx="2.4" ry="2.2" fill="#8a7a48"/><ellipse cx="45.8" cy="100.3" rx="2.0" ry="1.2" fill="#5a4a2c"/><ellipse cx="156.5" cy="76.5" rx="3.4" ry="2.7" fill="#86733a"/><ellipse cx="108.1" cy="63.1" rx="2.9" ry="2.0" fill="#6a5a34"/><ellipse cx="168.5" cy="60.4" rx="2.8" ry="2.8" fill="#6e6240"/><ellipse cx="85.7" cy="55.2" rx="3.4" ry="2.9" fill="#6a5a34"/><ellipse cx="162.1" cy="49.8" rx="3.3" ry="2.5" fill="#86733a"/><ellipse cx="85.1" cy="62.7" rx="3.1" ry="1.9" fill="#8a7a48"/><ellipse cx="106.7" cy="53.9" rx="2.9" ry="1.9" fill="#5a4a2c"/><ellipse cx="83.7" cy="56.0" rx="2.0" ry="1.8" fill="#86733a"/><ellipse cx="23.8" cy="52.9" rx="2.1" ry="1.8" fill="#7c6c40"/><ellipse cx="183.7" cy="75.3" rx="2.4" ry="1.9" fill="#6a5a34"/><ellipse cx="196.9" cy="95.1" rx="1.5" ry="1.1" fill="#4e442c"/><ellipse cx="142.3" cy="69.7" rx="1.8" ry="1.2" fill="#86733a"/><ellipse cx="96.0" cy="61.8" rx="1.9" ry="1.9" fill="#7c6c40"/><ellipse cx="12.4" cy="48.0" rx="2.7" ry="2.6" fill="#6a5a34"/><ellipse cx="37.1" cy="91.5" rx="3.1" ry="2.2" fill="#5a4a2c"/><ellipse cx="34.4" cy="78.7" rx="2.5" ry="2.1" fill="#86733a"/><ellipse cx="184.6" cy="81.3" rx="2.7" ry="1.8" fill="#86733a"/><ellipse cx="174.5" cy="93.9" rx="2.6" ry="2.4" fill="#5a4a2c"/><ellipse cx="21.4" cy="123.4" rx="1.9" ry="1.6" fill="#4e442c"/><ellipse cx="190.6" cy="65.7" rx="2.9" ry="2.3" fill="#4e442c"/><ellipse cx="89.4" cy="61.6" rx="2.7" ry="2.1" fill="#86733a"/><ellipse cx="25.3" cy="75.4" rx="1.6" ry="1.5" fill="#6a5a34"/><ellipse cx="178.2" cy="83.0" rx="2.9" ry="1.9" fill="#4e442c"/><ellipse cx="139.7" cy="70.3" rx="3.1" ry="2.5" fill="#6e6240"/><ellipse cx="167.3" cy="46.5" rx="2.8" ry="1.9" fill="#4e442c"/><ellipse cx="165.3" cy="77.5" rx="2.8" ry="2.6" fill="#4e442c"/><ellipse cx="29.0" cy="63.5" rx="2.9" ry="2.9" fill="#6e6240"/><ellipse cx="64.0" cy="63.5" rx="2.7" ry="1.8" fill="#7c6c40"/><ellipse cx="0.5" cy="87.8" rx="1.5" ry="1.4" fill="#8a7a48"/><ellipse cx="118.8" cy="59.2" rx="2.4" ry="2.4" fill="#6a5a34"/><ellipse cx="39.2" cy="114.7" rx="3.0" ry="2.1" fill="#7c6c40"/><ellipse cx="21.4" cy="54.1" rx="2.4" ry="1.8" fill="#7c6c40"/><ellipse cx="195.8" cy="55.0" rx="1.9" ry="1.5" fill="#7c6c40"/><ellipse cx="38.9" cy="114.7" rx="2.6" ry="2.5" fill="#86733a"/><ellipse cx="81.7" cy="57.2" rx="3.2" ry="2.4" fill="#8a7a48"/><ellipse cx="45.1" cy="62.9" rx="1.9" ry="1.7" fill="#4e442c"/><ellipse cx="34.0" cy="97.1" rx="2.4" ry="1.9" fill="#5a4a2c"/><ellipse cx="54.7" cy="89.4" rx="3.2" ry="2.6" fill="#7c6c40"/><ellipse cx="52.4" cy="95.9" rx="2.2" ry="1.9" fill="#5a4a2c"/><ellipse cx="188.0" cy="95.6" rx="2.3" ry="2.0" fill="#6e6240"/><ellipse cx="171.5" cy="65.2" rx="3.0" ry="2.2" fill="#86733a"/><ellipse cx="95.3" cy="48.5" rx="1.5" ry="1.4" fill="#5a4a2c"/><ellipse cx="54.4" cy="97.5" rx="2.2" ry="2.0" fill="#86733a"/><ellipse cx="33.0" cy="117.5" rx="2.0" ry="1.3" fill="#6a5a34"/><ellipse cx="182.9" cy="88.8" rx="2.1" ry="1.7" fill="#8a7a48"/><ellipse cx="32.1" cy="122.6" rx="2.0" ry="1.6" fill="#6e6240"/><ellipse cx="38.2" cy="95.8" rx="2.1" ry="1.6" fill="#6e6240"/><ellipse cx="78.9" cy="60.9" rx="2.0" ry="1.5" fill="#5a4a2c"/><ellipse cx="185.6" cy="92.4" rx="1.5" ry="1.2" fill="#6e6240"/><ellipse cx="54.3" cy="44.9" rx="2.1" ry="1.3" fill="#6e6240"/><ellipse cx="83.3" cy="54.3" rx="1.7" ry="1.7" fill="#86733a"/><ellipse cx="103.2" cy="52.0" rx="3.1" ry="2.3" fill="#6a5a34"/><ellipse cx="1.5" cy="56.7" rx="2.1" ry="1.5" fill="#6e6240"/><ellipse cx="112.0" cy="54.4" rx="3.0" ry="2.6" fill="#5a4a2c"/><ellipse cx="74.4" cy="55.1" rx="3.3" ry="2.2" fill="#86733a"/><ellipse cx="184.4" cy="101.1" rx="2.1" ry="2.0" fill="#6a5a34"/><ellipse cx="33.4" cy="58.3" rx="2.3" ry="1.7" fill="#6a5a34"/></g><g opacity=".85"><ellipse cx="52.4" cy="109.7" rx="2.4" ry="1.5" fill="#9a9c34"/><ellipse cx="182.7" cy="95.8" rx="1.6" ry="1.4" fill="#a8862c"/><ellipse cx="166.1" cy="94.8" rx="1.7" ry="1.6" fill="#a8862c"/><ellipse cx="154.1" cy="136.7" rx="2.1" ry="1.5" fill="#9a9c34"/><ellipse cx="175.6" cy="95.9" rx="2.5" ry="2.3" fill="#9a9c34"/><ellipse cx="128.9" cy="134.8" rx="1.7" ry="1.1" fill="#9a9c34"/><ellipse cx="29.6" cy="53.5" rx="1.5" ry="1.5" fill="#9a9c34"/><ellipse cx="177.9" cy="98.1" rx="2.4" ry="2.0" fill="#9a9c34"/><ellipse cx="57.7" cy="93.4" rx="2.3" ry="1.7" fill="#b09030"/><ellipse cx="48.7" cy="72.2" rx="2.2" ry="2.1" fill="#a8862c"/><ellipse cx="32.5" cy="54.0" rx="1.9" ry="1.4" fill="#b09030"/><ellipse cx="179.4" cy="96.2" rx="1.9" ry="1.4" fill="#a8862c"/><ellipse cx="146.3" cy="140.2" rx="1.4" ry="1.4" fill="#9a9c34"/><ellipse cx="56.2" cy="63.1" rx="2.4" ry="1.5" fill="#8a8c30"/><ellipse cx="57.7" cy="91.7" rx="1.3" ry="1.0" fill="#b09030"/><ellipse cx="143.6" cy="130.2" rx="2.2" ry="1.6" fill="#b09030"/><ellipse cx="134.6" cy="139.1" rx="2.3" ry="1.9" fill="#a8862c"/><ellipse cx="170.2" cy="96.6" rx="2.2" ry="2.1" fill="#b09030"/><ellipse cx="31.4" cy="54.3" rx="1.6" ry="1.6" fill="#a8862c"/><ellipse cx="165.3" cy="95.5" rx="2.6" ry="1.8" fill="#a8862c"/><ellipse cx="177.7" cy="94.7" rx="1.8" ry="1.1" fill="#a8862c"/><ellipse cx="158.7" cy="134.9" rx="1.5" ry="1.3" fill="#b09030"/><ellipse cx="44.1" cy="70.3" rx="2.4" ry="1.6" fill="#8a8c30"/><ellipse cx="48.7" cy="72.7" rx="2.4" ry="1.6" fill="#b09030"/><ellipse cx="127.1" cy="130.3" rx="2.6" ry="2.2" fill="#8a8c30"/><ellipse cx="24.9" cy="51.2" rx="1.4" ry="1.3" fill="#a8862c"/><ellipse cx="56.7" cy="97.6" rx="1.9" ry="1.2" fill="#9a9c34"/><ellipse cx="51.0" cy="72.0" rx="1.6" ry="1.1" fill="#8a8c30"/><ellipse cx="32.3" cy="52.7" rx="2.0" ry="1.3" fill="#9a9c34"/><ellipse cx="56.3" cy="63.2" rx="1.3" ry="1.0" fill="#a8862c"/><ellipse cx="32.7" cy="52.0" rx="2.4" ry="1.5" fill="#8a8c30"/><ellipse cx="188.6" cy="87.9" rx="1.3" ry="0.9" fill="#b09030"/><ellipse cx="193.9" cy="86.8" rx="1.8" ry="1.2" fill="#9a9c34"/><ellipse cx="58.9" cy="64.0" rx="2.1" ry="1.6" fill="#b09030"/><ellipse cx="52.4" cy="108.0" rx="1.2" ry="0.8" fill="#a8862c"/><ellipse cx="194.7" cy="92.4" rx="2.3" ry="1.8" fill="#8a8c30"/><ellipse cx="56.5" cy="90.7" rx="2.6" ry="2.5" fill="#9a9c34"/><ellipse cx="166.5" cy="100.4" rx="1.6" ry="0.9" fill="#9a9c34"/><ellipse cx="30.5" cy="53.9" rx="1.7" ry="1.6" fill="#b09030"/><ellipse cx="180.4" cy="88.6" rx="1.6" ry="1.6" fill="#9a9c34"/><ellipse cx="180.9" cy="90.0" rx="1.5" ry="1.0" fill="#a8862c"/><ellipse cx="147.5" cy="138.2" rx="1.5" ry="1.0" fill="#b09030"/><ellipse cx="28.2" cy="52.9" rx="1.2" ry="1.0" fill="#8a8c30"/><ellipse cx="178.5" cy="100.7" rx="2.4" ry="1.4" fill="#a8862c"/><ellipse cx="27.8" cy="54.4" rx="1.4" ry="1.0" fill="#b09030"/><ellipse cx="24.7" cy="52.0" rx="2.4" ry="1.5" fill="#b09030"/><ellipse cx="176.3" cy="97.1" rx="1.5" ry="1.2" fill="#b09030"/><ellipse cx="56.8" cy="71.1" rx="1.7" ry="1.2" fill="#9a9c34"/><ellipse cx="51.8" cy="106.6" rx="2.2" ry="1.8" fill="#8a8c30"/><ellipse cx="55.9" cy="98.1" rx="2.2" ry="1.7" fill="#8a8c30"/></g><g opacity=".85"><ellipse cx="21.2" cy="137.6" rx="1.9" ry="1.5" fill="#4e6c2a"/><ellipse cx="-2.0" cy="76.3" rx="2.0" ry="1.7" fill="#4e6c2a"/><ellipse cx="39.9" cy="140.7" rx="3.2" ry="2.2" fill="#3e5a24"/><ellipse cx="44.7" cy="133.5" rx="3.0" ry="2.7" fill="#5a8430"/><ellipse cx="38.6" cy="137.3" rx="3.1" ry="2.9" fill="#5a8430"/><ellipse cx="-4.9" cy="77.0" rx="1.6" ry="1.4" fill="#4e6c2a"/><ellipse cx="20.3" cy="133.2" rx="1.9" ry="1.8" fill="#4e6c2a"/><ellipse cx="-4.8" cy="78.9" rx="1.9" ry="1.6" fill="#4e6c2a"/><ellipse cx="35.8" cy="131.7" rx="2.3" ry="2.1" fill="#4e6c2a"/><ellipse cx="8.3" cy="127.6" rx="3.1" ry="2.1" fill="#3e5a24"/><ellipse cx="43.4" cy="135.6" rx="3.0" ry="1.9" fill="#3e5a24"/><ellipse cx="2.8" cy="76.4" rx="2.7" ry="2.6" fill="#6a8a34"/><ellipse cx="10.2" cy="83.9" rx="2.4" ry="2.3" fill="#3e5a24"/><ellipse cx="12.6" cy="126.7" rx="3.2" ry="1.9" fill="#6a8a34"/><ellipse cx="26.3" cy="123.5" rx="3.1" ry="2.7" fill="#5a8430"/><ellipse cx="4.4" cy="72.2" rx="2.5" ry="1.6" fill="#4e6c2a"/><ellipse cx="3.7" cy="86.2" rx="2.6" ry="1.7" fill="#3e5a24"/><ellipse cx="1.2" cy="66.8" rx="2.1" ry="1.9" fill="#3e5a24"/><ellipse cx="8.3" cy="86.8" rx="2.2" ry="1.6" fill="#6a8a34"/><ellipse cx="-4.7" cy="77.4" rx="2.1" ry="1.4" fill="#6a8a34"/><ellipse cx="8.3" cy="130.1" rx="3.0" ry="2.6" fill="#4e6c2a"/><ellipse cx="34.1" cy="142.2" rx="1.8" ry="1.5" fill="#6a8a34"/><ellipse cx="24.3" cy="128.4" rx="2.1" ry="1.8" fill="#6a8a34"/><ellipse cx="27.6" cy="143.6" rx="2.6" ry="1.6" fill="#5a8430"/><ellipse cx="44.8" cy="142.4" rx="1.9" ry="1.4" fill="#6a8a34"/><ellipse cx="7.6" cy="66.3" rx="2.5" ry="2.0" fill="#4e6c2a"/><ellipse cx="8.6" cy="82.5" rx="2.1" ry="2.1" fill="#3e5a24"/><ellipse cx="2.2" cy="73.2" rx="1.6" ry="1.3" fill="#5a8430"/><ellipse cx="16.0" cy="135.2" rx="1.6" ry="1.6" fill="#5a8430"/><ellipse cx="23.2" cy="136.3" rx="2.4" ry="2.4" fill="#4e6c2a"/><ellipse cx="11.3" cy="78.0" rx="2.8" ry="2.3" fill="#5a8430"/><ellipse cx="7.4" cy="133.3" rx="1.7" ry="1.1" fill="#6a8a34"/><ellipse cx="12.8" cy="78.3" rx="2.7" ry="2.3" fill="#3e5a24"/><ellipse cx="-2.3" cy="129.4" rx="2.2" ry="1.4" fill="#5a8430"/><ellipse cx="49.8" cy="130.1" rx="1.5" ry="1.2" fill="#3e5a24"/><ellipse cx="3.1" cy="127.4" rx="2.8" ry="2.8" fill="#3e5a24"/><ellipse cx="10.8" cy="132.8" rx="1.7" ry="1.4" fill="#4e6c2a"/><ellipse cx="27.2" cy="144.2" rx="1.9" ry="1.5" fill="#6a8a34"/><ellipse cx="0.9" cy="74.9" rx="1.7" ry="1.6" fill="#5a8430"/><ellipse cx="6.3" cy="68.8" rx="1.7" ry="1.3" fill="#5a8430"/><ellipse cx="13.4" cy="126.3" rx="1.7" ry="1.2" fill="#4e6c2a"/><ellipse cx="3.3" cy="66.2" rx="1.8" ry="1.3" fill="#4e6c2a"/><ellipse cx="25.8" cy="145.2" rx="2.6" ry="2.0" fill="#4e6c2a"/><ellipse cx="41.0" cy="136.9" rx="1.7" ry="1.2" fill="#6a8a34"/><ellipse cx="37.7" cy="145.5" rx="2.5" ry="2.0" fill="#5a8430"/><ellipse cx="8.5" cy="126.8" rx="2.6" ry="2.3" fill="#3e5a24"/><ellipse cx="33.1" cy="137.4" rx="2.8" ry="2.1" fill="#6a8a34"/><ellipse cx="28.6" cy="137.5" rx="2.0" ry="1.3" fill="#4e6c2a"/><ellipse cx="19.9" cy="131.8" rx="1.9" ry="1.7" fill="#4e6c2a"/><ellipse cx="1.5" cy="87.0" rx="1.9" ry="1.7" fill="#6a8a34"/><ellipse cx="15.6" cy="140.5" rx="1.5" ry="1.5" fill="#3e5a24"/><ellipse cx="48.2" cy="131.7" rx="2.9" ry="2.5" fill="#5a8430"/><ellipse cx="9.6" cy="129.3" rx="1.7" ry="1.1" fill="#3e5a24"/><ellipse cx="5.6" cy="88.5" rx="2.9" ry="2.5" fill="#6a8a34"/><ellipse cx="23.3" cy="137.7" rx="2.7" ry="2.0" fill="#4e6c2a"/><ellipse cx="6.5" cy="71.0" rx="2.0" ry="1.9" fill="#5a8430"/><ellipse cx="4.2" cy="136.8" rx="2.3" ry="2.0" fill="#6a8a34"/><ellipse cx="9.4" cy="132.0" rx="2.7" ry="2.3" fill="#5a8430"/><ellipse cx="6.8" cy="69.3" rx="2.1" ry="1.4" fill="#4e6c2a"/><ellipse cx="-3.3" cy="82.4" rx="2.1" ry="1.9" fill="#6a8a34"/></g><g opacity=".8"><ellipse cx="130.4" cy="137.5" rx="2.4" ry="2.3" fill="#6a5a4e"/><ellipse cx="121.3" cy="136.8" rx="1.4" ry="1.0" fill="#6a5a4e"/><ellipse cx="38.6" cy="85.9" rx="2.7" ry="1.7" fill="#6a5a4e"/><ellipse cx="116.1" cy="139.0" rx="1.4" ry="1.1" fill="#7a6a5c"/><ellipse cx="166.9" cy="127.6" rx="1.5" ry="1.5" fill="#5a4c42"/><ellipse cx="116.8" cy="141.7" rx="2.0" ry="1.3" fill="#7a6a5c"/><ellipse cx="36.5" cy="81.1" rx="1.7" ry="1.3" fill="#6a5a4e"/><ellipse cx="142.2" cy="128.5" rx="2.5" ry="1.9" fill="#5a4c42"/><ellipse cx="23.1" cy="84.4" rx="2.4" ry="1.9" fill="#6a5a4e"/><ellipse cx="121.1" cy="143.7" rx="1.6" ry="1.2" fill="#7a6a5c"/><ellipse cx="120.5" cy="138.8" rx="1.3" ry="1.0" fill="#7a6a5c"/><ellipse cx="32.6" cy="97.3" rx="1.3" ry="1.3" fill="#6a5a4e"/><ellipse cx="21.9" cy="89.9" rx="1.6" ry="1.0" fill="#5a4c42"/><ellipse cx="121.1" cy="140.0" rx="2.8" ry="2.3" fill="#7a6a5c"/><ellipse cx="21.6" cy="88.4" rx="1.9" ry="1.8" fill="#7a6a5c"/><ellipse cx="150.2" cy="138.3" rx="2.8" ry="2.5" fill="#5a4c42"/><ellipse cx="131.3" cy="143.0" rx="2.1" ry="1.9" fill="#7a6a5c"/><ellipse cx="131.9" cy="142.8" rx="2.5" ry="2.3" fill="#5a4c42"/><ellipse cx="34.0" cy="87.6" rx="1.8" ry="1.4" fill="#6a5a4e"/><ellipse cx="122.4" cy="137.7" rx="2.1" ry="1.7" fill="#7a6a5c"/><ellipse cx="133.8" cy="140.8" rx="2.7" ry="2.6" fill="#6a5a4e"/><ellipse cx="157.1" cy="126.7" rx="1.4" ry="1.2" fill="#6a5a4e"/><ellipse cx="35.4" cy="95.4" rx="2.3" ry="2.1" fill="#5a4c42"/><ellipse cx="122.7" cy="143.1" rx="2.4" ry="2.2" fill="#5a4c42"/><ellipse cx="131.9" cy="135.1" rx="1.8" ry="1.7" fill="#6a5a4e"/><ellipse cx="28.7" cy="96.5" rx="2.6" ry="2.6" fill="#6a5a4e"/><ellipse cx="131.1" cy="129.2" rx="2.4" ry="2.3" fill="#7a6a5c"/><ellipse cx="169.7" cy="129.6" rx="1.5" ry="1.1" fill="#7a6a5c"/><ellipse cx="166.6" cy="137.4" rx="1.3" ry="1.0" fill="#6a5a4e"/><ellipse cx="168.1" cy="133.0" rx="2.6" ry="2.1" fill="#5a4c42"/><ellipse cx="120.8" cy="139.6" rx="2.0" ry="1.7" fill="#7a6a5c"/><ellipse cx="155.1" cy="131.6" rx="1.4" ry="0.9" fill="#6a5a4e"/><ellipse cx="134.5" cy="140.9" rx="2.6" ry="1.7" fill="#6a5a4e"/><ellipse cx="124.8" cy="142.3" rx="1.6" ry="1.6" fill="#6a5a4e"/><ellipse cx="163.4" cy="125.7" rx="1.2" ry="1.1" fill="#7a6a5c"/><ellipse cx="19.8" cy="83.9" rx="1.7" ry="1.1" fill="#6a5a4e"/><ellipse cx="36.3" cy="96.0" rx="1.4" ry="1.3" fill="#7a6a5c"/><ellipse cx="142.7" cy="136.2" rx="1.5" ry="1.2" fill="#5a4c42"/><ellipse cx="31.0" cy="79.9" rx="1.3" ry="0.8" fill="#7a6a5c"/><ellipse cx="169.8" cy="132.5" rx="1.9" ry="1.3" fill="#7a6a5c"/><ellipse cx="133.7" cy="140.4" rx="1.6" ry="1.2" fill="#5a4c42"/><ellipse cx="25.0" cy="95.1" rx="1.9" ry="1.9" fill="#6a5a4e"/><ellipse cx="126.7" cy="141.7" rx="1.6" ry="1.1" fill="#7a6a5c"/><ellipse cx="128.3" cy="143.8" rx="2.2" ry="1.8" fill="#5a4c42"/><ellipse cx="123.7" cy="139.7" rx="1.7" ry="1.2" fill="#6a5a4e"/><ellipse cx="124.7" cy="137.7" rx="1.3" ry="1.0" fill="#6a5a4e"/><ellipse cx="143.8" cy="126.8" rx="1.9" ry="1.5" fill="#6a5a4e"/><ellipse cx="141.0" cy="138.8" rx="2.7" ry="2.7" fill="#7a6a5c"/><ellipse cx="127.2" cy="135.7" rx="1.7" ry="1.3" fill="#6a5a4e"/><ellipse cx="116.0" cy="138.1" rx="1.3" ry="0.8" fill="#6a5a4e"/></g>
<!-- dark house left -->
<polygon points="8,66 22,60 38,65 38,72 10,74" fill="#45404a"/>
<rect x="14" y="69" width="24" height="5" fill="#8a7050"/>
<!-- road -->
<polygon points="0,86 6,88 34,112 58,124 60,130 30,116 0,94" fill="#a8a098"/>
<polygon points="55,122 80,134 130,126 165,112 172,118 150,145 60,145" fill="#8c8884"/>
<polygon points="164,96 184,84 184,86 166,98" fill="#a0a4a8"/>
<!-- bottom-left vegetation -->
<g fill="#4e6c2a"><ellipse cx="34" cy="134" rx="20" ry="14"/><ellipse cx="6" cy="128" rx="10" ry="10"/></g>
<g fill="#6a8a34"><ellipse cx="30" cy="130" rx="10" ry="6"/></g>
<g fill="#6e4e2c"><ellipse cx="10" cy="108" rx="10" ry="9"/><ellipse cx="4" cy="140" rx="8" ry="6"/></g>
<!-- bare trees bottom -->
<g fill="#6a5a4e" opacity=".9"><ellipse cx="150" cy="134" rx="22" ry="12"/><ellipse cx="125" cy="140" rx="10" ry="6"/></g>
<!-- main building -->
<polygon points="60,72 77,83 77,128 62,114" fill="#7c5034"/>
<g fill="#3a2c24"><polygon points="60,78 77,89 77,93 60,82"/><polygon points="60,87 77,98 77,102 60,91"/><polygon points="60,96 77,107 77,111 60,100"/><polygon points="61,105 77,116 77,120 61,109"/></g>
<polygon points="77,83 103,80 103,131 77,128" fill="#e6e2de"/>
<polygon points="103,80 163,73 163,118 103,131" fill="#e2deda"/>
<!-- red stripes front-left -->
<g fill="#d85450"><polygon points="80,87 102,86 102,93 80,94"/><polygon points="80,97 102,96 102,103 80,104"/><polygon points="80,115 102,114 102,121 80,122"/><polygon points="80,124 102,123 102,128 80,128"/></g>
<!-- red columns -->
<polygon points="103,81 115,79.500 115,128.500 103,131" fill="#dc5654"/>
<polygon points="136,77 148,75.500 148,121.500 136,124" fill="#dc5654"/>
<!-- wood balconies -->
<polygon points="115,80 136,77.500 136,124 115,128.500" fill="#3c2e28"/>
<g fill="#8a5a38"><polygon points="115,86 136,83.500 136,89 115,91.500"/><polygon points="115,95 136,92.500 136,98 115,100.500"/><polygon points="115,104 136,101.500 136,107 115,109.500"/><polygon points="115,113 136,110.500 136,116 115,118.500"/></g>
<!-- right part red stripes -->
<g fill="#d85450"><polygon points="148,96 161,94.500 161,101 148,102.500"/><polygon points="148,112 161,110 161,114 148,116"/></g>
<!-- windows -->
<g fill="#26262a"><rect x="96" y="86" width="4" height="4"/><rect x="96" y="95" width="4" height="4"/><rect x="96" y="104" width="4" height="4"/><rect x="96" y="113" width="4" height="4"/><rect x="96" y="121.500" width="4" height="4"/>
<rect x="106" y="86" width="4" height="5.500"/><rect x="106" y="95" width="4" height="5.500"/><rect x="106" y="104" width="4" height="5.500"/><rect x="106" y="113" width="4" height="5.500"/><rect x="106" y="122" width="4" height="5.500"/>
<rect x="140" y="82" width="3.500" height="5"/><rect x="140" y="91" width="3.500" height="5"/><rect x="140" y="100" width="3.500" height="5"/><rect x="140" y="108" width="3.500" height="5"/><rect x="140" y="116" width="3.500" height="5"/>
<rect x="78" y="86" width="1.600" height="6"/><rect x="78" y="95" width="1.600" height="6"/><rect x="78" y="104" width="1.600" height="6"/><rect x="78" y="113" width="1.600" height="6"/></g>
<g fill="#7a6a48"><rect x="150" y="80" width="2.500" height="6"/><rect x="155" y="79.500" width="2.500" height="6"/><rect x="150" y="89" width="2.500" height="5.500"/><rect x="155" y="88" width="2.500" height="5.500"/><rect x="150" y="104" width="2.500" height="5.500"/><rect x="155" y="103" width="2.500" height="5.500"/></g>
<!-- roof -->
<polygon points="59.500,71 133,56 163.500,73 102,80.500 77,83.500" fill="#cab8a4"/>
<polygon points="59.500,71 133,56 135,57 62,72.500" fill="#3a3836"/>
<polygon points="133,56 163.500,73 162,73.500 132,57.500" fill="#4a4642"/>
<g fill="#ece8e4"><rect x="99" y="64" width="4" height="12"/><rect x="103" y="71" width="10" height="6"/><rect x="82" y="65" width="3" height="6"/><rect x="128" y="60" width="12" height="8"/><rect x="144" y="63" width="4" height="5"/></g>
<!-- ground line building -->
<polygon points="77,128 103,131 163,118 163,121 103,134 77,131" fill="#4a4644"/>
<polygon points="62,114 78,130 80,134 62,118" fill="#c8a83a"/>
<!-- bottom right building -->
<polygon points="176,101 197,100 197,112 180,104" fill="#8a8680"/>
<polygon points="178,103 197,114 197,145 176,145 176,130" fill="#c8a86c"/>
<g fill="#e4e0d8"><rect x="184" y="114" width="3" height="4"/><rect x="191" y="119" width="3" height="4"/><rect x="183" y="125" width="3" height="4"/><rect x="190" y="130" width="3" height="4"/></g>
<rect x="168" y="106" width="8" height="5" fill="#b8a890"/>
</g>
</g>
</svg>

</div>
</body>
</html>
